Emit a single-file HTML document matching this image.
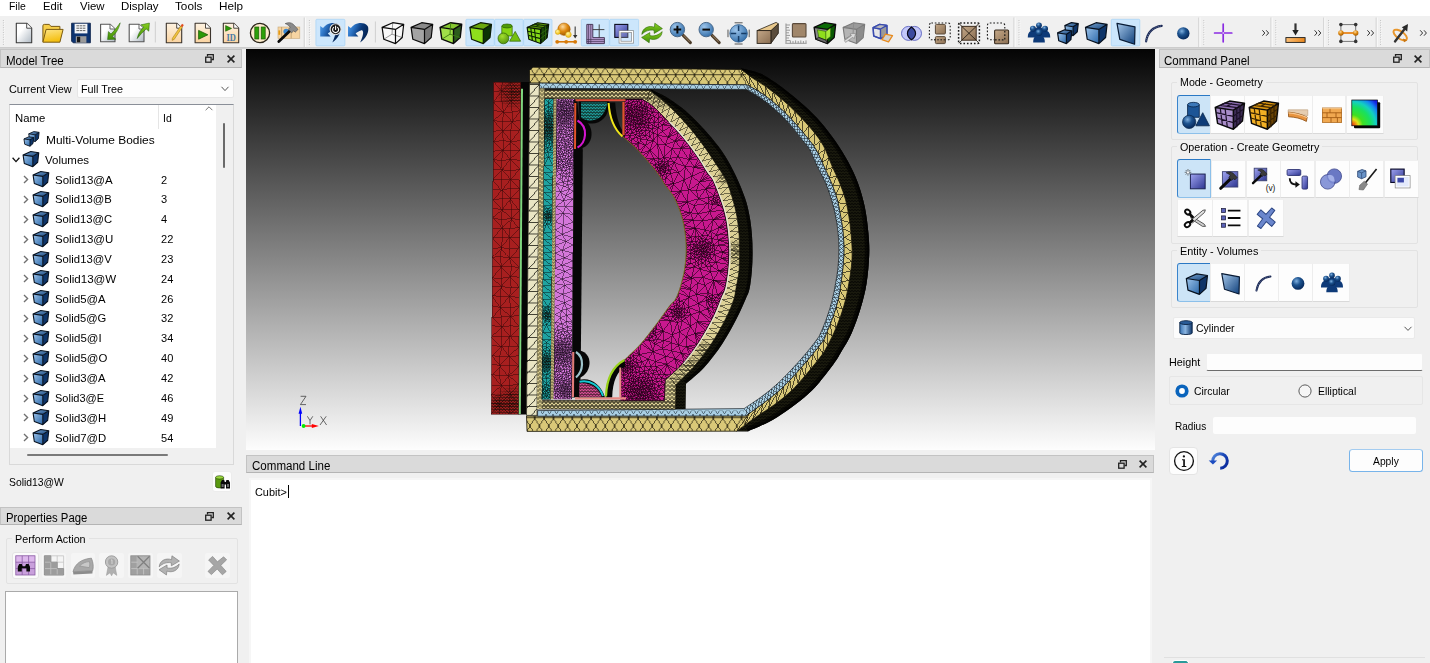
<!DOCTYPE html><html><head><meta charset="utf-8"><title>Cubit</title><style>
html,body{margin:0;padding:0;overflow:hidden;font-family:"Liberation Sans",sans-serif}
html{width:1430px;height:663px}
body{width:1430px;height:663px;overflow:hidden;background:#f0f0f0;position:relative;font-family:"Liberation Sans",sans-serif;font-size:12px;color:#000}
.t{position:absolute;white-space:nowrap;line-height:1.15em;transform-origin:0 50%;display:block}
.a{position:absolute;box-sizing:border-box}
.tb{position:absolute;box-sizing:border-box;background:#dadada;border:1px solid #c3c3c3;border-bottom-color:#b4b4b4}
.gb{position:absolute;box-sizing:border-box;border:1px solid #e2e2e2;border-radius:2px}
.wb{position:absolute;box-sizing:border-box;background:#fbfbfb;border-radius:3px;border:1px solid #ececec}
svg{position:absolute;overflow:visible}
</style></head><body>
<div class="a" style="left:0;top:0;width:1430px;height:16px;background:#fff"></div>
<span class="t" style="left:8.70px;top:0px;font-size:11.5px;transform:scaleX(0.9067);color:#000;">File</span>
<span class="t" style="left:42.80px;top:0px;font-size:11.5px;transform:scaleX(0.9740);color:#000;">Edit</span>
<span class="t" style="left:79.50px;top:0px;font-size:11.5px;transform:scaleX(0.9912);color:#000;">View</span>
<span class="t" style="left:120.80px;top:0px;font-size:11.5px;transform:scaleX(0.9972);color:#000;">Display</span>
<span class="t" style="left:175.00px;top:0px;font-size:11.5px;transform:scaleX(1.0207);color:#000;">Tools</span>
<span class="t" style="left:218.90px;top:0px;font-size:11.5px;transform:scaleX(1.0190);color:#000;">Help</span>
<div class="a" style="left:0;top:16px;width:1430px;height:31px;background:#f0f0f0"></div>
<div class="a" style="left:0;top:47px;width:1430px;height:2px;background:linear-gradient(#c8c8c8,#d8d8d8)"></div>
<svg style="left:0;top:0" width="1430" height="49" viewBox="0 0 1430 49"><defs>
<linearGradient id="gPage" x1="0" y1="0" x2="1" y2="1"><stop offset="0.35" stop-color="#ffffff"/><stop offset="1" stop-color="#aeb8c2"/></linearGradient>
<linearGradient id="gFold" x1="0" y1="0" x2="0.3" y2="1"><stop offset="0" stop-color="#fde58a"/><stop offset="1" stop-color="#f4bf10"/></linearGradient>
<linearGradient id="gCream" x1="0" y1="0" x2="0" y2="1"><stop offset="0" stop-color="#fef3e2"/><stop offset="1" stop-color="#fad3a0"/></linearGradient>
<linearGradient id="gBlueArrow" x1="0" y1="0.1" x2="1" y2="0.5"><stop offset="0" stop-color="#4f9cea"/><stop offset="0.3" stop-color="#2a70c0"/><stop offset="0.62" stop-color="#0a3878"/><stop offset="1" stop-color="#03224f"/></linearGradient>
<linearGradient id="gBlueFace" x1="0" y1="0" x2="1" y2="1"><stop offset="0" stop-color="#9cc3ea"/><stop offset="1" stop-color="#2a67a8"/></linearGradient>
<linearGradient id="gBlueTop" x1="0" y1="0" x2="1" y2="1"><stop offset="0" stop-color="#7aa6d2"/><stop offset="1" stop-color="#16447c"/></linearGradient>
<linearGradient id="gSurf" x1="0" y1="0" x2="1" y2="1"><stop offset="0" stop-color="#a6c8ea"/><stop offset="1" stop-color="#0f3f7a"/></linearGradient>
<radialGradient id="gBall" cx="0.38" cy="0.32" r="0.7"><stop offset="0" stop-color="#7fb0e0"/><stop offset="0.45" stop-color="#1d538f"/><stop offset="1" stop-color="#06285a"/></radialGradient>
<radialGradient id="gLens" cx="0.35" cy="0.3" r="0.8"><stop offset="0" stop-color="#9cc4ea"/><stop offset="1" stop-color="#2c69a6"/></radialGradient>
<radialGradient id="gOrb" cx="0.4" cy="0.3" r="0.75"><stop offset="0" stop-color="#fbd9a0"/><stop offset="0.5" stop-color="#e08a10"/><stop offset="1" stop-color="#9c5400"/></radialGradient>
<radialGradient id="gYel" cx="0.4" cy="0.3" r="0.75"><stop offset="0" stop-color="#fff2a0"/><stop offset="1" stop-color="#f0b800"/></radialGradient>
<radialGradient id="gGrn" cx="0.4" cy="0.3" r="0.8"><stop offset="0" stop-color="#a4e030"/><stop offset="1" stop-color="#4a8a06"/></radialGradient>
<linearGradient id="gBrown" x1="0" y1="0" x2="1" y2="1"><stop offset="0" stop-color="#c4a888"/><stop offset="1" stop-color="#8a6e52"/></linearGradient>
<linearGradient id="gPurp" x1="0" y1="0" x2="1" y2="1"><stop offset="0" stop-color="#a0a4f0"/><stop offset="1" stop-color="#2c3490"/></linearGradient>
<linearGradient id="gOrBar" x1="0" y1="0" x2="1" y2="0"><stop offset="0" stop-color="#fbc078"/><stop offset="1" stop-color="#e8861c"/></linearGradient>
<linearGradient id="gGrnArrow" x1="0" y1="0" x2="0" y2="1"><stop offset="0" stop-color="#8ad020"/><stop offset="1" stop-color="#3f8c08"/></linearGradient>
</defs><path d="M3.4 20V45" stroke="#c2c2c2" stroke-width="1" stroke-dasharray="1 1.4"/><path d="M4.4 20.6V45" stroke="#fafafa" stroke-width="1" stroke-dasharray="1 1.4"/><rect x="315.9" y="19.3" width="29.0" height="26.6" fill="#cce6fc" stroke="#a6d2f7" stroke-width="0.7" rx="1"/><rect x="465.9" y="19.3" width="28.4" height="26.6" fill="#cce6fc" stroke="#a6d2f7" stroke-width="0.7" rx="1"/><rect x="494.7" y="19.3" width="28.5" height="26.6" fill="#cce6fc" stroke="#a6d2f7" stroke-width="0.7" rx="1"/><rect x="523.6" y="19.3" width="28.4" height="26.6" fill="#cce6fc" stroke="#a6d2f7" stroke-width="0.7" rx="1"/><rect x="581.3" y="19.3" width="28.0" height="26.6" fill="#cce6fc" stroke="#a6d2f7" stroke-width="0.7" rx="1"/><rect x="609.7" y="19.3" width="28.9" height="26.6" fill="#cce6fc" stroke="#a6d2f7" stroke-width="0.7" rx="1"/><rect x="1111.3" y="19.3" width="28.5" height="26.6" fill="#cce6fc" stroke="#a6d2f7" stroke-width="0.7" rx="1"/><g transform="translate(24.0,33.0)"><path d="M-7.7 -9.8H2.7L7.7 -4.800000000000001V9.8H-7.7Z" fill="url(#gPage)" stroke="#3a3a3a" stroke-width="1.1" stroke-linejoin="round"/><path d="M2.7 -9.8V-4.800000000000001H7.7" fill="#fff" stroke="#3a3a3a" stroke-width="0.9" stroke-linejoin="round"/></g><g transform="translate(52.7,33.0)"><path d="M-9.8 8.8V-7.2Q-9.8 -8.6 -8.4 -8.6H-3.4L-1.8 -6.6H7.2V-3" fill="#f7cf4a" stroke="#7a5a10" stroke-width="1"/><path d="M-9.8 9.2L-6.6 -3.6H10.4L7.2 9.2Z" fill="url(#gFold)" stroke="#7a5a10" stroke-width="1" stroke-linejoin="round"/></g><g transform="translate(81.2,33.0)"><path d="M-9.6 -9.8H9.2V9.8H-8L-9.6 8.2Z" fill="#0e3470" stroke="#061c44" stroke-width="0.8"/><rect x="-6.6" y="-9.2" width="12.8" height="9.6" fill="#f4f6f8"/><path d="M-4.8 -7.2H4.4M-4.8 -4.8H4.4M-4.8 -2.4H4.4" stroke="#555" stroke-width="0.9" stroke-dasharray="2.6 0.6"/><rect x="-5.4" y="3.2" width="10.6" height="6.6" fill="#9a9a9a"/><rect x="-4.2" y="3.8" width="3.2" height="5.4" fill="#1a1a1a"/></g><g transform="translate(110.0,33.0)"><path d="M-9.4 -8.8H0L5 -4V8.8H-9.4Z" fill="url(#gPage)" stroke="#555" stroke-width="1.1" stroke-linejoin="round"/><path d="M0 -8.8V-4H5" fill="#fff" stroke="#555" stroke-width="0.9"/><path d="M10.2 -10.2C8.6 -3.4 5.6 0.8 2.4 3.4L5.8 6.2L-2.4 6.6L-1.6 -1.4L1 1C4 -2 7 -5.6 10.2 -10.2Z" fill="url(#gGrnArrow)" stroke="#1c5a04" stroke-width="0.5"/></g><g transform="translate(139.0,33.0)"><path d="M-9.8 -8.8H0L5 -4V8.8H-9.8Z" fill="url(#gPage)" stroke="#555" stroke-width="1.1" stroke-linejoin="round"/><path d="M0 -8.8V-4H5" fill="#fff" stroke="#555" stroke-width="0.9"/><path d="M-1.8 5.6C-0.8 0.4 1.6 -3.4 4.8 -5.8L2 -8.2L10.4 -10L9.8 -1.8L7.2 -4C4.4 -1.6 1 2 -1.8 5.6Z" fill="url(#gGrnArrow)" stroke="#1c5a04" stroke-width="0.5"/></g><g transform="translate(174.0,33.0)"><path d="M-7.7 -9.8H2.7L7.7 -4.800000000000001V9.8H-7.7Z" fill="url(#gCream)" stroke="#3c342c" stroke-width="1.1" stroke-linejoin="round"/><path d="M2.7 -9.8V-4.800000000000001H7.7" fill="#fff" stroke="#3c342c" stroke-width="0.9" stroke-linejoin="round"/><path d="M-1.6 5.2L6.6 -7L8.4 -5.8L0.2 6.4L-1.9 7.4Z" fill="#f2c23c" stroke="#9a7410" stroke-width="0.5"/><path d="M6.6 -7L8 -9.2L9.8 -8L8.4 -5.8Z" fill="#e04a1c"/></g><g transform="translate(202.8,33.0)"><path d="M-7.7 -9.8H2.7L7.7 -4.800000000000001V9.8H-7.7Z" fill="url(#gCream)" stroke="#3c342c" stroke-width="1.1" stroke-linejoin="round"/><path d="M2.7 -9.8V-4.800000000000001H7.7" fill="#fff" stroke="#3c342c" stroke-width="0.9" stroke-linejoin="round"/><path d="M-4.2 -2.6L5 1.8L-4.2 6.2Z" fill="#2c9a08" stroke="#1a5c04" stroke-width="0.8" stroke-linejoin="round"/></g><g transform="translate(231.0,33.0)"><path d="M-7.7 -9.8H2.7L7.7 -4.800000000000001V9.8H-7.7Z" fill="url(#gCream)" stroke="#3c342c" stroke-width="1.1" stroke-linejoin="round"/><path d="M2.7 -9.8V-4.800000000000001H7.7" fill="#fff" stroke="#3c342c" stroke-width="0.9" stroke-linejoin="round"/><path d="M-5.4 -7.4L0.6 -4.6L-5.4 -1.8Z" fill="#2c9a08" stroke="#1a5c04" stroke-width="0.6"/><text x="-4.6" y="7.6" font-family="Liberation Serif" font-size="9.4" font-weight="bold" fill="#4a7aa6" textLength="9.4" lengthAdjust="spacingAndGlyphs">ID</text></g><g transform="translate(260.0,33.0)"><circle cx="0" cy="0" r="9.6" fill="#fdeccc" stroke="#2a2418" stroke-width="1.3"/><rect x="-5.2" y="-6" width="4" height="12" fill="#2ca008" stroke="#1a5c04" stroke-width="0.7"/><rect x="1.2" y="-6" width="4" height="12" fill="#2ca008" stroke="#1a5c04" stroke-width="0.7"/></g><g transform="translate(289.0,33.0)"><rect x="-11" y="-6" width="21.8" height="11.4" fill="#f6d4a2" stroke="#c8a878" stroke-width="0.6"/><path d="M-7.4 -6V5.4M2.2 -6V5.4" stroke="#b89868" stroke-width="0.8"/><circle cx="-2.8" cy="-1.4" r="2.8" fill="#3a86d0"/><rect x="-10.6" y="-2.6" width="1.8" height="4.4" fill="#e89a10"/><path d="M-10.2 8.6L3.4 -4.4" stroke="#0a0a0a" stroke-width="2.8" stroke-linecap="round"/><path d="M-3.8 -9.4C-0.6 -11 2.4 -10.4 4.4 -8.6L9 -3.6L6.2 -0.8L4.8 -2.2L2.6 -0.2L-0.6 -3.8L1.2 -5.8C0 -7.6 -1.8 -8.6 -3.8 -9.4Z" fill="#8a8a8a" stroke="#4a4a4a" stroke-width="0.6"/></g><g transform="translate(330.4,33.0)"><g transform="translate(0.4,0)"><path d="M-10.6 -7L-7.8 -4.9C-5 -8 -2.6 -9.6 -0.2 -9.8C2 -10.2 4 -10 5.7 -9.4C8.4 -8.4 9.9 -6.4 9.7 -4.3C9.8 -2 9.2 0 8.2 2.1C6.6 5.2 4.2 7.8 1.5 9.4C2.8 7 3.8 4.4 4.2 2.1C4.5 0.6 4.6 -0.4 4.4 -1.3C4 -2.6 3.2 -2.9 2.3 -2.6C0.4 -2.2 -1.4 -1 -3 0.6L-0.2 3.5H-10.6Z" fill="url(#gBlueArrow)"/></g><circle cx="5.2" cy="-3.8" r="5.5" fill="#1a1a1a" stroke="#e8e8e8" stroke-width="1.1"/><path d="M3.2 -5.6A3 3 0 1 0 7.2 -5.6M5.2 -7V-3.6" fill="none" stroke="#fff" stroke-width="1.1" stroke-linecap="round"/></g><g transform="translate(358.6,33.0)"><path d="M-10.6 -7L-7.8 -4.9C-5 -8 -2.6 -9.6 -0.2 -9.8C2 -10.2 4 -10 5.7 -9.4C8.4 -8.4 9.9 -6.4 9.7 -4.3C9.8 -2 9.2 0 8.2 2.1C6.6 5.2 4.2 7.8 1.5 9.4C2.8 7 3.8 4.4 4.2 2.1C4.5 0.6 4.6 -0.4 4.4 -1.3C4 -2.6 3.2 -2.9 2.3 -2.6C0.4 -2.2 -1.4 -1 -3 0.6L-0.2 3.5H-10.6Z" fill="url(#gBlueArrow)"/></g><g transform="translate(393.0,33.0)"><path d="M-10.9 -5.6L-0.3 -10.3L10.7 -8.7L9.2 4.5L2.5 10.6L-9.2 6.2Z" fill="#fafafa" opacity="0.9"/><path d="M-0.3 -10.3L-1.0 1.2L-9.2 6.2M-1.0 1.2L9.2 4.5" fill="none" stroke="#9a9a9a" stroke-width="1"/><path d="M-10.9 -5.6L-0.3 -10.3L10.7 -8.7L9.2 4.5L2.5 10.6L-9.2 6.2ZM2.5 -3.6L-10.9 -5.6M2.5 -3.6L10.7 -8.7M2.5 -3.6L2.5 10.6" fill="none" stroke="#0a0a0a" stroke-width="1.2" stroke-linejoin="round"/></g><g transform="translate(422.0,33.0)"><path d="M-10.9 -5.6L2.5 -3.6L2.5 10.6L-9.2 6.2Z" fill="#a4a4a4"/><path d="M-10.9 -5.6L-0.3 -10.3L10.7 -8.7L2.5 -3.6Z" fill="#8a8a8a"/><path d="M2.5 -3.6L10.7 -8.7L9.2 4.5L2.5 10.6Z" fill="#7a7a7a"/><path d="M-10.9 -5.6L-0.3 -10.3L10.7 -8.7L9.2 4.5L2.5 10.6L-9.2 6.2ZM2.5 -3.6L-10.9 -5.6M2.5 -3.6L10.7 -8.7M2.5 -3.6L2.5 10.6" fill="none" stroke="#0a0a0a" stroke-width="1.2" stroke-linejoin="round"/></g><g transform="translate(451.0,33.0)"><path d="M-10.9 -5.6L2.5 -3.6L2.5 10.6L-9.2 6.2Z" fill="#a0e048"/><path d="M-10.9 -5.6L-0.3 -10.3L10.7 -8.7L2.5 -3.6Z" fill="#86c830"/><path d="M2.5 -3.6L10.7 -8.7L9.2 4.5L2.5 10.6Z" fill="#2c5c1c"/><path d="M-10.9 -5.6L-0.3 -10.3L10.7 -8.7L9.2 4.5L2.5 10.6L-9.2 6.2ZM2.5 -3.6L-10.9 -5.6M2.5 -3.6L10.7 -8.7M2.5 -3.6L2.5 10.6" fill="none" stroke="#0a0a0a" stroke-width="1.4" stroke-linejoin="round"/><path d="M-0.3 -10.3L-1.0 1.2L-9.2 6.2M-1.0 1.2L9.2 4.5" fill="none" stroke="#3c7a10" stroke-width="0.9"/></g><g transform="translate(480.8,33.0)"><path d="M-10.9 -5.6L2.5 -3.6L2.5 10.6L-9.2 6.2Z" fill="#8ede1c"/><path d="M-10.9 -5.6L-0.3 -10.3L10.7 -8.7L2.5 -3.6Z" fill="#6aa80c"/><path d="M2.5 -3.6L10.7 -8.7L9.2 4.5L2.5 10.6Z" fill="#0c3404"/><path d="M-10.9 -5.6L-0.3 -10.3L10.7 -8.7L9.2 4.5L2.5 10.6L-9.2 6.2ZM2.5 -3.6L-10.9 -5.6M2.5 -3.6L10.7 -8.7M2.5 -3.6L2.5 10.6" fill="none" stroke="#0a1a04" stroke-width="1.2" stroke-linejoin="round"/></g><g transform="translate(507.2,33.0)"><path d="M-5.4 -7V3H5V-7" fill="#86d414" stroke="#2e6204" stroke-width="0.7"/><ellipse cx="-0.2" cy="-7" rx="5.2" ry="2" fill="#4e9a08" stroke="#2e6204" stroke-width="0.7"/><path d="M8 -1.6L13.4 8.2H2.4Z" fill="#74c010" stroke="#2e6204" stroke-width="0.7" stroke-linejoin="round"/><circle cx="-3.8" cy="5.4" r="5.4" fill="url(#gGrn)" stroke="#2e6204" stroke-width="0.7"/></g><g transform="translate(538.0,33.0)"><path d="M-10.9 -5.6L2.5 -3.6L2.5 10.6L-9.2 6.2Z" fill="#86d818"/><path d="M-10.9 -5.6L-0.3 -10.3L10.7 -8.7L2.5 -3.6Z" fill="#5c960a"/><path d="M2.5 -3.6L10.7 -8.7L9.2 4.5L2.5 10.6Z" fill="#0c2c04"/><path d="M-10.9 -5.6L-0.3 -10.3L10.7 -8.7L9.2 4.5L2.5 10.6L-9.2 6.2ZM2.5 -3.6L-10.9 -5.6M2.5 -3.6L10.7 -8.7M2.5 -3.6L2.5 10.6" fill="none" stroke="#081404" stroke-width="1.1" stroke-linejoin="round"/><path d="M-7.2 -4.9L-5.6 7.6M-3.6 -4.5L-2 9M-10.4 -1.8L2.5 1M-9.8 2.2L2.5 5.6" stroke="#0c2404" stroke-width="1.1" fill="none"/><path d="M-7.2 -7.2L5.4 -5.4M-3.8 -8.8L8 -7.1M-6.6 -7.5L-3.4 -9M-2 -6.6L1.4 -8.4" stroke="#0c2404" stroke-width="0.9" fill="none"/><path d="M5 -5.2V9M7.4 -6.8V6.6M2.5 1L9.6 -4M2.5 5.6L9.4 0.4" stroke="#2e6a0c" stroke-width="0.9" fill="none"/></g><g transform="translate(565.6,33.0)"><path d="M9.6 -6.6V4" stroke="#555" stroke-width="1.3"/><path d="M9.6 5.6L7.4 2H11.8Z" fill="#333"/><circle cx="-1.6" cy="-3.8" r="6.2" fill="url(#gOrb)" stroke="#a45c04" stroke-width="0.5"/><circle cx="-7.8" cy="-1" r="2.5" fill="url(#gYel)" stroke="#c89400" stroke-width="0.4"/><circle cx="2.8" cy="1.6" r="2.9" fill="url(#gYel)" stroke="#c89400" stroke-width="0.4"/><path d="M-8.4 8.8H9.6" stroke="#d87a08" stroke-width="1.6"/><circle cx="-8.4" cy="8.8" r="1.9" fill="#d87a08"/><circle cx="0.6" cy="8.8" r="1.9" fill="#d87a08"/><circle cx="9.6" cy="8.8" r="1.9" fill="#d87a08"/></g><g transform="translate(595.2,33.0)"><path d="M-8.4 -8.6H-2.4V4.6H9.2V10.6H-8.4Z" fill="#b89cd0" stroke="#3c2c4c" stroke-width="0.9"/><path d="M-6.6 -8.6V10.6M-4.4 -8.6V10.6M-8.4 6.6H9.2M-8.4 8.6H9.2" stroke="#3c2c4c" stroke-width="0.7"/><path d="M-2.4 -3.4H9.2M4 -8.6V4.6" stroke="#333" stroke-width="0.9"/></g><g transform="translate(624.0,33.0)"><rect x="-9.2" y="-8.6" width="13" height="13" fill="url(#gPurp)" stroke="#0a0a1a" stroke-width="1.1"/><rect x="-4" y="-1.4" width="12.6" height="10.6" fill="#e8f0ff" fill-opacity="0.25" stroke="#8a8a8a" stroke-width="2.6"/><rect x="-4" y="-1.4" width="12.6" height="10.6" fill="none" stroke="#fff" stroke-width="1.2"/></g><g transform="translate(652.0,33.0)"><path d="M-10.2 1.4C-9.6 -5.4 -2.8 -7.8 2.4 -5.8L2.8 -9.8L10.4 -4.4L2.2 0.4L2.2 -2.6C-2.4 -3.6 -6.8 -2 -10.2 1.4Z" fill="url(#gGrnArrow)" stroke="#2c6a06" stroke-width="0.6"/><path d="M10.2 -1.4C9.6 5.4 2.8 7.8 -2.4 5.8L-2.8 9.8L-10.4 4.4L-2.2 -0.4L-2.2 2.6C2.4 3.6 6.8 2 10.2 -1.4Z" fill="url(#gGrnArrow)" stroke="#2c6a06" stroke-width="0.6"/></g><g transform="translate(680.6,33.0)"><path d="M2.6 2.4L9.8 9.6" stroke="#4a3a28" stroke-width="3" stroke-linecap="round"/><path d="M3 2.4L9.2 8.6" stroke="#8a7458" stroke-width="1.1"/><circle cx="-3.2" cy="-3.4" r="7.2" fill="url(#gLens)" stroke="#4a6a8c" stroke-width="1"/><path d="M-7 -3.4H0.6M-3.2 -7.2V0.4" stroke="#0a0a0a" stroke-width="2"/></g><g transform="translate(709.4,33.0)"><path d="M2.6 2.4L9.8 9.6" stroke="#4a3a28" stroke-width="3" stroke-linecap="round"/><path d="M3 2.4L9.2 8.6" stroke="#8a7458" stroke-width="1.1"/><circle cx="-3.2" cy="-3.4" r="7.2" fill="url(#gLens)" stroke="#4a6a8c" stroke-width="1"/><path d="M-7 -3.4H0.6" stroke="#0a0a0a" stroke-width="2"/></g><g transform="translate(738.6,33.0)"><circle cx="0" cy="0.4" r="8.8" fill="url(#gLens)" stroke="#2c5c8c" stroke-width="0.8"/><path d="M0 -7.6V-2M0 3V8.4M-8 0.4H-2.4M2.6 0.4H8" stroke="#163c66" stroke-width="1.5"/><path d="M-4 -10.2H4M-4 11H4M-10.6 -3.4V4.2M10.6 -3.4V4.2" stroke="#555" stroke-width="1"/></g><g transform="translate(767.5,33.0)"><path d="M3.4 -2.4L10.8 -9.2V0.2L3.4 10.4Z" fill="#5a4c3c" stroke="#2a2218" stroke-width="0.9" stroke-linejoin="round"/><path d="M-10.4 -2.4L8.6 -10.6L10.8 -9.2L3.4 -2.4Z" fill="#e8c88c" stroke="#2a2218" stroke-width="0.8" stroke-linejoin="round"/><rect x="-10.4" y="-2.4" width="13.8" height="12.8" fill="url(#gBrown)" stroke="#2a2218" stroke-width="0.9"/></g><g transform="translate(796.4,33.0)"><path d="M-10.4 -9.6V10.4H10.2" fill="none" stroke="#aaa" stroke-width="1.4"/><path d="M-10.4 -8H-6.4M-10.4 -5.4H-7.4M-10.4 -2.8H-6.4M-10.4 -0.2H-7.4M-10.4 2.4H-6.4M-10.4 5H-7.4M-10.4 7.6H-6.4" stroke="#999" stroke-width="1"/><path d="M-6 10.4V7.4M-3.4 10.4V8M-0.8 10.4V7.4M1.8 10.4V8M4.4 10.4V7.4M7 10.4V8M9.6 10.4V7.4" stroke="#999" stroke-width="1"/><rect x="-4" y="-9.4" width="13.6" height="13.4" rx="1" fill="#a0866a" stroke="#5a4a3a" stroke-width="1.1"/></g><g transform="translate(825.0,33.0)"><path d="M-10.9 -5.6L2.5 -3.6L2.5 10.6L-9.2 6.2Z" fill="#8a8a8a"/><path d="M-10.9 -5.6L-0.3 -10.3L10.7 -8.7L2.5 -3.6Z" fill="#0a6a04"/><path d="M2.5 -3.6L10.7 -8.7L9.2 4.5L2.5 10.6Z" fill="#0a5a04"/><path d="M-10.9 -5.6L-0.3 -10.3L10.7 -8.7L9.2 4.5L2.5 10.6L-9.2 6.2ZM2.5 -3.6L-10.9 -5.6M2.5 -3.6L10.7 -8.7M2.5 -3.6L2.5 10.6" fill="none" stroke="#0a0a0a" stroke-width="1.3" stroke-linejoin="round"/><path d="M-7.6 -3.2L0.8 -1.6L1 7.2L-6.2 4.4Z" fill="#8ede1c" stroke="#2e6204" stroke-width="0.6"/><path d="M0.8 -1.6L5.6 -5L5.4 3.4L1 7.2Z" fill="#a8ec3c" stroke="#2e6204" stroke-width="0.5"/><path d="M-6.2 4.4L1 7.2L2.5 10.6L-9.2 6.2Z" fill="#6a6a6a" stroke="#0a0a0a" stroke-width="0.7"/></g><g transform="translate(854.0,33.0)"><path d="M-10.9 -5.6L2.5 -3.6L2.5 10.6L-9.2 6.2Z" fill="#b4b4b4"/><path d="M-10.9 -5.6L-0.3 -10.3L10.7 -8.7L2.5 -3.6Z" fill="#9a9a9a"/><path d="M2.5 -3.6L10.7 -8.7L9.2 4.5L2.5 10.6Z" fill="#8c8c8c"/><path d="M-10.9 -5.6L-0.3 -10.3L10.7 -8.7L9.2 4.5L2.5 10.6L-9.2 6.2ZM2.5 -3.6L-10.9 -5.6M2.5 -3.6L10.7 -8.7M2.5 -3.6L2.5 10.6" fill="none" stroke="#7a7a7a" stroke-width="1.1" stroke-linejoin="round"/><path d="M-0.3 -10.3L-1.0 1.2L-9.2 6.2M-1.0 1.2L9.2 4.5" fill="none" stroke="#8a8a8a" stroke-width="0.9"/><path d="M-9.6 7.6L-2.6 2.6L-4 0.8L1.6 0.4L0.2 5.8L-1.2 4.2L-8.4 9.4Z" fill="#dcdcdc" stroke="#8a8a8a" stroke-width="0.7"/></g><g transform="translate(882.7,33.0)"><path d="M-9.6 -5.4L-3 -8.6L4.2 -7.6L4.2 2.4L-2.2 5.6L-9 3Z" fill="#e6e6e8" stroke="#3a4cae" stroke-width="1.4" stroke-linejoin="round"/><path d="M-9.6 -5.4L-2.2 -4L4.2 -7.6M-2.2 -4V5.6" fill="none" stroke="#3a4cae" stroke-width="1.2"/><path d="M-2.2 -4L4.2 -7.6V2.4L-2.2 5.6Z" fill="#9a9a9a"/><path d="M-9.6 -5.4L-3 -8.6L4.2 -7.6L-2.2 -4Z" fill="#bcbcbc"/><path d="M-9.6 -5.4L-3 -8.6L4.2 -7.6L4.2 2.4L-2.2 5.6L-9 3ZM-9.6 -5.4L-2.2 -4L4.2 -7.6M-2.2 -4V5.6" fill="none" stroke="#3a4cae" stroke-width="1.3" stroke-linejoin="round"/><path d="M2.8 1.2L9.8 2.6L5.8 8.8L-0.8 6.6Z" fill="#d2d2d2" stroke="#e88a1c" stroke-width="1.3" stroke-linejoin="round"/></g><g transform="translate(911.5,33.0)"><circle cx="-3" cy="0.4" r="7" fill="#c4c8fa" stroke="#4a52b8" stroke-width="0.8"/><circle cx="3" cy="0.4" r="7" fill="#c4c8fa" stroke="#4a52b8" stroke-width="0.8"/><path d="M0 -6C5.4 -2 5.4 3 0 6.8C-5.4 3 -5.4 -2 0 -6Z" fill="#3c4aa0" stroke="#0a0a1a" stroke-width="1.2"/></g><g transform="translate(940.0,33.0)"><rect x="-10.6" y="-10" width="20.8" height="16.8" rx="2" fill="none" stroke="#1a1a1a" stroke-width="1.1" stroke-dasharray="1.6 1.8"/><rect x="-4.6" y="-8.6" width="10" height="9.6" rx="1" fill="url(#gBrown)" stroke="#5a4a3a" stroke-width="1"/><rect x="-4.6" y="3.6" width="10" height="7" rx="1" fill="url(#gBrown)" stroke="#5a4a3a" stroke-width="1"/><path d="M-6 6.8H6.6" stroke="#1a1a1a" stroke-width="1" stroke-dasharray="1.6 1.6"/></g><g transform="translate(969.0,33.0)"><rect x="-10.4" y="-10" width="20.8" height="20.6" rx="1.5" fill="none" stroke="#1a1a1a" stroke-width="1.5" stroke-dasharray="1.6 1.9"/><rect x="-7.2" y="-6.6" width="14.4" height="13.8" fill="url(#gBrown)" stroke="#4a3a2c" stroke-width="1.1"/><path d="M-7.2 -6.6L7.2 7.2M7.2 -6.6L-7.2 7.2M-10 -9.6L-7.2 -6.6M10 -9.6L7.2 -6.6M-10 10.2L-7.2 7.2M10 10.2L7.2 7.2" stroke="#2a2218" stroke-width="0.9"/></g><g transform="translate(998.0,33.0)"><rect x="-10.6" y="-10" width="17.4" height="16.8" rx="2.4" fill="none" stroke="#1a1a1a" stroke-width="1.1" stroke-dasharray="1.7 1.8"/><rect x="-3.4" y="-3" width="14" height="13.8" rx="1" fill="url(#gBrown)" stroke="#3a2e22" stroke-width="1.1"/><path d="M-3 6.8H6.8V-3" fill="none" stroke="#1a1a1a" stroke-width="1.2" stroke-dasharray="1.7 1.7"/></g><g transform="translate(1039.0,33.0)"><g transform="scale(1.08)"><g transform="translate(0,-5.4) scale(0.92)"><path d="M-5 6.6C-5 2 -3 0.2 0 0.2C3 0.2 5 2 5 6.6Z" fill="#0e3a78"/><circle cx="0" cy="-1.9" r="2.9" fill="url(#gBall)"/></g><g transform="translate(-5.6,-2.2) scale(0.96)"><path d="M-5 6.6C-5 2 -3 0.2 0 0.2C3 0.2 5 2 5 6.6Z" fill="#0e3a78"/><circle cx="0" cy="-1.9" r="2.9" fill="url(#gBall)"/></g><g transform="translate(5.6,-2.2) scale(0.96)"><path d="M-5 6.6C-5 2 -3 0.2 0 0.2C3 0.2 5 2 5 6.6Z" fill="#0e3a78"/><circle cx="0" cy="-1.9" r="2.9" fill="url(#gBall)"/></g><g transform="translate(0,1.6) scale(1.08)"><path d="M-5 6.6C-5 2 -3 0.2 0 0.2C3 0.2 5 2 5 6.6Z" fill="#0e3a78"/><circle cx="0" cy="-1.9" r="2.9" fill="url(#gBall)"/></g></g></g><g transform="translate(1068.0,33.0)"><g transform="translate(3.6,-4)"><g transform="scale(0.62)"><path d="M-10.9 -5.6L2.5 -3.6L2.5 10.6L-9.2 6.2Z" fill="url(#gBlueFace)"/><path d="M-10.9 -5.6L-0.3 -10.3L10.7 -8.7L2.5 -3.6Z" fill="url(#gBlueTop)"/><path d="M2.5 -3.6L10.7 -8.7L9.2 4.5L2.5 10.6Z" fill="#0e3468"/><path d="M-10.9 -5.6L-0.3 -10.3L10.7 -8.7L9.2 4.5L2.5 10.6L-9.2 6.2ZM2.5 -3.6L-10.9 -5.6M2.5 -3.6L10.7 -8.7M2.5 -3.6L2.5 10.6" fill="none" stroke="#06101e" stroke-width="1.94" stroke-linejoin="round"/></g></g><g transform="translate(-3.2,3.6)"><g transform="scale(0.66)"><path d="M-10.9 -5.6L2.5 -3.6L2.5 10.6L-9.2 6.2Z" fill="url(#gBlueFace)"/><path d="M-10.9 -5.6L-0.3 -10.3L10.7 -8.7L2.5 -3.6Z" fill="url(#gBlueTop)"/><path d="M2.5 -3.6L10.7 -8.7L9.2 4.5L2.5 10.6Z" fill="#0e3468"/><path d="M-10.9 -5.6L-0.3 -10.3L10.7 -8.7L9.2 4.5L2.5 10.6L-9.2 6.2ZM2.5 -3.6L-10.9 -5.6M2.5 -3.6L10.7 -8.7M2.5 -3.6L2.5 10.6" fill="none" stroke="#06101e" stroke-width="1.82" stroke-linejoin="round"/></g></g></g><g transform="translate(1096.4,33.0)"><g transform="scale(1.0)"><path d="M-10.9 -5.6L2.5 -3.6L2.5 10.6L-9.2 6.2Z" fill="url(#gBlueFace)"/><path d="M-10.9 -5.6L-0.3 -10.3L10.7 -8.7L2.5 -3.6Z" fill="url(#gBlueTop)"/><path d="M2.5 -3.6L10.7 -8.7L9.2 4.5L2.5 10.6Z" fill="#0e3468"/><path d="M-10.9 -5.6L-0.3 -10.3L10.7 -8.7L9.2 4.5L2.5 10.6L-9.2 6.2ZM2.5 -3.6L-10.9 -5.6M2.5 -3.6L10.7 -8.7M2.5 -3.6L2.5 10.6" fill="none" stroke="#06101e" stroke-width="1.20" stroke-linejoin="round"/></g></g><g transform="translate(1125.4,33.0)"><path d="M-8.4 -9.6L9.6 -6.2L9.2 11.2L-5.6 6.4Z" fill="url(#gSurf)" stroke="#081a34" stroke-width="1.2" stroke-linejoin="round"/></g><g transform="translate(1154.5,33.0)"><path d="M-8.4 8.4C-7 -0.6 -1.4 -6.2 7.2 -7.2" fill="none" stroke="#1c2a54" stroke-width="2.2" stroke-linecap="round"/><path d="M-8.4 8.4C-7 -0.6 -1.4 -6.2 7.2 -7.2" fill="none" stroke="#8a9ac8" stroke-width="0.7" stroke-dasharray="1 1.2"/></g><g transform="translate(1183.3,33.0)"><circle cx="0" cy="0.4" r="6.2" fill="url(#gBall)"/></g><g transform="translate(1223.2,33.0)"><path d="M-8.6 0H8.6M0 -8.8V8.8" stroke="#8a2be2" stroke-width="1.7" stroke-linecap="round"/><circle cx="0" cy="0" r="1.1" fill="#fff" stroke="#8a2be2" stroke-width="0.5"/></g><g transform="translate(1295.5,33.0)"><path d="M0 -9.6V-2" stroke="#333" stroke-width="2.2"/><path d="M0 2.4L-3.2 -3H3.2Z" fill="#222"/><rect x="-9.6" y="4.6" width="19.2" height="4.8" fill="url(#gOrBar)" stroke="#1a1a1a" stroke-width="0.9"/></g><g transform="translate(1348.3,33.0)"><path d="M-7.4 -8.4H7.4M-7.4 8.4H7.4M-7.4 -8.4V8.4M7.4 -8.4V8.4" stroke="#777" stroke-width="1"/><circle cx="-7.4" cy="-8.4" r="1.8" fill="#333"/><circle cx="7.4" cy="-8.4" r="1.8" fill="#333"/><circle cx="-7.4" cy="8.4" r="1.8" fill="#333"/><circle cx="7.4" cy="8.4" r="1.8" fill="#333"/><path d="M-7.4 0H7.4" stroke="#e8861c" stroke-width="1.8"/><circle cx="-7.4" cy="0" r="2.7" fill="url(#gOrb)"/><circle cx="7.4" cy="0" r="2.7" fill="url(#gOrb)"/></g><g transform="translate(1400.6,33.0)"><ellipse cx="-0.4" cy="2" rx="7.8" ry="3.6" transform="rotate(35 -0.4 2)" fill="none" stroke="#e8962c" stroke-width="2"/><path d="M-5.6 8.4L4.2 -4.2" stroke="#333" stroke-width="2.4" stroke-linecap="round"/><path d="M7.4 -9L6.6 -1.6L1.2 -5.8Z" fill="#2a2a2a"/><path d="M2.4 5.6L6.6 7.4L3.4 9.2Z" fill="#c87410"/></g><path d="M155.3 21.5V42.5" stroke="#cfcfcf" stroke-width="1"/><path d="M375.4 21.5V42.5" stroke="#cfcfcf" stroke-width="1"/><path d="M304.3 17.5V47" stroke="#d4d4d4" stroke-width="1.2"/><path d="M305.4 17.5V47" stroke="#fbfbfb" stroke-width="1"/><path d="M1014.0 17.5V47" stroke="#d4d4d4" stroke-width="1.2"/><path d="M1015.1 17.5V47" stroke="#fbfbfb" stroke-width="1"/><path d="M1198.8 17.5V47" stroke="#d4d4d4" stroke-width="1.2"/><path d="M1199.9 17.5V47" stroke="#fbfbfb" stroke-width="1"/><path d="M1271.0 17.5V47" stroke="#d4d4d4" stroke-width="1.2"/><path d="M1272.1 17.5V47" stroke="#fbfbfb" stroke-width="1"/><path d="M1323.7 17.5V47" stroke="#d4d4d4" stroke-width="1.2"/><path d="M1324.8 17.5V47" stroke="#fbfbfb" stroke-width="1"/><path d="M1376.2 17.5V47" stroke="#d4d4d4" stroke-width="1.2"/><path d="M1377.3 17.5V47" stroke="#fbfbfb" stroke-width="1"/><path d="M309.4 20V45" stroke="#c2c2c2" stroke-width="1" stroke-dasharray="1 1.4"/><path d="M310.4 20.6V45" stroke="#fafafa" stroke-width="1" stroke-dasharray="1 1.4"/><path d="M1019.0 20V45" stroke="#c2c2c2" stroke-width="1" stroke-dasharray="1 1.4"/><path d="M1020.0 20.6V45" stroke="#fafafa" stroke-width="1" stroke-dasharray="1 1.4"/><path d="M1203.8 20V45" stroke="#c2c2c2" stroke-width="1" stroke-dasharray="1 1.4"/><path d="M1204.8 20.6V45" stroke="#fafafa" stroke-width="1" stroke-dasharray="1 1.4"/><path d="M1275.8 20V45" stroke="#c2c2c2" stroke-width="1" stroke-dasharray="1 1.4"/><path d="M1276.8 20.6V45" stroke="#fafafa" stroke-width="1" stroke-dasharray="1 1.4"/><path d="M1328.6 20V45" stroke="#c2c2c2" stroke-width="1" stroke-dasharray="1 1.4"/><path d="M1329.6 20.6V45" stroke="#fafafa" stroke-width="1" stroke-dasharray="1 1.4"/><path d="M1380.6 20V45" stroke="#c2c2c2" stroke-width="1" stroke-dasharray="1 1.4"/><path d="M1381.6 20.6V45" stroke="#fafafa" stroke-width="1" stroke-dasharray="1 1.4"/><path d="M1262.4 30.3L1264.8 33L1262.4 35.7M1266.2 30.3L1268.6 33L1266.2 35.7" fill="none" stroke="#333" stroke-width="1"/><path d="M1314.6 30.3L1317.0 33L1314.6 35.7M1318.4 30.3L1320.8 33L1318.4 35.7" fill="none" stroke="#333" stroke-width="1"/><path d="M1367.4 30.3L1369.8 33L1367.4 35.7M1371.2 30.3L1373.6 33L1371.2 35.7" fill="none" stroke="#333" stroke-width="1"/><path d="M1420.2 30.3L1422.6 33L1420.2 35.7M1424.0 30.3L1426.4 33L1424.0 35.7" fill="none" stroke="#333" stroke-width="1"/></svg>
<svg style="left:246px;top:49px" width="909" height="401" viewBox="246 49 909 401"><defs><linearGradient id="bgg" x1="0" y1="0" x2="0" y2="1"><stop offset="0" stop-color="#040404"/><stop offset="1" stop-color="#fdfdfd"/></linearGradient><pattern id="pBig" width="9.4" height="15.6" patternUnits="userSpaceOnUse" x="530" y="67.4"><path d="M0 7.8H9.4M0 0L4.7 7.8L9.4 0M0 15.6L4.7 7.8L9.4 15.6" fill="none" stroke="#1a1608" stroke-width="0.75" shape-rendering="crispEdges"/></pattern><pattern id="pArc" width="6" height="7" patternUnits="userSpaceOnUse"><path d="M0 0L3 7L6 0M0 7L3 0L6 7M0 3.5H6" fill="none" stroke="#1a1608" stroke-width="0.6"/></pattern><pattern id="pBlue" width="7" height="5.4" patternUnits="userSpaceOnUse" y="83.5"><path d="M0 0L3.5 5.4L7 0" fill="none" stroke="#1c2a33" stroke-width="0.7" shape-rendering="crispEdges"/></pattern><pattern id="pRed" width="13.4" height="14" patternUnits="userSpaceOnUse" x="493.5" y="82"><path d="M0 0H13.4M0 7H13.4M0 0L6.7 7L13.4 0M0 14L6.7 7L13.4 14M6.7 0V14M0 0V14" fill="none" stroke="#1a0404" stroke-width="0.5"/></pattern><pattern id="pCream" width="11" height="11.5" patternUnits="userSpaceOnUse" x="529" y="84"><path d="M0 0H11M0 11.5L11 0" fill="none" stroke="#15150c" stroke-width="0.8" shape-rendering="crispEdges"/></pattern><pattern id="pFine" width="4" height="4" patternUnits="userSpaceOnUse"><path d="M0 0L2 4L4 0M0 2H4" fill="none" stroke="#0d0c05" stroke-width="0.85"/></pattern><pattern id="pFine2" width="3" height="3" patternUnits="userSpaceOnUse"><path d="M0 0L1.5 3L3 0M0 1.5H3" fill="none" stroke="#0d0c05" stroke-width="0.7"/></pattern><pattern id="pMag" width="8.6" height="10" patternUnits="userSpaceOnUse"><path d="M0 0L4.3 5L8.6 0M0 10L4.3 5L8.6 10M0 5H8.6M4.3 0V10M0 0V10" fill="none" stroke="#1c0212" stroke-width="0.55"/></pattern><pattern id="pMagF" width="3.2" height="3.2" patternUnits="userSpaceOnUse"><path d="M0 0L1.6 3.2L3.2 0M0 1.6H3.2" fill="none" stroke="#1c0212" stroke-width="0.6"/></pattern><pattern id="pVio" width="5" height="5.6" patternUnits="userSpaceOnUse"><path d="M0 0L2.5 5.6L5 0M0 2.8H5M0 0H5" fill="none" stroke="#1a0a1c" stroke-width="0.45"/></pattern><pattern id="pVioF" width="2.6" height="2.6" patternUnits="userSpaceOnUse"><path d="M0 0L1.3 2.6L2.6 0M0 1.3H2.6" fill="none" stroke="#1a0a1c" stroke-width="0.6"/></pattern><pattern id="pTeal" width="4.4" height="6" patternUnits="userSpaceOnUse"><path d="M0 0L2.2 6L4.4 0M0 3H4.4M0 0H4.4" fill="none" stroke="#04191a" stroke-width="0.7"/></pattern><pattern id="pDark" width="3" height="3" patternUnits="userSpaceOnUse"><path d="M0 0L1.5 3L3 0M0 1.5H3" fill="none" stroke="#4a4a2a" stroke-width="0.5"/></pattern><radialGradient id="spot"><stop offset="0" stop-color="#fff"/><stop offset="0.55" stop-color="#fff" stop-opacity="0.55"/><stop offset="1" stop-color="#fff" stop-opacity="0"/></radialGradient></defs><rect x="246" y="49" width="909" height="401" fill="url(#bgg)"/><path d="M741.0 68.3C744.2 69.2 754.5 71.2 760.2 73.6C765.9 76.0 770.3 79.2 775.3 82.6C780.3 86.0 785.4 90.0 790.4 94.0C795.4 98.0 800.5 102.1 805.5 106.8C810.5 111.5 815.5 116.1 820.5 121.9C825.5 127.7 831.0 134.9 835.6 141.5C840.2 148.1 844.3 154.6 848.0 161.5C851.7 168.4 855.2 175.6 858.0 183.2C860.8 190.8 863.1 198.7 864.8 207.0C866.5 215.3 867.7 224.9 868.4 232.9C869.1 240.9 869.5 246.6 869.2 255.0C868.9 263.4 868.0 274.4 866.6 283.2C865.2 292.0 863.2 299.7 860.7 308.0C858.2 316.3 854.8 325.8 851.7 332.9C848.6 340.0 844.9 345.6 842.0 350.5C839.1 355.4 838.4 357.3 834.6 362.6C830.9 367.9 824.5 376.4 819.5 382.2C814.5 388.0 810.0 392.5 804.5 397.3C799.0 402.1 792.4 406.8 786.4 410.9C780.4 415.0 774.7 418.8 768.3 422.2C761.9 425.6 751.3 429.9 747.9 431.4L736.0 431.6L745.6 415.9C748.9 413.5 759.2 406.4 765.2 401.8C771.2 397.2 776.5 393.2 781.8 388.3C787.1 383.4 792.1 377.7 796.9 372.4C801.7 367.1 806.2 361.8 810.5 356.6C814.8 351.5 819.8 345.4 822.5 341.5C825.2 337.6 824.7 337.1 826.5 332.9C828.3 328.7 831.2 321.8 833.1 316.3C835.0 310.8 836.8 305.3 838.1 299.8C839.4 294.3 840.1 288.7 840.9 283.2C841.7 277.7 842.5 272.1 843.0 266.6C843.5 261.1 843.9 255.6 843.9 250.0C843.9 244.4 843.6 238.5 843.1 232.9C842.6 227.3 841.6 221.8 840.6 216.3C839.6 210.8 838.8 205.3 837.3 199.8C835.8 194.3 833.7 188.7 831.5 183.2C829.3 177.7 826.5 172.1 824.0 166.6C821.5 161.1 819.3 155.2 816.2 150.0C813.1 144.8 809.8 140.8 805.5 135.5C801.2 130.2 795.4 123.4 790.4 118.1C785.4 112.8 780.3 108.1 775.3 103.8C770.3 99.5 765.0 95.6 760.2 92.4C755.4 89.2 748.9 86.1 746.6 84.8Z" fill="#090904"/><clipPath id="cDark"><path d="M741.0 68.3C744.2 69.2 754.5 71.2 760.2 73.6C765.9 76.0 770.3 79.2 775.3 82.6C780.3 86.0 785.4 90.0 790.4 94.0C795.4 98.0 800.5 102.1 805.5 106.8C810.5 111.5 815.5 116.1 820.5 121.9C825.5 127.7 831.0 134.9 835.6 141.5C840.2 148.1 844.3 154.6 848.0 161.5C851.7 168.4 855.2 175.6 858.0 183.2C860.8 190.8 863.1 198.7 864.8 207.0C866.5 215.3 867.7 224.9 868.4 232.9C869.1 240.9 869.5 246.6 869.2 255.0C868.9 263.4 868.0 274.4 866.6 283.2C865.2 292.0 863.2 299.7 860.7 308.0C858.2 316.3 854.8 325.8 851.7 332.9C848.6 340.0 844.9 345.6 842.0 350.5C839.1 355.4 838.4 357.3 834.6 362.6C830.9 367.9 824.5 376.4 819.5 382.2C814.5 388.0 810.0 392.5 804.5 397.3C799.0 402.1 792.4 406.8 786.4 410.9C780.4 415.0 774.7 418.8 768.3 422.2C761.9 425.6 751.3 429.9 747.9 431.4L736.0 431.6L745.6 415.9C748.9 413.5 759.2 406.4 765.2 401.8C771.2 397.2 776.5 393.2 781.8 388.3C787.1 383.4 792.1 377.7 796.9 372.4C801.7 367.1 806.2 361.8 810.5 356.6C814.8 351.5 819.8 345.4 822.5 341.5C825.2 337.6 824.7 337.1 826.5 332.9C828.3 328.7 831.2 321.8 833.1 316.3C835.0 310.8 836.8 305.3 838.1 299.8C839.4 294.3 840.1 288.7 840.9 283.2C841.7 277.7 842.5 272.1 843.0 266.6C843.5 261.1 843.9 255.6 843.9 250.0C843.9 244.4 843.6 238.5 843.1 232.9C842.6 227.3 841.6 221.8 840.6 216.3C839.6 210.8 838.8 205.3 837.3 199.8C835.8 194.3 833.7 188.7 831.5 183.2C829.3 177.7 826.5 172.1 824.0 166.6C821.5 161.1 819.3 155.2 816.2 150.0C813.1 144.8 809.8 140.8 805.5 135.5C801.2 130.2 795.4 123.4 790.4 118.1C785.4 112.8 780.3 108.1 775.3 103.8C770.3 99.5 765.0 95.6 760.2 92.4C755.4 89.2 748.9 86.1 746.6 84.8Z"/></clipPath><g clip-path="url(#cDark)"><path d="M741.0 68.3C744.2 69.2 754.5 71.2 760.2 73.6C765.9 76.0 770.3 79.2 775.3 82.6C780.3 86.0 785.4 90.0 790.4 94.0C795.4 98.0 800.5 102.1 805.5 106.8C810.5 111.5 815.5 116.1 820.5 121.9C825.5 127.7 831.0 134.9 835.6 141.5C840.2 148.1 844.3 154.6 848.0 161.5C851.7 168.4 855.2 175.6 858.0 183.2C860.8 190.8 863.1 198.7 864.8 207.0C866.5 215.3 867.7 224.9 868.4 232.9C869.1 240.9 869.5 246.6 869.2 255.0C868.9 263.4 868.0 274.4 866.6 283.2C865.2 292.0 863.2 299.7 860.7 308.0C858.2 316.3 854.8 325.8 851.7 332.9C848.6 340.0 844.9 345.6 842.0 350.5C839.1 355.4 838.4 357.3 834.6 362.6C830.9 367.9 824.5 376.4 819.5 382.2C814.5 388.0 810.0 392.5 804.5 397.3C799.0 402.1 792.4 406.8 786.4 410.9C780.4 415.0 774.7 418.8 768.3 422.2C761.9 425.6 751.3 429.9 747.9 431.4L736.0 431.6L745.6 415.9C748.9 413.5 759.2 406.4 765.2 401.8C771.2 397.2 776.5 393.2 781.8 388.3C787.1 383.4 792.1 377.7 796.9 372.4C801.7 367.1 806.2 361.8 810.5 356.6C814.8 351.5 819.8 345.4 822.5 341.5C825.2 337.6 824.7 337.1 826.5 332.9C828.3 328.7 831.2 321.8 833.1 316.3C835.0 310.8 836.8 305.3 838.1 299.8C839.4 294.3 840.1 288.7 840.9 283.2C841.7 277.7 842.5 272.1 843.0 266.6C843.5 261.1 843.9 255.6 843.9 250.0C843.9 244.4 843.6 238.5 843.1 232.9C842.6 227.3 841.6 221.8 840.6 216.3C839.6 210.8 838.8 205.3 837.3 199.8C835.8 194.3 833.7 188.7 831.5 183.2C829.3 177.7 826.5 172.1 824.0 166.6C821.5 161.1 819.3 155.2 816.2 150.0C813.1 144.8 809.8 140.8 805.5 135.5C801.2 130.2 795.4 123.4 790.4 118.1C785.4 112.8 780.3 108.1 775.3 103.8C770.3 99.5 765.0 95.6 760.2 92.4C755.4 89.2 748.9 86.1 746.6 84.8Z" fill="url(#pDark)" opacity="0.38"/><path d="M741.0 68.3C744.2 69.2 754.5 71.2 760.2 73.6C765.9 76.0 770.3 79.2 775.3 82.6C780.3 86.0 785.4 90.0 790.4 94.0C795.4 98.0 800.5 102.1 805.5 106.8C810.5 111.5 815.5 116.1 820.5 121.9C825.5 127.7 831.0 134.9 835.6 141.5C840.2 148.1 844.3 154.6 848.0 161.5C851.7 168.4 855.2 175.6 858.0 183.2C860.8 190.8 863.1 198.7 864.8 207.0C866.5 215.3 867.7 224.9 868.4 232.9C869.1 240.9 869.5 246.6 869.2 255.0C868.9 263.4 868.0 274.4 866.6 283.2C865.2 292.0 863.2 299.7 860.7 308.0C858.2 316.3 854.8 325.8 851.7 332.9C848.6 340.0 844.9 345.6 842.0 350.5C839.1 355.4 838.4 357.3 834.6 362.6C830.9 367.9 824.5 376.4 819.5 382.2C814.5 388.0 810.0 392.5 804.5 397.3C799.0 402.1 792.4 406.8 786.4 410.9C780.4 415.0 774.7 418.8 768.3 422.2C761.9 425.6 751.3 429.9 747.9 431.4" fill="none" stroke="#000" stroke-width="9" opacity="0.6"/><path d="M741.0 68.3C744.2 69.2 754.5 71.2 760.2 73.6C765.9 76.0 770.3 79.2 775.3 82.6C780.3 86.0 785.4 90.0 790.4 94.0C795.4 98.0 800.5 102.1 805.5 106.8C810.5 111.5 815.5 116.1 820.5 121.9C825.5 127.7 831.0 134.9 835.6 141.5C840.2 148.1 844.3 154.6 848.0 161.5C851.7 168.4 855.2 175.6 858.0 183.2C860.8 190.8 863.1 198.7 864.8 207.0C866.5 215.3 867.7 224.9 868.4 232.9C869.1 240.9 869.5 246.6 869.2 255.0C868.9 263.4 868.0 274.4 866.6 283.2C865.2 292.0 863.2 299.7 860.7 308.0C858.2 316.3 854.8 325.8 851.7 332.9C848.6 340.0 844.9 345.6 842.0 350.5C839.1 355.4 838.4 357.3 834.6 362.6C830.9 367.9 824.5 376.4 819.5 382.2C814.5 388.0 810.0 392.5 804.5 397.3C799.0 402.1 792.4 406.8 786.4 410.9C780.4 415.0 774.7 418.8 768.3 422.2C761.9 425.6 751.3 429.9 747.9 431.4" fill="none" stroke="#000" stroke-width="4" opacity="0.7"/></g><path d="M533.0 67.2L741.3 69.5C743.2 70.9 748.2 75.0 752.6 78.1C757.0 81.2 762.7 84.2 767.7 87.9C772.7 91.6 777.8 95.6 782.8 100.0C787.8 104.4 792.9 109.1 797.9 114.3C802.9 119.5 808.7 125.6 813.0 130.9C817.3 136.2 820.4 140.1 823.6 146.0C826.8 151.9 829.6 160.4 832.3 166.6C835.0 172.8 837.6 177.7 839.8 183.2C842.0 188.7 844.1 194.3 845.6 199.8C847.1 205.3 848.0 210.8 848.9 216.3C849.8 221.8 850.5 227.3 851.0 232.9C851.5 238.5 852.1 244.4 852.2 250.0C852.3 255.6 852.0 261.1 851.4 266.6C850.8 272.1 849.9 277.7 848.9 283.2C847.9 288.7 847.0 294.3 845.6 299.8C844.2 305.3 842.6 310.8 840.6 316.3C838.6 321.8 836.4 327.4 833.9 332.9C831.4 338.4 827.8 345.3 825.4 349.5C823.0 353.7 822.7 353.9 819.5 358.1C816.3 362.3 810.8 369.2 806.0 374.7C801.2 380.2 796.2 386.3 790.9 391.3C785.6 396.3 780.1 400.5 774.3 404.8C768.5 409.1 762.5 412.5 756.2 416.9C749.9 421.3 739.9 428.8 736.6 431.2L527.0 431.4L526.5 416.0L541.0 416.2L745.6 415.9C748.9 413.5 759.2 406.4 765.2 401.8C771.2 397.2 776.5 393.2 781.8 388.3C787.1 383.4 792.1 377.7 796.9 372.4C801.7 367.1 806.2 361.8 810.5 356.6C814.8 351.5 819.8 345.4 822.5 341.5C825.2 337.6 824.7 337.1 826.5 332.9C828.3 328.7 831.2 321.8 833.1 316.3C835.0 310.8 836.8 305.3 838.1 299.8C839.4 294.3 840.1 288.7 840.9 283.2C841.7 277.7 842.5 272.1 843.0 266.6C843.5 261.1 843.9 255.6 843.9 250.0C843.9 244.4 843.6 238.5 843.1 232.9C842.6 227.3 841.6 221.8 840.6 216.3C839.6 210.8 838.8 205.3 837.3 199.8C835.8 194.3 833.7 188.7 831.5 183.2C829.3 177.7 826.5 172.1 824.0 166.6C821.5 161.1 819.3 155.2 816.2 150.0C813.1 144.8 809.8 140.8 805.5 135.5C801.2 130.2 795.4 123.4 790.4 118.1C785.4 112.8 780.3 108.1 775.3 103.8C770.3 99.5 765.0 95.6 760.2 92.4C755.4 89.2 748.9 86.1 746.6 84.8L539.0 83.1L529.5 83.1L529.5 70.5Z" fill="#d9c878"/><clipPath id="cTan"><path d="M533.0 67.2L741.3 69.5C743.2 70.9 748.2 75.0 752.6 78.1C757.0 81.2 762.7 84.2 767.7 87.9C772.7 91.6 777.8 95.6 782.8 100.0C787.8 104.4 792.9 109.1 797.9 114.3C802.9 119.5 808.7 125.6 813.0 130.9C817.3 136.2 820.4 140.1 823.6 146.0C826.8 151.9 829.6 160.4 832.3 166.6C835.0 172.8 837.6 177.7 839.8 183.2C842.0 188.7 844.1 194.3 845.6 199.8C847.1 205.3 848.0 210.8 848.9 216.3C849.8 221.8 850.5 227.3 851.0 232.9C851.5 238.5 852.1 244.4 852.2 250.0C852.3 255.6 852.0 261.1 851.4 266.6C850.8 272.1 849.9 277.7 848.9 283.2C847.9 288.7 847.0 294.3 845.6 299.8C844.2 305.3 842.6 310.8 840.6 316.3C838.6 321.8 836.4 327.4 833.9 332.9C831.4 338.4 827.8 345.3 825.4 349.5C823.0 353.7 822.7 353.9 819.5 358.1C816.3 362.3 810.8 369.2 806.0 374.7C801.2 380.2 796.2 386.3 790.9 391.3C785.6 396.3 780.1 400.5 774.3 404.8C768.5 409.1 762.5 412.5 756.2 416.9C749.9 421.3 739.9 428.8 736.6 431.2L527.0 431.4L526.5 416.0L541.0 416.2L745.6 415.9C748.9 413.5 759.2 406.4 765.2 401.8C771.2 397.2 776.5 393.2 781.8 388.3C787.1 383.4 792.1 377.7 796.9 372.4C801.7 367.1 806.2 361.8 810.5 356.6C814.8 351.5 819.8 345.4 822.5 341.5C825.2 337.6 824.7 337.1 826.5 332.9C828.3 328.7 831.2 321.8 833.1 316.3C835.0 310.8 836.8 305.3 838.1 299.8C839.4 294.3 840.1 288.7 840.9 283.2C841.7 277.7 842.5 272.1 843.0 266.6C843.5 261.1 843.9 255.6 843.9 250.0C843.9 244.4 843.6 238.5 843.1 232.9C842.6 227.3 841.6 221.8 840.6 216.3C839.6 210.8 838.8 205.3 837.3 199.8C835.8 194.3 833.7 188.7 831.5 183.2C829.3 177.7 826.5 172.1 824.0 166.6C821.5 161.1 819.3 155.2 816.2 150.0C813.1 144.8 809.8 140.8 805.5 135.5C801.2 130.2 795.4 123.4 790.4 118.1C785.4 112.8 780.3 108.1 775.3 103.8C770.3 99.5 765.0 95.6 760.2 92.4C755.4 89.2 748.9 86.1 746.6 84.8L539.0 83.1L529.5 83.1L529.5 70.5Z"/></clipPath><g clip-path="url(#cTan)"><rect x="526" y="67" width="220" height="17" fill="url(#pBig)"/><rect x="526" y="415.8" width="222" height="15.6" fill="url(#pBig)" transform="translate(0,-0.2)"/><path d="M741.3 69.5L750.5 86.8L749.0 75.5L758.2 91.1L757.0 81.0L765.4 96.0L765.3 86.2L772.4 101.4L773.1 92.0L779.1 107.1L780.6 98.1L785.5 113.1L787.9 104.6L791.6 119.4L795.0 111.3L797.5 125.9L801.8 118.3L803.1 132.6L808.4 125.5L808.7 139.4L814.6 132.9L813.9 146.4L820.4 140.7L818.4 154.0L825.2 149.2L822.0 162.0L828.9 158.2L825.6 170.0L832.6 167.2L829.3 178.0L836.7 176.1L832.6 186.1L840.5 185.0L835.6 194.3L843.9 194.2L838.0 202.8L846.5 203.5L839.8 211.4L848.4 213.1L841.2 220.0L849.8 222.7L842.6 228.7L851.0 232.4L843.5 237.4L851.8 242.1L843.9 246.2L852.2 251.9L843.8 255.0L851.8 261.6L843.2 263.7L850.8 271.3L842.4 272.5L849.3 280.9L841.2 281.2L847.6 290.5L839.9 289.8L845.5 300.0L838.4 298.5L842.9 309.4L836.2 307.0L839.8 318.6L833.4 315.3L836.2 327.7L830.4 323.5L832.2 336.5L827.0 331.7L827.8 345.2L823.6 339.7L822.9 353.6L818.5 346.9L816.9 361.4L812.9 353.6L810.8 368.9L807.3 360.4L804.5 376.4L801.6 367.1L798.2 383.7L795.8 373.6L791.4 390.8L789.9 380.1L784.1 397.2L783.8 386.4L776.4 403.2L777.3 392.3L768.5 408.8L770.4 397.8L760.3 414.1L763.4 403.1L752.3 419.7L756.3 408.3L744.4 425.4L749.2 413.4L736.6 431.2" fill="none" stroke="#1a1608" stroke-width="0.7" shape-rendering="crispEdges"/></g><path d="M533.0 67.2L741.3 69.5C743.2 70.9 748.2 75.0 752.6 78.1C757.0 81.2 762.7 84.2 767.7 87.9C772.7 91.6 777.8 95.6 782.8 100.0C787.8 104.4 792.9 109.1 797.9 114.3C802.9 119.5 808.7 125.6 813.0 130.9C817.3 136.2 820.4 140.1 823.6 146.0C826.8 151.9 829.6 160.4 832.3 166.6C835.0 172.8 837.6 177.7 839.8 183.2C842.0 188.7 844.1 194.3 845.6 199.8C847.1 205.3 848.0 210.8 848.9 216.3C849.8 221.8 850.5 227.3 851.0 232.9C851.5 238.5 852.1 244.4 852.2 250.0C852.3 255.6 852.0 261.1 851.4 266.6C850.8 272.1 849.9 277.7 848.9 283.2C847.9 288.7 847.0 294.3 845.6 299.8C844.2 305.3 842.6 310.8 840.6 316.3C838.6 321.8 836.4 327.4 833.9 332.9C831.4 338.4 827.8 345.3 825.4 349.5C823.0 353.7 822.7 353.9 819.5 358.1C816.3 362.3 810.8 369.2 806.0 374.7C801.2 380.2 796.2 386.3 790.9 391.3C785.6 396.3 780.1 400.5 774.3 404.8C768.5 409.1 762.5 412.5 756.2 416.9C749.9 421.3 739.9 428.8 736.6 431.2L527.0 431.4L526.5 416.0L541.0 416.2L745.6 415.9C748.9 413.5 759.2 406.4 765.2 401.8C771.2 397.2 776.5 393.2 781.8 388.3C787.1 383.4 792.1 377.7 796.9 372.4C801.7 367.1 806.2 361.8 810.5 356.6C814.8 351.5 819.8 345.4 822.5 341.5C825.2 337.6 824.7 337.1 826.5 332.9C828.3 328.7 831.2 321.8 833.1 316.3C835.0 310.8 836.8 305.3 838.1 299.8C839.4 294.3 840.1 288.7 840.9 283.2C841.7 277.7 842.5 272.1 843.0 266.6C843.5 261.1 843.9 255.6 843.9 250.0C843.9 244.4 843.6 238.5 843.1 232.9C842.6 227.3 841.6 221.8 840.6 216.3C839.6 210.8 838.8 205.3 837.3 199.8C835.8 194.3 833.7 188.7 831.5 183.2C829.3 177.7 826.5 172.1 824.0 166.6C821.5 161.1 819.3 155.2 816.2 150.0C813.1 144.8 809.8 140.8 805.5 135.5C801.2 130.2 795.4 123.4 790.4 118.1C785.4 112.8 780.3 108.1 775.3 103.8C770.3 99.5 765.0 95.6 760.2 92.4C755.4 89.2 748.9 86.1 746.6 84.8L539.0 83.1L529.5 83.1L529.5 70.5Z" fill="none" stroke="#17140a" stroke-width="0.8"/><path d="M539.3 83.1L746.6 84.8C748.9 86.1 755.4 89.2 760.2 92.4C765.0 95.6 770.3 99.5 775.3 103.8C780.3 108.1 785.4 112.8 790.4 118.1C795.4 123.4 801.2 130.2 805.5 135.5C809.8 140.8 813.1 144.8 816.2 150.0C819.3 155.2 821.5 161.1 824.0 166.6C826.5 172.1 829.3 177.7 831.5 183.2C833.7 188.7 835.8 194.3 837.3 199.8C838.8 205.3 839.6 210.8 840.6 216.3C841.6 221.8 842.6 227.3 843.1 232.9C843.6 238.5 843.9 244.4 843.9 250.0C843.9 255.6 843.5 261.1 843.0 266.6C842.5 272.1 841.7 277.7 840.9 283.2C840.1 288.7 839.4 294.3 838.1 299.8C836.8 305.3 835.0 310.8 833.1 316.3C831.2 321.8 828.3 328.7 826.5 332.9C824.7 337.1 825.2 337.6 822.5 341.5C819.8 345.4 814.8 351.5 810.5 356.6C806.2 361.8 801.7 367.1 796.9 372.4C792.1 377.7 787.1 383.4 781.8 388.3C776.5 393.2 771.2 397.2 765.2 401.8C759.2 406.4 748.9 413.5 745.6 415.9L537.6 416.2L537.6 410.6L744.1 408.6C746.9 406.7 755.4 401.2 760.7 397.3C766.0 393.4 770.8 389.7 775.8 385.2C780.8 380.7 786.1 375.2 790.9 370.2C795.7 365.2 800.2 360.1 804.5 355.1C808.8 350.1 813.8 343.7 816.5 340.0C819.2 336.3 818.9 336.8 820.7 332.9C822.5 328.9 825.4 321.8 827.3 316.3C829.2 310.8 830.9 305.3 832.3 299.8C833.7 294.3 834.6 288.7 835.6 283.2C836.6 277.7 837.6 272.1 838.1 266.6C838.6 261.1 838.9 255.6 838.9 250.0C838.9 244.4 838.6 238.5 838.1 232.9C837.6 227.3 836.7 221.8 835.6 216.3C834.5 210.8 833.1 205.3 831.5 199.8C829.9 194.3 828.1 188.7 825.7 183.2C823.4 177.7 820.0 172.1 817.4 166.6C814.8 161.1 812.4 154.4 809.9 150.0C807.4 145.6 805.6 144.2 802.4 140.0C799.1 135.8 794.9 129.9 790.4 124.9C785.9 119.9 780.3 114.3 775.3 109.8C770.3 105.3 765.0 101.1 760.2 97.7C755.4 94.3 748.9 90.8 746.6 89.4L539.3 88.3Z" fill="#a9cfe4"/><clipPath id="cBlue"><path d="M539.3 83.1L746.6 84.8C748.9 86.1 755.4 89.2 760.2 92.4C765.0 95.6 770.3 99.5 775.3 103.8C780.3 108.1 785.4 112.8 790.4 118.1C795.4 123.4 801.2 130.2 805.5 135.5C809.8 140.8 813.1 144.8 816.2 150.0C819.3 155.2 821.5 161.1 824.0 166.6C826.5 172.1 829.3 177.7 831.5 183.2C833.7 188.7 835.8 194.3 837.3 199.8C838.8 205.3 839.6 210.8 840.6 216.3C841.6 221.8 842.6 227.3 843.1 232.9C843.6 238.5 843.9 244.4 843.9 250.0C843.9 255.6 843.5 261.1 843.0 266.6C842.5 272.1 841.7 277.7 840.9 283.2C840.1 288.7 839.4 294.3 838.1 299.8C836.8 305.3 835.0 310.8 833.1 316.3C831.2 321.8 828.3 328.7 826.5 332.9C824.7 337.1 825.2 337.6 822.5 341.5C819.8 345.4 814.8 351.5 810.5 356.6C806.2 361.8 801.7 367.1 796.9 372.4C792.1 377.7 787.1 383.4 781.8 388.3C776.5 393.2 771.2 397.2 765.2 401.8C759.2 406.4 748.9 413.5 745.6 415.9L537.6 416.2L537.6 410.6L744.1 408.6C746.9 406.7 755.4 401.2 760.7 397.3C766.0 393.4 770.8 389.7 775.8 385.2C780.8 380.7 786.1 375.2 790.9 370.2C795.7 365.2 800.2 360.1 804.5 355.1C808.8 350.1 813.8 343.7 816.5 340.0C819.2 336.3 818.9 336.8 820.7 332.9C822.5 328.9 825.4 321.8 827.3 316.3C829.2 310.8 830.9 305.3 832.3 299.8C833.7 294.3 834.6 288.7 835.6 283.2C836.6 277.7 837.6 272.1 838.1 266.6C838.6 261.1 838.9 255.6 838.9 250.0C838.9 244.4 838.6 238.5 838.1 232.9C837.6 227.3 836.7 221.8 835.6 216.3C834.5 210.8 833.1 205.3 831.5 199.8C829.9 194.3 828.1 188.7 825.7 183.2C823.4 177.7 820.0 172.1 817.4 166.6C814.8 161.1 812.4 154.4 809.9 150.0C807.4 145.6 805.6 144.2 802.4 140.0C799.1 135.8 794.9 129.9 790.4 124.9C785.9 119.9 780.3 114.3 775.3 109.8C770.3 105.3 765.0 101.1 760.2 97.7C755.4 94.3 748.9 90.8 746.6 89.4L539.3 88.3Z"/></clipPath><g clip-path="url(#cBlue)"><rect x="539" y="83" width="207.6" height="8" fill="url(#pBlue)" opacity="0.8"/><rect x="541" y="409" width="203" height="8" fill="url(#pBlue)" opacity="0.8" transform="translate(0,1.2)"/></g><path d="M746.6 84.8L749.8 91.3L753.5 88.4L756.2 95.1L760.2 92.4L762.4 99.3L766.5 96.8L768.3 103.8L772.6 101.6L774.0 108.6L778.5 106.6L779.5 113.7L784.2 111.9L784.8 118.9L789.7 117.4L789.9 124.4L795.0 123.1L794.7 130.1L800.1 129.0L799.3 136.0L805.0 134.9L803.9 141.8L809.9 141.0L808.5 147.7L814.5 147.3L812.0 154.3L818.4 154.0L815.0 161.1L821.6 161.1L818.0 167.9L824.7 168.2L821.5 174.5L828.0 175.2L824.8 181.2L831.1 182.3L827.6 188.1L833.9 189.5L830.1 195.2L836.5 196.9L832.2 202.3L838.4 204.4L834.1 209.5L839.9 212.0L835.7 216.8L841.2 219.7L837.0 224.1L842.4 227.3L838.0 231.5L843.3 235.1L838.6 239.0L843.8 242.8L838.9 246.4L843.9 250.6L838.9 253.9L843.6 258.3L838.5 261.3L843.0 266.1L837.9 268.8L842.2 273.8L836.8 276.1L841.2 281.5L835.5 283.5L840.0 289.2L834.2 290.8L838.7 296.8L832.7 298.1L836.9 304.4L830.8 305.4L834.6 311.8L828.6 312.5L832.1 319.1L826.1 319.5L829.2 326.4L823.4 326.5L826.2 333.5L820.5 333.3L823.1 340.6L816.7 339.7L818.5 346.9L812.2 345.7L813.6 352.9L807.5 351.5L808.6 358.8L802.7 357.2L803.6 364.8L797.8 362.8L798.5 370.6L792.7 368.3L793.3 376.4L787.6 373.7L788.0 382.1L782.4 379.0L782.6 387.6L777.0 384.1L776.7 392.7L771.4 389.0L770.7 397.6L765.5 393.7L764.5 402.3L759.5 398.1L758.3 406.9L753.4 402.4L751.9 411.4L747.2 406.5L745.6 415.9M746.6 89.4L750.0 86.6L753.1 93.1L756.8 90.3L759.4 97.1L763.4 94.6L765.4 101.5L769.6 99.2L771.2 106.2L775.6 104.1L776.8 111.1L781.4 109.2L782.2 116.3L787.0 114.6L787.4 121.6L792.4 120.2L792.4 127.2L797.6 126.0L797.0 133.0L802.6 131.9L801.6 138.9L807.5 138.0L806.3 144.7L812.3 144.1L810.4 150.9L816.5 150.6L813.5 157.7L820.0 157.5L816.4 164.5L823.1 164.6L819.7 171.2L826.4 171.7L823.2 177.8L829.6 178.7L826.3 184.6L832.6 185.9L828.9 191.6L835.3 193.2L831.2 198.7L837.5 200.6L833.2 205.9L839.2 208.2L834.9 213.1L840.5 215.9L836.4 220.5L841.8 223.5L837.5 227.8L842.9 231.2L838.3 235.2L843.6 238.9L838.8 242.7L843.9 246.7L838.9 250.2L843.8 254.5L838.7 257.6L843.4 262.2L838.2 265.1L842.7 269.9L837.4 272.5L841.7 277.6L836.2 279.8L840.6 285.3L834.9 287.2L839.4 293.0L833.5 294.5L837.9 300.6L831.8 301.8L835.8 308.1L829.7 308.9L833.4 315.5L827.4 316.0L830.7 322.7L824.8 323.0L827.7 329.9L822.0 329.9L824.9 337.2L818.9 336.7L820.9 343.8L814.5 342.7L816.1 349.9L809.9 348.6L811.1 355.9L805.1 354.3L806.1 361.8L800.3 360.0L801.1 367.7L795.3 365.5L795.9 373.5L790.2 371.0L790.7 379.3L785.0 376.3L785.3 384.9L779.7 381.6L779.7 390.2L774.2 386.6L773.7 395.2L768.5 391.4L767.6 400.0L762.5 395.9L761.4 404.6L756.5 400.3L755.1 409.2L750.3 404.5L748.8 413.7L744.1 408.6" fill="none" stroke="#10181e" stroke-width="0.6" opacity="0.85" shape-rendering="crispEdges"/><path d="M539.3 83.1L746.6 84.8C748.9 86.1 755.4 89.2 760.2 92.4C765.0 95.6 770.3 99.5 775.3 103.8C780.3 108.1 785.4 112.8 790.4 118.1C795.4 123.4 801.2 130.2 805.5 135.5C809.8 140.8 813.1 144.8 816.2 150.0C819.3 155.2 821.5 161.1 824.0 166.6C826.5 172.1 829.3 177.7 831.5 183.2C833.7 188.7 835.8 194.3 837.3 199.8C838.8 205.3 839.6 210.8 840.6 216.3C841.6 221.8 842.6 227.3 843.1 232.9C843.6 238.5 843.9 244.4 843.9 250.0C843.9 255.6 843.5 261.1 843.0 266.6C842.5 272.1 841.7 277.7 840.9 283.2C840.1 288.7 839.4 294.3 838.1 299.8C836.8 305.3 835.0 310.8 833.1 316.3C831.2 321.8 828.3 328.7 826.5 332.9C824.7 337.1 825.2 337.6 822.5 341.5C819.8 345.4 814.8 351.5 810.5 356.6C806.2 361.8 801.7 367.1 796.9 372.4C792.1 377.7 787.1 383.4 781.8 388.3C776.5 393.2 771.2 397.2 765.2 401.8C759.2 406.4 748.9 413.5 745.6 415.9L537.6 416.2L537.6 410.6L744.1 408.6C746.9 406.7 755.4 401.2 760.7 397.3C766.0 393.4 770.8 389.7 775.8 385.2C780.8 380.7 786.1 375.2 790.9 370.2C795.7 365.2 800.2 360.1 804.5 355.1C808.8 350.1 813.8 343.7 816.5 340.0C819.2 336.3 818.9 336.8 820.7 332.9C822.5 328.9 825.4 321.8 827.3 316.3C829.2 310.8 830.9 305.3 832.3 299.8C833.7 294.3 834.6 288.7 835.6 283.2C836.6 277.7 837.6 272.1 838.1 266.6C838.6 261.1 838.9 255.6 838.9 250.0C838.9 244.4 838.6 238.5 838.1 232.9C837.6 227.3 836.7 221.8 835.6 216.3C834.5 210.8 833.1 205.3 831.5 199.8C829.9 194.3 828.1 188.7 825.7 183.2C823.4 177.7 820.0 172.1 817.4 166.6C814.8 161.1 812.4 154.4 809.9 150.0C807.4 145.6 805.6 144.2 802.4 140.0C799.1 135.8 794.9 129.9 790.4 124.9C785.9 119.9 780.3 114.3 775.3 109.8C770.3 105.3 765.0 101.1 760.2 97.7C755.4 94.3 748.9 90.8 746.6 89.4L539.3 88.3Z" fill="none" stroke="#141a1e" stroke-width="0.7"/><path d="M651.2 89.5C653.7 90.8 661.3 94.1 666.3 97.1C671.3 100.1 676.4 103.6 681.4 107.6C686.4 111.6 691.5 116.2 696.5 121.2C701.5 126.2 706.7 132.0 711.5 137.8C716.3 143.6 721.1 149.6 725.1 155.9C729.1 162.2 732.4 168.5 735.7 175.5C739.0 182.5 742.7 191.3 745.0 198.1C747.3 204.9 748.5 210.2 749.6 216.2C750.8 222.2 751.4 228.3 751.9 234.3C752.4 240.3 752.6 246.4 752.6 252.4C752.6 258.4 752.4 264.5 751.9 270.5C751.4 276.5 750.6 283.9 749.6 288.6C748.6 293.4 747.9 294.0 745.7 299.0C743.6 304.0 740.6 311.0 736.7 318.5C732.8 326.0 727.6 335.8 722.2 343.9C716.8 352.0 710.1 360.8 704.1 367.4C698.1 374.0 689.0 381.0 686.0 383.7L685.6 409.0L670.0 409.0L670.0 384.0C668.1 377.3 676.8 370.1 682.4 363.8C688.0 357.5 693.6 349.9 698.7 342.0C703.8 334.1 709.3 324.2 713.1 316.7C716.9 309.2 719.3 301.7 721.3 297.0C723.2 292.3 723.7 293.0 724.8 288.6C725.9 284.2 727.1 276.5 727.8 270.5C728.5 264.5 728.8 258.4 728.8 252.4C728.8 246.4 728.4 240.3 727.8 234.3C727.2 228.3 726.5 222.2 725.1 216.2C723.8 210.2 721.8 204.1 719.7 198.1C717.6 192.1 714.6 184.3 712.5 180.0C710.4 175.7 709.7 176.5 707.0 172.5C704.3 168.5 700.5 161.7 696.5 155.9C692.5 150.1 687.7 143.6 682.9 137.8C678.1 132.0 672.8 126.5 667.8 121.2C662.8 115.9 657.0 109.8 652.7 106.1C648.4 102.4 644.0 100.4 642.2 99.3L644.0 89.6Z" fill="#080804"/><clipPath id="cIDark"><path d="M651.2 89.5C653.7 90.8 661.3 94.1 666.3 97.1C671.3 100.1 676.4 103.6 681.4 107.6C686.4 111.6 691.5 116.2 696.5 121.2C701.5 126.2 706.7 132.0 711.5 137.8C716.3 143.6 721.1 149.6 725.1 155.9C729.1 162.2 732.4 168.5 735.7 175.5C739.0 182.5 742.7 191.3 745.0 198.1C747.3 204.9 748.5 210.2 749.6 216.2C750.8 222.2 751.4 228.3 751.9 234.3C752.4 240.3 752.6 246.4 752.6 252.4C752.6 258.4 752.4 264.5 751.9 270.5C751.4 276.5 750.6 283.9 749.6 288.6C748.6 293.4 747.9 294.0 745.7 299.0C743.6 304.0 740.6 311.0 736.7 318.5C732.8 326.0 727.6 335.8 722.2 343.9C716.8 352.0 710.1 360.8 704.1 367.4C698.1 374.0 689.0 381.0 686.0 383.7L685.6 409.0L670.0 409.0L670.0 384.0C668.1 377.3 676.8 370.1 682.4 363.8C688.0 357.5 693.6 349.9 698.7 342.0C703.8 334.1 709.3 324.2 713.1 316.7C716.9 309.2 719.3 301.7 721.3 297.0C723.2 292.3 723.7 293.0 724.8 288.6C725.9 284.2 727.1 276.5 727.8 270.5C728.5 264.5 728.8 258.4 728.8 252.4C728.8 246.4 728.4 240.3 727.8 234.3C727.2 228.3 726.5 222.2 725.1 216.2C723.8 210.2 721.8 204.1 719.7 198.1C717.6 192.1 714.6 184.3 712.5 180.0C710.4 175.7 709.7 176.5 707.0 172.5C704.3 168.5 700.5 161.7 696.5 155.9C692.5 150.1 687.7 143.6 682.9 137.8C678.1 132.0 672.8 126.5 667.8 121.2C662.8 115.9 657.0 109.8 652.7 106.1C648.4 102.4 644.0 100.4 642.2 99.3L644.0 89.6Z"/></clipPath><g clip-path="url(#cIDark)"><path d="M651.2 89.5C653.7 90.8 661.3 94.1 666.3 97.1C671.3 100.1 676.4 103.6 681.4 107.6C686.4 111.6 691.5 116.2 696.5 121.2C701.5 126.2 706.7 132.0 711.5 137.8C716.3 143.6 721.1 149.6 725.1 155.9C729.1 162.2 732.4 168.5 735.7 175.5C739.0 182.5 742.7 191.3 745.0 198.1C747.3 204.9 748.5 210.2 749.6 216.2C750.8 222.2 751.4 228.3 751.9 234.3C752.4 240.3 752.6 246.4 752.6 252.4C752.6 258.4 752.4 264.5 751.9 270.5C751.4 276.5 750.6 283.9 749.6 288.6C748.6 293.4 747.9 294.0 745.7 299.0C743.6 304.0 740.6 311.0 736.7 318.5C732.8 326.0 727.6 335.8 722.2 343.9C716.8 352.0 710.1 360.8 704.1 367.4C698.1 374.0 689.0 381.0 686.0 383.7L685.6 409.0L670.0 409.0L670.0 384.0C668.1 377.3 676.8 370.1 682.4 363.8C688.0 357.5 693.6 349.9 698.7 342.0C703.8 334.1 709.3 324.2 713.1 316.7C716.9 309.2 719.3 301.7 721.3 297.0C723.2 292.3 723.7 293.0 724.8 288.6C725.9 284.2 727.1 276.5 727.8 270.5C728.5 264.5 728.8 258.4 728.8 252.4C728.8 246.4 728.4 240.3 727.8 234.3C727.2 228.3 726.5 222.2 725.1 216.2C723.8 210.2 721.8 204.1 719.7 198.1C717.6 192.1 714.6 184.3 712.5 180.0C710.4 175.7 709.7 176.5 707.0 172.5C704.3 168.5 700.5 161.7 696.5 155.9C692.5 150.1 687.7 143.6 682.9 137.8C678.1 132.0 672.8 126.5 667.8 121.2C662.8 115.9 657.0 109.8 652.7 106.1C648.4 102.4 644.0 100.4 642.2 99.3L644.0 89.6Z" fill="url(#pDark)" opacity="0.35"/><path d="M651.2 89.5C653.7 90.8 661.3 94.1 666.3 97.1C671.3 100.1 676.4 103.6 681.4 107.6C686.4 111.6 691.5 116.2 696.5 121.2C701.5 126.2 706.7 132.0 711.5 137.8C716.3 143.6 721.1 149.6 725.1 155.9C729.1 162.2 732.4 168.5 735.7 175.5C739.0 182.5 742.7 191.3 745.0 198.1C747.3 204.9 748.5 210.2 749.6 216.2C750.8 222.2 751.4 228.3 751.9 234.3C752.4 240.3 752.6 246.4 752.6 252.4C752.6 258.4 752.4 264.5 751.9 270.5C751.4 276.5 750.6 283.9 749.6 288.6C748.6 293.4 747.9 294.0 745.7 299.0C743.6 304.0 740.6 311.0 736.7 318.5C732.8 326.0 727.6 335.8 722.2 343.9C716.8 352.0 710.1 360.8 704.1 367.4C698.1 374.0 689.0 381.0 686.0 383.7" fill="none" stroke="#000" stroke-width="7" opacity="0.65"/></g><path d="M544.4 90.2L649.7 90.6C651.5 91.9 656.0 95.0 660.3 98.6C664.6 102.2 670.3 107.2 675.3 112.2C680.3 117.2 685.4 122.7 690.4 128.7C695.4 134.7 701.0 142.1 705.5 148.4C710.0 154.7 714.2 161.2 717.6 166.5C721.0 171.8 723.5 174.7 726.0 180.0C728.5 185.3 730.6 192.1 732.4 198.1C734.2 204.1 735.8 210.2 736.9 216.2C738.0 222.2 738.6 228.3 739.1 234.3C739.6 240.3 739.6 246.4 739.6 252.4C739.6 258.4 739.7 264.5 739.1 270.5C738.5 276.5 736.9 283.8 736.0 288.6C735.1 293.4 735.5 294.4 733.8 299.4C732.1 304.4 729.5 311.1 725.8 318.5C722.0 325.9 716.7 335.8 711.3 343.9C705.9 352.0 699.1 360.6 693.2 367.4C687.3 374.2 678.9 381.7 676.0 384.6L675.5 409.0L537.0 409.0L537.0 400.4L664.3 400.4L665.2 380.0C668.1 377.3 676.8 370.1 682.4 363.8C688.0 357.5 693.6 349.9 698.7 342.0C703.8 334.1 709.3 324.2 713.1 316.7C716.9 309.2 719.3 301.7 721.3 297.0C723.2 292.3 723.7 293.0 724.8 288.6C725.9 284.2 727.1 276.5 727.8 270.5C728.5 264.5 728.8 258.4 728.8 252.4C728.8 246.4 728.4 240.3 727.8 234.3C727.2 228.3 726.5 222.2 725.1 216.2C723.8 210.2 721.8 204.1 719.7 198.1C717.6 192.1 714.6 184.3 712.5 180.0C710.4 175.7 709.7 176.5 707.0 172.5C704.3 168.5 700.5 161.7 696.5 155.9C692.5 150.1 687.7 143.6 682.9 137.8C678.1 132.0 672.8 126.5 667.8 121.2C662.8 115.9 657.0 109.8 652.7 106.1C648.4 102.4 644.0 100.4 642.2 99.3L544.4 99.2Z" fill="#ddd196"/><clipPath id="cITan"><path d="M544.4 90.2L649.7 90.6C651.5 91.9 656.0 95.0 660.3 98.6C664.6 102.2 670.3 107.2 675.3 112.2C680.3 117.2 685.4 122.7 690.4 128.7C695.4 134.7 701.0 142.1 705.5 148.4C710.0 154.7 714.2 161.2 717.6 166.5C721.0 171.8 723.5 174.7 726.0 180.0C728.5 185.3 730.6 192.1 732.4 198.1C734.2 204.1 735.8 210.2 736.9 216.2C738.0 222.2 738.6 228.3 739.1 234.3C739.6 240.3 739.6 246.4 739.6 252.4C739.6 258.4 739.7 264.5 739.1 270.5C738.5 276.5 736.9 283.8 736.0 288.6C735.1 293.4 735.5 294.4 733.8 299.4C732.1 304.4 729.5 311.1 725.8 318.5C722.0 325.9 716.7 335.8 711.3 343.9C705.9 352.0 699.1 360.6 693.2 367.4C687.3 374.2 678.9 381.7 676.0 384.6L675.5 409.0L537.0 409.0L537.0 400.4L664.3 400.4L665.2 380.0C668.1 377.3 676.8 370.1 682.4 363.8C688.0 357.5 693.6 349.9 698.7 342.0C703.8 334.1 709.3 324.2 713.1 316.7C716.9 309.2 719.3 301.7 721.3 297.0C723.2 292.3 723.7 293.0 724.8 288.6C725.9 284.2 727.1 276.5 727.8 270.5C728.5 264.5 728.8 258.4 728.8 252.4C728.8 246.4 728.4 240.3 727.8 234.3C727.2 228.3 726.5 222.2 725.1 216.2C723.8 210.2 721.8 204.1 719.7 198.1C717.6 192.1 714.6 184.3 712.5 180.0C710.4 175.7 709.7 176.5 707.0 172.5C704.3 168.5 700.5 161.7 696.5 155.9C692.5 150.1 687.7 143.6 682.9 137.8C678.1 132.0 672.8 126.5 667.8 121.2C662.8 115.9 657.0 109.8 652.7 106.1C648.4 102.4 644.0 100.4 642.2 99.3L544.4 99.2Z"/></clipPath><g clip-path="url(#cITan)"><mask id="mITan"><rect x="530" y="85" width="230" height="330" fill="#000"/><rect x="540" y="88" width="112" height="13" fill="#fff"/><rect x="535" y="399" width="150" height="12" fill="#fff"/><circle cx="660" cy="96" r="16" fill="url(#spot)"/><circle cx="676" cy="390" r="22" fill="url(#spot)"/><circle cx="690" cy="368" r="16" fill="url(#spot)"/><circle cx="737" cy="252" r="14" fill="url(#spot)"/><circle cx="724" cy="178" r="8" fill="url(#spot)"/><circle cx="704" cy="350" r="10" fill="url(#spot)"/></mask><rect x="530" y="85" width="230" height="330" fill="url(#pFine)" opacity="0.85" mask="url(#mITan)"/></g><path d="M649.7 90.6L647.0 100.9L655.1 94.5L652.3 104.2L660.3 98.6L657.2 108.3L665.3 102.9L661.7 112.8L670.2 107.3L666.1 117.3L675.0 111.9L670.5 121.9L679.6 116.6L674.8 126.5L684.1 121.5L679.1 131.2L688.5 126.4L683.3 135.9L692.7 131.5L687.4 140.8L696.8 136.7L691.2 145.9L700.8 142.0L695.0 151.0L704.7 147.3L698.7 156.1L708.5 152.7L702.1 161.4L712.2 158.2L705.5 166.8L715.8 163.8L708.8 172.2L719.5 169.3L712.8 177.1L723.2 174.8L715.8 182.7L726.3 180.6L718.2 188.6L728.8 186.8L720.4 194.5L730.9 193.1L722.5 200.5L732.8 199.4L724.5 206.5L734.6 205.8L726.2 212.6L736.1 212.2L727.6 218.8L737.3 218.7L728.7 225.1L738.3 225.3L729.5 231.4L738.9 231.9L730.1 237.7L739.4 238.5L730.6 244.0L739.6 245.1L730.8 250.3L739.6 251.7L730.7 256.7L739.6 258.3L730.5 263.0L739.5 264.9L729.9 269.3L739.0 271.5L729.1 275.6L738.0 278.1L728.2 281.9L736.8 284.6L726.9 288.1L735.6 291.1L724.7 294.0L734.4 297.6L722.2 299.8L732.2 303.8L719.9 305.8L729.8 310.0L717.5 311.6L727.0 316.0L714.8 317.4L724.0 321.9L711.8 323.0L720.9 327.8L708.8 328.5L717.7 333.5L705.6 334.0L714.3 339.2L702.3 339.5L710.7 344.8L698.9 344.8L706.9 350.2L695.3 350.0L702.9 355.5L691.5 355.1L698.8 360.7L687.6 360.1L694.6 365.8L683.4 364.9L690.2 370.7L679.0 369.4L685.6 375.4L674.3 373.7L680.8 380.0L669.6 377.9L676.0 384.6" fill="none" stroke="#15130a" stroke-width="0.6" opacity="0.9" shape-rendering="crispEdges"/><path d="M544.4 90.2L649.7 90.6C651.5 91.9 656.0 95.0 660.3 98.6C664.6 102.2 670.3 107.2 675.3 112.2C680.3 117.2 685.4 122.7 690.4 128.7C695.4 134.7 701.0 142.1 705.5 148.4C710.0 154.7 714.2 161.2 717.6 166.5C721.0 171.8 723.5 174.7 726.0 180.0C728.5 185.3 730.6 192.1 732.4 198.1C734.2 204.1 735.8 210.2 736.9 216.2C738.0 222.2 738.6 228.3 739.1 234.3C739.6 240.3 739.6 246.4 739.6 252.4C739.6 258.4 739.7 264.5 739.1 270.5C738.5 276.5 736.9 283.8 736.0 288.6C735.1 293.4 735.5 294.4 733.8 299.4C732.1 304.4 729.5 311.1 725.8 318.5C722.0 325.9 716.7 335.8 711.3 343.9C705.9 352.0 699.1 360.6 693.2 367.4C687.3 374.2 678.9 381.7 676.0 384.6L675.5 409.0L537.0 409.0L537.0 400.4L664.3 400.4L665.2 380.0C668.1 377.3 676.8 370.1 682.4 363.8C688.0 357.5 693.6 349.9 698.7 342.0C703.8 334.1 709.3 324.2 713.1 316.7C716.9 309.2 719.3 301.7 721.3 297.0C723.2 292.3 723.7 293.0 724.8 288.6C725.9 284.2 727.1 276.5 727.8 270.5C728.5 264.5 728.8 258.4 728.8 252.4C728.8 246.4 728.4 240.3 727.8 234.3C727.2 228.3 726.5 222.2 725.1 216.2C723.8 210.2 721.8 204.1 719.7 198.1C717.6 192.1 714.6 184.3 712.5 180.0C710.4 175.7 709.7 176.5 707.0 172.5C704.3 168.5 700.5 161.7 696.5 155.9C692.5 150.1 687.7 143.6 682.9 137.8C678.1 132.0 672.8 126.5 667.8 121.2C662.8 115.9 657.0 109.8 652.7 106.1C648.4 102.4 644.0 100.4 642.2 99.3L544.4 99.2Z" fill="none" stroke="#0d0c05" stroke-width="0.7"/><path d="M624.4 99.2L642.2 99.3C644.0 100.4 648.4 102.4 652.7 106.1C657.0 109.8 662.8 115.9 667.8 121.2C672.8 126.5 678.1 132.0 682.9 137.8C687.7 143.6 692.5 150.1 696.5 155.9C700.5 161.7 704.3 168.5 707.0 172.5C709.7 176.5 710.4 175.7 712.5 180.0C714.6 184.3 717.6 192.1 719.7 198.1C721.8 204.1 723.8 210.2 725.1 216.2C726.5 222.2 727.2 228.3 727.8 234.3C728.4 240.3 728.8 246.4 728.8 252.4C728.8 258.4 728.5 264.5 727.8 270.5C727.1 276.5 725.9 284.2 724.8 288.6C723.7 293.0 723.2 292.3 721.3 297.0C719.3 301.7 716.9 309.2 713.1 316.7C709.3 324.2 703.8 334.1 698.7 342.0C693.6 349.9 688.0 357.5 682.4 363.8C676.8 370.1 668.1 377.3 665.2 380.0L664.3 400.6L620.9 400.6L620.9 363.8C622.1 362.6 624.8 359.8 628.1 356.5C631.4 353.2 636.3 349.0 640.8 343.9C645.3 338.8 650.4 332.1 655.2 325.8C660.0 319.5 666.3 310.3 669.7 305.9C673.1 301.5 673.7 302.3 675.4 299.4C677.1 296.5 678.4 293.4 679.9 288.6C681.4 283.8 683.3 276.5 684.4 270.5C685.5 264.5 686.1 258.4 686.2 252.4C686.4 246.4 686.0 240.3 685.3 234.3C684.5 228.3 683.5 222.2 681.7 216.2C679.9 210.2 677.3 203.4 674.5 198.1C671.7 192.8 667.2 188.1 664.8 184.6C662.4 181.1 662.8 180.5 660.3 177.0C657.8 173.5 653.7 168.2 649.7 163.4C645.7 158.6 640.6 152.9 636.1 148.4C631.6 143.9 624.8 138.3 622.5 136.3L624.4 135.5Z" fill="#c8188e"/><clipPath id="cMag"><path d="M624.4 99.2L642.2 99.3C644.0 100.4 648.4 102.4 652.7 106.1C657.0 109.8 662.8 115.9 667.8 121.2C672.8 126.5 678.1 132.0 682.9 137.8C687.7 143.6 692.5 150.1 696.5 155.9C700.5 161.7 704.3 168.5 707.0 172.5C709.7 176.5 710.4 175.7 712.5 180.0C714.6 184.3 717.6 192.1 719.7 198.1C721.8 204.1 723.8 210.2 725.1 216.2C726.5 222.2 727.2 228.3 727.8 234.3C728.4 240.3 728.8 246.4 728.8 252.4C728.8 258.4 728.5 264.5 727.8 270.5C727.1 276.5 725.9 284.2 724.8 288.6C723.7 293.0 723.2 292.3 721.3 297.0C719.3 301.7 716.9 309.2 713.1 316.7C709.3 324.2 703.8 334.1 698.7 342.0C693.6 349.9 688.0 357.5 682.4 363.8C676.8 370.1 668.1 377.3 665.2 380.0L664.3 400.6L620.9 400.6L620.9 363.8C622.1 362.6 624.8 359.8 628.1 356.5C631.4 353.2 636.3 349.0 640.8 343.9C645.3 338.8 650.4 332.1 655.2 325.8C660.0 319.5 666.3 310.3 669.7 305.9C673.1 301.5 673.7 302.3 675.4 299.4C677.1 296.5 678.4 293.4 679.9 288.6C681.4 283.8 683.3 276.5 684.4 270.5C685.5 264.5 686.1 258.4 686.2 252.4C686.4 246.4 686.0 240.3 685.3 234.3C684.5 228.3 683.5 222.2 681.7 216.2C679.9 210.2 677.3 203.4 674.5 198.1C671.7 192.8 667.2 188.1 664.8 184.6C662.4 181.1 662.8 180.5 660.3 177.0C657.8 173.5 653.7 168.2 649.7 163.4C645.7 158.6 640.6 152.9 636.1 148.4C631.6 143.9 624.8 138.3 622.5 136.3L624.4 135.5Z"/></clipPath><g clip-path="url(#cMag)"><path d="M653.6 334.0L653.8 331.5L651.0 331.3L652.1 329.9L653.1 328.5L653.8 331.5L652.1 329.9M685.8 318.3L690.6 314.8L688.4 307.2L700.0 311.8L697.2 321.6L694.9 333.6L686.1 336.9L686.2 346.6L695.2 347.2L693.4 349.7L686.2 346.6L691.6 352.2L693.4 349.7M708.8 197.5L713.6 198.2L710.9 200.6L707.9 203.3L694.2 205.5L690.4 212.8L682.5 219.2L681.7 216.2L680.7 213.1L679.7 210.0L690.4 212.8L681.7 216.2M644.4 106.2L641.3 105.6L642.6 108.0L644.4 106.2L644.0 100.3L642.2 99.3L624.4 99.2L628.0 99.2L628.5 103.1L631.5 99.2L624.4 99.2L624.4 101.6L628.0 99.2L631.5 99.2L635.1 99.3L638.6 99.3L642.2 99.3L631.5 99.2L632.5 101.9L635.7 104.3L637.5 101.9L635.1 99.3L632.5 101.9L628.5 103.1L631.4 105.0L635.7 104.3L634.2 106.9L631.4 105.0L630.1 107.7L629.1 109.6L628.9 111.8L630.9 113.4L631.1 110.5L628.9 111.8L628.1 113.9L630.9 113.4L632.7 112.1L634.3 114.8L636.7 112.0L639.3 110.2L639.3 107.2L637.0 109.5L639.3 110.2L642.9 110.8L645.3 112.1L642.7 115.2L645.4 116.7L646.9 113.9L645.3 112.1L645.8 108.9L644.4 106.2L646.5 101.8L649.5 103.7L652.7 106.1L651.0 109.0L649.5 103.7L647.0 106.8L644.4 106.2L640.9 103.2L638.6 99.3L637.5 101.9L640.9 103.2L642.2 99.3M710.5 245.8L712.7 247.8L712.3 252.4L714.6 254.6L722.4 252.0L728.8 255.4L728.7 258.4L728.5 261.4L728.4 264.5L728.1 267.5L718.5 270.7L728.4 264.5L716.3 262.4L711.1 266.0L709.3 262.4L716.3 262.4L714.6 254.6L710.0 254.0L706.7 255.6L705.8 252.4L703.5 251.1L701.3 251.2L701.4 254.4L697.0 254.8L696.6 251.3L694.1 253.8L697.0 254.8L694.9 257.5L698.7 259.6L698.2 264.7L694.3 266.9L691.5 278.0L690.6 289.3L689.1 297.1L688.4 307.2L684.9 308.7L681.6 310.4L684.3 312.0L684.9 308.7L683.5 302.8L688.4 307.2L698.4 303.7L700.0 311.8L707.3 308.7L698.4 303.7L689.1 297.1L683.5 302.8L679.2 306.4L676.1 308.9L671.6 309.8L666.7 310.0L667.4 316.3L672.8 316.4L676.4 315.0L677.5 313.3L679.7 311.8L681.6 310.4L681.6 314.3L684.3 312.0L684.3 315.6L681.6 314.3L679.7 311.8L679.5 315.4L678.9 317.7L674.9 319.9L672.8 316.4L674.3 314.2L676.4 315.0L679.5 315.4L681.6 314.3L681.3 317.3L678.9 317.7L682.3 320.8L679.4 331.6L686.1 336.9L678.6 345.4L681.1 352.8L689.8 354.7L686.2 346.6L681.1 352.8L671.4 350.8L675.1 358.8L681.1 352.8L686.1 359.4L688.0 357.1L689.8 354.7L691.6 352.2M632.3 381.7L634.1 383.4L631.6 384.0L630.5 386.3L633.2 386.0L631.6 384.0L628.3 385.6L630.5 386.3L632.6 389.6L631.3 391.7L629.3 392.1L628.5 396.2L627.8 400.6L630.0 400.6L632.3 400.6L634.6 400.6L636.4 398.0L634.2 396.0L636.5 393.1L635.2 390.0L634.3 388.0L637.4 388.8L640.3 387.4L643.1 385.7L642.4 387.7L640.3 387.4L638.5 386.0L637.4 388.8L635.2 390.0L632.6 389.6L633.2 386.0L634.1 383.4L635.2 381.3L633.7 379.5L635.7 376.6L636.3 378.8L633.7 379.5L632.3 381.7L631.6 384.0L629.0 382.6L628.3 385.6L624.6 385.8L623.8 381.0L629.2 379.5L630.3 376.0L628.0 373.5L627.1 376.8L630.3 376.0L632.8 372.8L636.5 372.1L635.2 368.1L633.0 366.6L632.9 363.1L633.3 360.3L630.3 357.9L633.3 355.8L639.3 354.7L635.9 358.6L633.3 360.3L637.1 362.7L635.9 358.6L641.8 361.8L639.3 354.7L648.1 358.9L641.8 361.8L637.1 362.7L632.9 363.1L631.0 361.2L630.3 357.9L627.4 361.1L624.9 362.7L624.7 364.7L627.7 363.1L624.9 362.7L625.0 359.6L622.6 362.1L624.7 364.7L625.6 366.6L627.8 367.9L630.1 369.1L633.0 366.6L634.7 364.7L635.2 368.1L640.2 367.4L644.0 371.0L649.1 369.7L653.1 370.4L656.0 366.5L657.4 371.1L653.1 370.4L650.9 366.6L656.0 366.5L661.4 369.5L657.4 371.1L653.1 373.7L653.1 370.4M637.6 391.1L635.2 390.0L634.4 392.4L631.3 391.7L630.5 389.8L630.5 386.3L627.9 388.5L626.9 391.5L624.5 392.8L624.4 396.4L628.5 396.2L625.5 400.6L627.8 400.6L629.7 398.3L628.5 396.2L626.6 394.6L624.5 392.8L620.9 393.9L620.9 390.6L624.5 392.8L623.8 390.2L626.9 391.5L629.3 392.1L626.6 394.6L626.9 391.5L625.4 388.1L624.6 385.8L620.9 387.2L620.9 390.6L623.8 390.2L620.9 387.2L620.9 383.9L623.8 381.0L620.9 380.5L624.3 378.0L623.8 381.0L626.3 382.8L624.6 385.8L620.9 383.9L620.9 380.5L620.9 377.2L623.6 375.0L628.0 373.5L627.8 370.5L630.1 369.1L630.2 366.8L633.0 366.6L629.8 363.7L632.9 363.1L634.7 364.7L637.1 362.7L640.2 367.4L641.8 361.8L645.3 366.3L644.0 371.0L639.2 371.1L635.2 368.1L637.0 365.9L640.2 367.4L645.3 366.3L649.1 369.7L650.9 366.6L648.1 358.9L645.3 366.3L650.9 366.6L655.8 361.6L656.0 366.5L666.8 364.3L675.1 358.8L684.3 361.6L681.1 352.8L688.0 357.1M713.6 182.4L714.8 185.2L716.1 188.4L713.9 195.5L705.7 189.1L699.4 182.1L691.9 176.2L705.6 170.3L699.4 182.1L707.0 172.5L705.6 170.3L704.0 167.7L702.3 164.9L700.4 161.9L694.3 167.1L702.3 164.9M650.0 332.6L652.0 336.6L649.2 340.0L642.8 341.6L640.8 343.9L653.1 351.7L649.2 340.0L649.5 337.4L646.8 336.6L649.2 340.0L654.5 344.0L657.9 339.2L656.2 335.5L655.6 332.5L656.2 329.0L653.1 328.5L655.2 325.8L657.1 323.3L663.2 331.0L655.6 332.5L653.8 331.5L656.2 329.0L655.2 325.8M642.5 123.2L640.8 121.0L640.1 123.0L639.0 124.8L635.3 124.5L635.8 127.7L636.5 131.3L635.8 134.5L639.7 136.1L640.7 139.5L638.8 142.8L636.1 148.4L633.7 146.1L631.1 143.7L631.9 139.1L628.5 141.4L631.1 143.7L638.8 142.8L633.7 146.1M690.4 253.4L690.5 258.6L694.9 257.5L694.1 253.8L692.4 255.6L694.9 257.5L699.2 257.0L697.0 254.8L699.1 252.3L696.6 251.3L693.9 249.0L696.0 246.3L693.9 244.5L689.8 245.0L691.9 241.7L685.9 240.3L685.6 237.3L685.3 234.3L684.9 231.3L695.1 228.1L684.4 228.3L684.9 231.3L690.8 237.2L685.9 240.3L686.1 243.4L689.8 245.0L691.3 250.0L693.9 249.0L697.6 248.4L696.6 251.3L694.1 251.4L694.1 253.8L690.4 253.4L692.4 255.6L690.5 258.6L690.5 263.5L694.3 266.9L684.4 270.5L691.5 278.0L681.5 283.1L680.7 286.0L679.9 288.6L690.6 289.3L680.7 286.0M640.2 367.4L639.2 371.1L640.6 374.0L644.0 371.0L644.9 373.7L646.4 376.3L645.1 378.9L648.4 377.8L646.4 376.3L648.1 374.2L644.0 371.0M725.9 283.3L725.4 286.1L724.8 288.6L717.6 294.8L715.5 297.7L713.1 298.3L711.0 298.7L708.7 299.2L708.6 301.5L709.6 305.5L712.1 307.4L716.1 302.4L714.6 300.1L715.5 297.7L720.4 299.2L719.5 301.6L716.1 302.4L718.4 304.4L719.5 301.6L715.5 297.7L712.7 295.1L713.1 298.3L714.6 300.1L719.5 301.6M714.6 254.6L711.4 258.9L709.3 262.4L706.1 266.3L711.1 266.0L718.5 270.7L727.8 270.5L728.1 267.5M630.0 136.0L631.9 139.1L635.8 134.5L630.0 136.0L628.5 141.4L626.0 139.3L624.0 137.6L622.5 136.3L624.4 135.5L626.0 139.3L630.0 136.0L624.4 135.5L624.0 137.6M665.5 356.5L675.1 358.8L682.4 363.8L679.8 366.5L677.0 369.3L666.8 364.3L661.4 369.5L664.4 374.1L661.7 377.8L657.5 381.7L659.1 385.8L654.8 388.1L651.3 388.9L649.3 389.1L648.3 387.1L646.4 387.8L649.3 389.1L650.0 391.5L651.3 388.9L648.3 387.1L649.3 385.3L648.4 382.8L645.1 383.5L643.1 385.7L640.9 384.4L640.3 387.4L639.4 389.7L637.4 388.8L636.5 385.4L633.2 386.0L634.3 388.0L632.6 389.6L630.5 389.8L629.3 392.1L631.1 396.1L628.5 396.2M674.2 372.0L671.4 374.5L666.8 364.3L674.2 372.0L677.0 369.3L675.1 358.8L679.8 366.5M634.3 119.8L637.2 118.0L638.9 116.6L642.7 115.2L646.9 113.9L647.5 110.9L645.3 112.1M666.0 177.7L673.5 183.5L680.8 190.9L675.9 200.9L677.2 203.8L678.5 206.9L679.7 210.0L687.0 202.1L680.8 190.9L674.5 198.1L675.9 200.9L687.0 202.1L694.2 205.5L698.2 213.8L690.4 212.8L680.7 213.1M654.7 383.6L652.0 386.6L654.8 388.1L654.7 383.6L659.1 385.8L660.6 388.8L656.8 390.6L659.1 385.8L665.0 384.1L660.6 388.8L664.8 388.2L664.7 392.4L659.2 394.3L660.6 388.8L664.7 392.4L664.5 396.5L659.2 394.3L656.8 390.6L654.8 388.1L653.8 390.6L651.8 393.6L650.0 391.5L650.6 395.4L648.0 397.3L645.9 395.3L643.1 395.7L643.0 398.2L641.0 395.0L643.1 395.7L644.7 393.2L641.9 392.4L641.0 395.0L638.0 394.7L636.4 398.0L638.7 396.7L640.1 398.4L643.0 398.2L643.7 400.6L646.0 400.6L648.3 400.6L650.6 400.6L651.7 397.6L648.0 397.3L647.9 394.6L650.0 391.5L653.8 390.6L656.8 390.6L655.8 393.8L651.8 393.6L650.6 395.4L647.9 394.6L645.9 395.3L644.7 393.2L645.7 390.7L649.3 389.1L647.9 392.2L645.7 390.7L641.9 392.4L643.1 395.7L645.9 398.1L643.0 398.2L641.5 400.6L640.1 398.4L636.4 398.0L632.2 398.3L634.6 400.6L636.9 400.6L636.4 398.0L639.2 400.6L640.1 398.4L641.0 395.0L638.7 396.7L638.0 394.7L636.5 393.1L639.5 393.3L641.0 395.0M671.4 374.5L668.9 376.7L664.4 374.1L671.4 374.5M684.9 267.5L694.3 266.9L696.4 261.2L698.2 264.7L702.3 262.9L698.7 259.6L699.2 257.0L702.2 256.9L701.4 254.4L699.2 257.0L701.3 259.2L698.7 259.6L696.4 261.2L694.9 257.5M639.3 107.2L636.9 106.7L635.7 104.3M703.4 248.4L703.5 251.1L706.6 249.9L705.8 252.4L707.9 252.4L706.7 255.6L705.0 257.1L702.2 256.9L701.3 259.2L702.3 262.9L706.1 266.3L705.7 260.6L709.3 262.4L707.7 258.7L706.7 255.6L709.1 256.4L710.0 254.0L712.3 252.4L707.9 252.4L710.0 254.0L711.4 258.9L716.3 262.4L718.5 270.7L727.0 276.9L726.5 280.2L725.9 283.3L713.5 280.4L726.5 280.2L718.5 270.7L727.4 273.6L727.8 270.5M639.5 393.3L641.9 392.4L639.4 389.7L639.5 393.3L638.0 394.7L634.2 396.0L631.1 396.1L629.7 398.3L630.0 400.6L632.2 398.3L632.3 400.6M629.2 379.5L632.3 381.7L629.0 382.6L629.2 379.5L627.1 376.8L624.3 378.0L629.2 379.5L631.7 378.5L633.7 379.5L633.3 375.7L635.7 376.6L639.0 377.4L636.3 378.8L638.8 379.9L638.9 382.4L638.5 386.0L640.9 384.4L638.9 382.4L635.2 381.3L636.3 378.8M670.6 173.1L666.0 177.7L667.2 173.7L669.1 170.2L671.3 168.4L668.4 165.9L667.0 163.4L664.0 164.8L660.5 163.9L662.2 160.9L664.0 164.8L665.7 166.2L667.0 163.4L668.1 160.9L668.4 165.9L669.1 170.2L665.6 168.3L663.3 169.7L660.9 170.4L658.7 170.9L657.2 167.5L655.7 164.5L658.3 162.3L660.5 163.9L658.3 165.1L655.7 164.5L654.4 169.2L652.1 166.3L649.7 163.4L647.6 160.9L645.4 158.4L650.0 150.4L657.5 144.1L657.6 135.2L658.1 127.4L652.2 129.1L652.0 124.7L654.3 122.4L649.0 122.8L652.0 124.7L648.9 125.5L649.0 122.8L648.6 118.7L645.4 116.7L642.9 117.2L642.7 115.2L642.9 110.8L645.8 108.9L647.5 110.9L652.3 112.8L654.6 107.8L652.7 106.1M677.5 313.3L674.3 314.2L674.4 311.0L676.1 308.9L677.0 311.1L679.7 311.8L678.7 308.7L679.2 306.4L679.5 301.2L683.5 302.8L682.1 307.9L684.9 308.7L687.5 312.0L688.4 307.2M725.7 219.2L713.3 219.8L719.0 227.6L710.8 231.3L711.9 238.6L705.9 239.5L706.1 242.0L708.4 243.8L705.0 244.1L706.1 242.0L702.9 241.2L705.9 239.5L702.4 235.3L699.1 236.6L698.5 239.3L699.7 242.1L702.9 241.2L705.0 244.1L706.7 246.3L708.4 243.8L710.5 245.8L713.7 245.1L718.7 245.0L722.4 252.0L715.0 249.9L718.7 245.0L718.7 240.1L711.9 238.6L716.4 235.2L719.0 227.6L725.7 219.2L725.1 216.2L724.4 213.2L723.6 210.2L718.5 205.2L714.9 202.8L713.5 201.1L710.9 200.6L712.1 204.5L714.9 202.8L717.2 202.8L718.5 205.2L720.7 201.1L719.7 198.1L715.9 197.5L718.6 195.0L713.9 195.5L717.4 191.7L716.1 188.4L705.7 189.1L712.5 180.0L713.6 182.4L705.7 189.1L714.8 185.2M675.4 299.4L677.0 296.4L679.5 301.2L689.1 297.1L678.4 292.9L679.9 288.6L689.1 297.1L696.5 294.3L698.4 303.7L706.5 297.1L708.7 299.2L709.6 295.9L711.0 298.7L712.7 295.1L708.0 292.7L706.5 297.1L709.6 295.9L708.0 292.7L696.5 294.3L690.6 289.3L681.5 283.1L682.3 280.0L691.5 278.0L683.1 276.8L682.3 280.0M696.5 155.9L689.2 159.6L681.1 148.2L675.1 141.3L682.9 137.8L684.9 140.3L675.1 141.3L678.7 132.9L676.5 130.5L674.4 128.1L672.2 125.8L662.8 124.9L658.1 127.4L659.1 122.7L654.3 122.4L657.9 118.6L658.8 111.9L652.3 112.8L656.7 109.8L654.6 107.8L651.0 109.0L647.5 110.9L650.4 114.5L646.9 113.9L648.6 118.7L645.4 119.7L645.4 116.7M658.7 170.9L660.4 173.2L660.9 170.4L664.6 172.5L663.3 169.7L665.2 170.5L669.1 170.2L670.6 173.1L671.3 168.4L678.6 172.8L673.5 183.5L670.6 192.1L680.8 190.9L672.6 195.0L670.6 192.1L668.4 189.4L666.4 186.8L664.8 184.6L666.0 177.7L662.4 175.1L667.2 173.7L670.6 173.1L673.5 183.5L666.4 186.8M674.5 198.1L672.6 195.0M727.8 234.3L716.4 235.2L710.8 231.3L713.3 219.8L723.6 210.2L722.7 207.2L718.5 205.2L721.7 204.1L722.7 207.2M705.6 330.7L697.2 321.6L690.6 314.8L700.0 311.8L711.8 319.3L707.3 308.7L712.1 307.4L717.3 307.3L716.1 302.4L712.0 302.8L714.6 300.1L711.9 300.4L708.7 299.2L706.4 300.4L698.4 303.7M625.6 366.6L623.0 365.6L624.7 364.7L627.5 365.2L627.7 363.1L631.0 361.2L633.3 360.3L633.3 355.8L635.9 358.6M624.4 116.1L624.4 113.7L627.0 115.9L624.4 118.6L624.4 121.0L627.2 121.1L628.5 124.2L630.7 125.1L633.7 126.4L635.8 127.7L637.9 127.5L635.3 124.5L633.7 126.4L634.2 129.7L636.5 131.3L638.9 129.6L635.8 127.7L634.2 129.7L631.7 133.2L636.5 131.3L639.1 132.9L635.8 134.5L631.7 133.2L630.0 136.0L627.4 132.9L627.4 129.6L624.4 130.7L624.4 133.1L627.4 132.9L624.4 135.5L624.4 133.1M630.3 372.8L632.8 372.8L633.3 375.7L630.3 376.0L631.7 378.5L632.3 381.7L635.2 381.3L638.8 379.9L639.0 377.4L640.6 374.0L635.7 376.6L636.5 372.1L639.2 371.1M624.4 113.7L624.4 111.3L624.4 108.9L624.4 106.5L627.3 106.0L630.1 107.7L631.1 110.5L629.1 109.6L627.3 106.0L628.5 103.1L624.4 104.0L624.4 106.5M644.5 127.6L647.7 127.7L646.2 130.3L645.2 135.6L650.0 136.3L647.6 140.1L640.7 139.5L645.2 135.6L639.7 136.1L642.3 133.3L646.2 130.3L641.8 130.4L638.9 129.6L637.9 127.5L639.0 124.8L637.1 123.4L635.3 124.5L635.2 122.3L637.1 123.4L640.1 123.0L637.9 120.9L637.2 118.0L633.2 117.5L634.3 114.8L636.2 115.6L637.2 118.0L640.4 119.0L642.9 117.2L638.9 116.6L638.8 114.0L642.7 115.2L641.2 112.0L642.9 110.8L642.6 108.0L639.3 110.2L638.8 114.0L636.7 112.0L637.0 109.5L634.8 109.5L634.2 106.9L632.2 108.6L630.1 107.7M672.4 335.0L670.4 320.9L667.4 316.3L661.0 317.9L663.0 315.1L664.9 312.5L666.7 310.0L668.3 307.8L669.7 305.9L671.6 309.8L668.3 307.8M686.2 249.4L689.8 245.0L692.3 247.5L693.9 244.5L691.9 241.7L690.8 237.2L685.6 237.3M657.1 323.3L656.2 329.0L663.2 331.0L659.0 320.6L657.1 323.3M640.7 153.2L645.3 145.3L640.7 139.5L636.6 137.4L635.8 134.5M662.0 400.6L658.0 397.1L654.1 398.3L657.4 400.6L658.0 397.1L659.2 394.3L655.8 393.8L653.8 390.6L651.3 388.9L652.0 386.6L648.3 387.1L646.3 385.3L648.4 382.8L649.8 380.8L652.4 380.8L657.5 381.7L654.7 383.6L652.4 380.8L656.7 378.5L661.7 377.8L666.8 378.6L664.4 374.1L666.8 364.3L655.8 361.6L648.1 358.9L653.1 351.7L639.3 354.7L632.7 352.1L635.3 349.6L638.1 346.9L640.8 343.9L639.3 354.7L635.3 349.6M649.6 131.2L646.2 130.3L644.5 127.6L640.8 128.1L639.0 124.8L641.1 125.0L644.5 127.6L641.8 130.4L640.8 128.1L637.9 127.5M630.3 372.8L627.8 370.5L627.8 367.9L625.3 369.7L623.2 371.0L620.9 373.8L620.9 370.5L620.9 367.1L623.0 365.6L620.9 363.8L620.9 367.1L623.9 368.0L620.9 370.5L623.2 371.0L625.1 372.4L628.0 373.5L630.3 372.8L630.1 369.1L632.4 370.0L635.2 368.1M682.3 320.8L690.7 326.3L694.9 333.6L705.6 330.7L707.2 327.8L708.8 324.8L697.2 321.6L690.7 326.3L686.1 336.9L697.0 344.6L695.2 347.2M637.9 120.9L640.4 119.0L638.9 116.6L636.2 115.6L636.7 112.0L634.8 109.5L632.7 112.1L631.1 110.5L632.2 108.6L631.4 105.0L632.5 101.9L637.5 101.9L636.9 106.7L637.0 109.5M645.1 383.5L642.6 382.9L643.1 385.7L646.3 385.3L645.1 383.5L646.9 381.0L648.4 382.8L652.0 384.3L654.7 383.6M645.4 119.7L642.9 117.2L642.9 121.2L645.4 119.7L646.1 122.7L649.0 122.8L651.6 118.3L654.3 122.4L654.5 126.6L652.0 124.7M700.1 269.1L702.3 262.9L705.7 260.6L705.0 257.1L707.7 258.7L709.1 256.4L711.4 258.9L707.7 258.7L705.7 260.6L701.3 259.2L705.0 257.1L703.7 253.3L706.7 255.6M678.7 308.7L681.6 310.4L682.1 307.9L679.2 306.4L677.1 304.8L676.1 308.9L678.7 308.7L677.0 311.1L677.5 313.3L679.5 315.4L676.6 317.4L678.9 317.7L677.4 322.6L674.9 319.9L676.6 317.4L672.8 316.4L670.4 320.9L659.0 320.6L661.0 317.9L670.4 320.9L674.9 319.9M683.1 276.8L683.8 273.6L691.5 278.0L697.5 283.2L690.6 289.3M632.3 393.5L631.1 396.1L632.2 398.3L629.7 398.3M650.0 150.4L645.3 145.3L647.6 140.1L645.2 135.6L642.3 133.3L641.8 130.4L639.1 132.9L639.7 136.1L636.6 137.4L631.9 139.1L638.8 142.8L645.3 145.3L653.1 140.9L657.5 144.1L663.9 157.6L668.1 160.9L664.6 162.2L667.0 163.4M708.8 197.5L713.9 195.5L715.9 197.5L713.6 198.2L713.5 201.1L715.4 200.6L714.9 202.8M624.4 123.4L627.2 126.5L627.4 129.6L624.4 128.2L624.4 130.7L627.4 132.9L631.7 133.2L630.8 129.1L627.4 129.6M660.3 177.0L658.6 174.7L658.7 170.9L656.6 172.1L654.4 169.2L657.2 167.5L658.3 165.1L658.3 162.3L662.2 160.9L663.9 157.6L658.9 158.7L657.5 144.1L665.2 144.6L657.6 135.2L668.2 137.2L675.1 141.3L680.8 135.3L678.7 132.9L668.2 137.2L672.2 125.8L670.0 123.5L667.8 121.2L662.8 124.9L665.6 118.9L667.8 121.2M712.7 295.1L717.6 294.8L723.8 291.7L724.8 288.6L713.5 280.4L725.4 286.1M706.7 246.3L705.4 248.0L703.5 251.1L703.7 253.3L705.8 252.4M711.9 300.4L711.0 298.7M632.3 393.5L634.4 392.4L634.2 396.0L632.2 398.3M719.7 198.1L718.1 199.6L720.7 201.1L721.7 204.1M665.2 380.0L661.7 377.8L661.6 381.5L659.1 385.8M647.6 160.9L653.8 158.8L655.7 164.5L652.1 166.3M624.4 123.4L628.5 124.2L631.2 121.4L627.2 121.1L624.4 123.4L624.4 125.8L624.4 128.2L627.2 126.5L628.5 124.2M630.7 125.1L627.2 126.5L624.4 125.8M683.9 225.2L693.1 220.1L683.3 222.2L683.9 225.2L695.1 228.1L702.4 235.3L707.5 235.6L705.9 239.5L711.2 242.8L706.1 242.0M631.2 121.4L629.0 118.0L627.2 121.1L626.9 118.9L624.4 121.0L624.4 123.4M717.4 191.7L718.6 195.0L719.7 198.1M674.4 311.0L671.7 312.8L667.4 316.3L663.0 315.1M639.3 110.2L641.2 112.0L638.8 114.0L636.2 115.6L633.2 117.5L631.9 119.0L629.0 118.0L627.0 115.9L624.4 116.1L624.4 118.6L626.9 118.9L627.0 115.9L628.1 113.9L624.4 113.7L626.9 110.8L628.9 111.8M656.6 172.1L657.2 167.5L660.0 168.4L663.3 169.7L661.3 166.4L660.5 163.9M624.4 111.3L626.9 110.8L629.1 109.6M723.8 291.7L722.8 293.7L717.6 294.8L721.3 297.0L722.8 293.7M665.6 168.3L665.2 170.5L667.2 173.7L664.6 172.5L662.4 175.1L662.6 180.8L666.0 177.7M642.6 382.9L640.9 384.4L641.4 381.0L638.8 379.9M649.6 131.2L653.5 133.0L658.1 127.4L662.2 131.5L657.6 135.2L653.5 133.0L650.0 136.3L653.1 140.9L657.6 135.2M653.1 373.7L651.9 377.5L652.4 380.8L652.0 384.3L649.3 385.3L652.0 386.6L652.0 384.3L649.8 380.8L646.9 381.0L645.1 378.9L644.0 381.2L645.1 383.5M634.3 119.8L631.2 121.4L630.7 125.1L630.8 129.1L633.7 126.4L633.6 123.5L635.3 124.5M678.6 345.4L679.4 331.6L672.4 335.0L678.6 345.4L671.4 350.8L671.1 342.7L672.4 335.0L663.5 340.6L657.9 339.2L663.2 331.0L656.2 335.5L652.0 336.6L649.5 337.4L648.9 334.0L650.0 332.6L651.0 331.3L653.6 334.0L655.6 332.5M697.6 248.4L699.9 249.6L696.6 251.3M627.5 365.2L625.6 366.6L625.3 369.7L627.8 370.5L625.1 372.4L625.3 369.7L623.9 368.0L625.6 366.6M702.9 241.2L701.8 238.3L705.9 239.5M691.9 241.7L695.1 236.7L698.5 239.3L695.7 241.8L691.9 241.7L686.1 243.4L686.2 246.4L689.8 245.0M713.3 219.8L709.6 211.6L718.5 205.2L712.1 204.5L707.9 203.3L698.2 213.8L702.6 220.2L713.3 219.8L724.4 213.2M717.3 307.3L716.0 310.3L714.6 313.5L707.3 308.7L709.6 305.5L706.4 300.4L708.6 301.5L711.9 300.4L713.1 298.3M672.1 148.9L675.1 141.3L665.2 144.6L663.9 157.6L664.6 162.2L664.0 164.8L661.3 166.4L665.6 168.3L668.4 165.9L665.7 166.2L665.6 168.3M702.6 245.4L701.3 247.5L697.6 248.4L696.0 246.3L692.3 247.5L693.9 249.0L694.1 251.4L690.4 253.4L686.2 252.4L686.1 255.4L685.9 258.4L685.6 261.4L685.3 264.5L690.5 263.5L684.9 267.5L684.4 270.5L683.8 273.6M722.4 252.0L721.5 258.3L728.8 255.4L728.8 252.4L722.4 252.0L728.8 249.4L728.7 246.4L722.4 252.0M638.9 382.4L636.5 385.4L634.1 383.4M664.3 400.6L662.0 400.6L664.5 396.5L664.3 400.6M651.6 118.3L648.6 118.7L650.4 114.5L652.3 112.8L651.0 109.0L647.0 106.8L646.5 101.8L644.0 100.3L640.9 103.2L641.3 105.6L639.3 107.2L640.9 103.2L636.9 106.7L634.2 106.9M702.4 235.3L701.8 238.3L698.5 239.3M630.2 366.8L627.8 367.9L627.5 365.2L629.8 363.7L631.0 361.2L627.4 361.1L627.7 363.1L629.8 363.7L630.2 366.8L627.5 365.2M662.0 400.6L659.7 400.6L658.0 397.1L664.5 396.5M728.7 246.4L718.7 245.0L728.5 243.4L728.7 246.4M628.1 356.5L630.3 354.4L630.3 357.9L626.6 358.0L627.4 361.1L625.0 359.6L626.6 358.0L628.1 356.5L630.3 357.9M651.7 397.6L653.3 395.8L651.8 393.6M629.0 118.0L632.0 115.7L634.3 114.8M692.9 150.8L689.2 159.6L678.0 156.7L681.1 148.2L684.9 140.3L687.0 142.9L689.0 145.5L691.0 148.2L689.2 159.6L694.3 167.1L691.9 176.2L685.3 166.7L678.0 156.7L670.5 158.1L668.1 160.9L674.3 162.4L671.3 168.4M685.3 166.7L678.6 172.8L670.6 173.1M653.8 158.8L658.3 162.3L658.9 158.7L650.0 150.4L640.7 153.2L643.1 155.8L650.0 150.4L653.1 140.9L647.6 140.1M709.6 211.6L712.1 204.5L713.5 201.1M674.3 162.4L668.4 165.9M645.7 390.7L644.3 388.9L643.1 385.7L646.4 387.8L645.7 390.7M672.8 316.4L671.7 312.8L666.7 310.0M727.1 228.3L719.0 227.6L726.3 222.2L725.7 219.2M686.2 252.4L691.3 250.0L694.1 251.4M698.7 342.0L694.9 333.6L703.9 333.6L705.6 330.7M678.7 308.7L682.1 307.9M644.0 381.2L642.6 382.9L641.4 381.0L638.9 382.4M641.5 389.6L640.3 387.4M698.2 213.8L709.6 211.6L707.9 203.3L708.8 197.5L710.9 200.6M663.9 157.6L672.1 148.9L681.1 148.2L687.0 142.9M642.4 387.7L641.5 389.6L641.9 392.4L644.3 388.9L642.4 387.7M702.6 220.2L695.1 228.1L690.8 237.2L685.3 234.3M633.2 117.5L632.0 115.7L630.9 113.4L629.9 115.2L629.0 118.0L626.9 118.9M652.9 400.6L651.7 397.6L654.1 398.3L655.2 400.6L652.9 400.6L650.6 400.6L648.0 397.3L648.3 400.6L645.9 398.1L648.0 397.3M698.5 158.9L689.2 159.6L685.3 166.7L694.3 167.1L705.6 170.3M645.9 398.1L645.9 395.3M658.9 375.0L661.4 369.5M634.3 119.8L633.2 117.5M638.4 150.7L645.3 145.3M703.7 253.3L701.3 251.2L699.1 252.3L701.4 254.4L703.7 253.3L702.2 256.9M671.6 309.8L671.7 312.8L674.3 314.2M713.1 316.7L711.8 319.3L710.4 322.0L708.8 324.8M674.6 306.5L677.1 304.8L673.2 302.1L669.7 305.9L674.6 306.5L676.1 308.9M665.5 356.5L662.3 348.8L671.4 350.8L665.5 356.5L655.8 361.6L653.1 351.7L654.5 344.0L662.3 348.8L671.1 342.7L678.6 345.4L686.2 346.6L697.0 344.6L694.9 333.6L702.1 336.5L703.9 333.6M658.9 375.0L661.7 377.8M657.4 400.6L655.2 400.6M632.4 370.0L630.3 372.8L630.3 376.0M717.2 202.8L715.4 200.6L715.9 197.5L718.1 199.6L717.2 202.8L720.7 201.1M699.7 242.1L700.1 245.8L697.6 248.4L697.3 244.7L693.9 244.5L695.7 241.8L699.7 242.1L702.6 245.4L705.0 244.1L704.6 246.1L706.7 246.3L708.3 247.7L708.4 243.8L711.2 242.8L711.9 238.6L713.7 245.1L715.0 249.9L712.3 252.4L710.1 249.4L710.5 245.8L711.2 242.8L713.7 245.1L718.7 240.1L716.4 235.2L727.5 231.3L727.8 234.3L728.1 237.3L718.7 240.1L727.8 234.3M651.9 377.5L648.4 377.8L649.8 380.8L651.9 377.5L656.7 378.5L657.5 381.7L661.6 381.5L665.2 380.0L666.8 378.6L668.9 376.7M695.1 228.1L695.1 236.7L690.8 237.2M710.1 249.4L708.3 247.7L710.5 245.8M646.4 387.8L646.3 385.3L649.3 385.3M710.6 272.1L711.1 266.0M702.7 277.4L705.2 285.3L708.0 292.7L713.5 280.4L712.7 295.1L709.6 295.9M675.4 299.4L679.5 301.2L678.4 292.9L677.0 296.4M696.4 261.2L690.5 263.5L685.6 261.4L690.5 258.6L696.4 261.2M693.1 220.1L690.4 212.8L687.0 202.1L678.5 206.9M698.2 213.8L693.1 220.1L682.5 219.2L683.3 222.2M624.4 108.9L626.9 110.8L628.1 113.9L629.9 115.2L627.0 115.9M653.6 334.0L656.2 335.5L653.7 340.3L649.2 340.0L644.8 339.2L642.8 341.6L653.1 351.7L662.3 348.8L663.5 340.6L654.5 344.0L653.7 340.3L657.9 339.2M637.9 120.9L640.8 121.0L642.9 121.2L646.1 122.7L648.6 118.7M710.8 231.3L705.2 230.1L713.3 219.8L725.1 216.2M662.8 124.9L659.1 122.7L657.9 118.6L661.1 114.2L658.8 111.9L656.7 109.8M620.9 377.2L624.3 378.0L623.6 375.0L620.9 373.8L620.9 377.2M650.0 136.3L649.6 131.2L645.2 135.6M705.4 248.0L704.6 246.1L702.6 245.4L702.9 241.2M672.2 125.8L662.2 131.5L662.8 124.9L670.0 123.5M660.9 170.4L660.0 168.4L658.7 170.9M647.5 110.9L647.0 106.8L645.8 108.9L642.6 108.0L639.3 107.2M632.7 352.1L633.3 355.8L630.3 354.4L632.7 352.1M641.5 389.6L644.3 388.9L646.4 387.8M642.5 377.3L640.6 374.0L644.9 373.7L648.1 374.2L649.1 369.7L653.1 373.7L656.7 378.5L658.9 375.0L657.4 371.1M652.2 129.1L648.9 125.5L647.7 127.7L652.2 129.1L653.5 133.0L653.1 140.9M696.0 246.3L697.3 244.7L699.7 242.1L701.8 238.3L699.1 236.6L695.1 236.7L695.7 241.8L697.3 244.7L700.1 245.8L702.6 245.4L703.4 248.4L701.3 251.2L699.9 249.6L703.4 248.4L705.4 248.0L706.6 249.9L707.9 252.4L710.1 249.4L706.6 249.9L708.3 247.7L705.4 248.0M694.7 153.4L689.2 159.6M658.0 397.1L653.3 395.8L654.1 398.3L652.9 400.6M626.3 382.8L628.3 385.6L627.9 388.5L629.3 392.1L632.3 393.5L631.3 391.7M661.1 114.2L663.4 116.5L659.1 122.7L665.6 118.9L663.4 116.5L657.9 118.6L654.2 116.4L654.3 122.4M700.1 269.1L694.3 266.9M674.4 311.0L677.5 313.3M721.3 297.0L720.4 299.2L717.6 294.8L713.5 280.4L705.2 285.3L696.5 294.3L706.5 297.1L706.4 300.4L707.3 308.7L713.1 316.7L714.6 313.5L712.1 307.4L716.0 310.3M629.2 379.5L626.3 382.8L629.0 382.6M707.5 235.6L711.9 238.6M637.0 365.9L634.7 364.7M620.9 363.8L622.6 362.1L624.9 362.7M655.8 393.8L653.3 395.8L650.6 395.4L651.7 397.6M630.8 129.1L627.2 126.5M664.8 184.6L662.6 180.8L660.3 177.0L660.4 173.2L662.4 175.1L660.3 177.0M624.4 104.0L624.4 101.6L628.5 103.1M663.2 331.0L670.4 320.9L677.4 322.6L682.3 320.8L685.8 318.3L684.3 315.6L690.6 314.8L690.7 326.3L679.4 331.6L677.4 322.6L672.4 335.0L663.2 331.0L663.5 340.6L671.1 342.7M698.4 198.9L707.9 203.3M708.6 301.5L712.0 302.8L712.1 307.4M644.5 127.6L644.2 124.6L647.7 127.7L649.6 131.2L652.2 129.1L654.5 126.6L658.1 127.4M688.5 189.9L691.9 176.2L684.0 179.7L680.8 190.9L688.5 189.9L699.4 182.1L709.1 175.3L707.0 172.5M702.7 277.4L697.5 283.2L696.5 294.3M658.3 165.1L661.3 166.4L665.7 166.2M688.5 189.9L684.0 179.7L685.3 166.7L674.3 162.4L678.0 156.7L672.1 148.9L670.5 158.1L663.9 157.6M718.5 270.7L710.6 272.1L706.1 266.3L700.1 269.1L698.2 264.7M660.0 168.4L658.3 165.1M665.0 384.1L661.6 381.5M642.5 377.3L646.4 376.3M702.6 220.2L705.2 230.1L702.4 235.3M654.5 126.6L659.1 122.7M718.4 304.4L717.3 307.3M640.1 123.0L641.1 125.0L640.8 128.1L638.9 129.6L639.1 132.9L642.3 133.3M641.4 381.0L639.0 377.4L642.5 377.3L645.1 378.9M676.5 130.5L668.2 137.2L674.4 128.1M682.3 320.8L681.3 317.3L684.3 315.6L687.5 312.0L684.3 312.0M658.6 174.7L656.6 172.1M665.2 144.6L668.2 137.2L662.2 131.5M712.0 302.8L711.9 300.4M726.7 225.2L727.1 228.3L727.5 231.3L719.0 227.6L726.7 225.2L726.3 222.2M642.5 123.2L641.1 125.0L644.2 124.6L646.1 122.7L648.9 125.5L644.2 124.6L642.5 123.2L640.1 123.0M695.1 228.1L693.1 220.1L702.6 220.2L709.6 211.6L723.6 210.2M624.4 396.4L626.6 394.6M648.1 374.2L653.1 373.7L658.9 375.0L664.4 374.1M632.3 393.5L634.2 396.0M632.7 112.1L636.7 112.0M633.0 366.6L632.4 370.0L632.8 372.8M658.6 174.7L660.4 173.2L664.6 172.5L665.2 170.5M702.7 277.4L700.1 269.1L691.5 278.0L702.7 277.4L713.5 280.4L718.5 270.7M645.4 158.4L643.1 155.8M636.5 372.1L633.3 375.7L631.7 378.5M695.1 228.1L699.1 236.6M631.2 121.4L631.9 119.0L634.3 119.8L635.2 122.3L637.9 120.9L637.1 123.4M631.2 121.4L633.6 123.5L630.7 125.1M623.6 375.0L623.2 371.0L623.9 368.0L623.0 365.6L622.6 362.1M638.4 150.7L638.8 142.8L636.6 137.4M638.1 346.9L639.3 354.7M646.0 400.6L645.9 398.1L643.7 400.6L641.5 400.6L639.2 400.6L636.9 400.6M685.9 258.4L690.5 258.6L686.1 255.4L690.4 253.4L691.3 250.0L692.3 247.5M648.1 374.2L651.9 377.5M658.9 158.7L662.2 160.9L664.6 162.2M684.0 179.7L673.5 183.5L664.8 184.6M644.8 339.2L646.8 336.6L648.9 334.0L652.0 336.6L653.7 340.3M652.0 336.6L653.6 334.0L650.0 332.6M686.2 249.4L686.2 246.4M658.9 158.7L653.8 158.8L650.0 150.4M633.6 123.5L635.2 122.3M640.7 153.2L638.4 150.7L636.1 148.4M704.0 167.7L694.3 167.1L698.5 158.9L700.4 161.9M637.6 391.1L639.4 389.7L641.5 389.6M634.4 392.4L632.6 389.6M666.8 364.3L665.5 356.5L653.1 351.7M698.4 198.9L696.6 190.7L705.7 189.1L708.8 197.5L698.4 198.9L694.2 205.5M684.4 228.3L683.9 225.2M647.9 394.6L644.7 393.2L647.9 392.2L650.0 391.5M712.0 302.8L709.6 305.5M636.5 372.1L632.4 370.0M665.2 380.0L665.0 384.1L664.8 388.2M630.8 129.1L627.4 132.9M710.8 231.3L707.5 235.6L705.2 230.1L695.1 228.1M685.8 318.3L681.3 317.3L679.5 315.4M623.8 390.2L625.4 388.1L628.3 385.6M713.7 245.1L712.7 247.8L715.0 249.9L714.6 254.6L721.5 258.3L728.7 258.4M659.7 400.6L657.4 400.6M642.5 377.3L641.4 381.0L644.0 381.2L646.9 381.0L648.4 377.8L648.1 374.2M684.9 267.5L685.3 264.5M710.6 272.1L700.1 269.1M627.3 106.0L631.4 105.0M640.4 119.0L640.8 121.0M710.1 249.4L712.7 247.8M665.2 144.6L672.1 148.9M642.5 377.3L644.0 381.2M650.4 114.5L654.2 116.4L652.3 112.8M702.7 277.4L710.6 272.1L713.5 280.4M636.5 372.1L640.6 374.0M690.6 314.8L687.5 312.0M699.1 252.3L699.9 249.6L701.3 247.5L700.1 245.8M716.3 262.4L721.5 258.3L728.5 261.4M728.3 240.3L728.5 243.4L718.7 240.1L728.3 240.3L728.1 237.3M702.1 336.5L700.4 339.3L694.9 333.6M685.8 318.3L690.7 326.3M674.4 311.0L671.6 309.8L674.6 306.5L673.2 302.1L675.4 299.4L677.1 304.8L679.5 301.2M634.8 109.5L636.9 106.7M642.5 123.2L642.9 121.2L640.4 119.0M630.5 389.8L627.9 388.5L625.4 388.1L620.9 387.2M688.5 189.9L698.4 198.9L705.7 189.1M637.6 391.1L639.5 393.3M680.8 135.3L682.9 137.8M637.6 391.1L637.4 388.8M636.5 393.1L634.4 392.4M625.5 400.6L624.4 396.4L623.2 400.6L620.9 400.6L620.9 397.3L620.9 393.9L624.4 396.4L620.9 397.3L623.2 400.6L625.5 400.6M692.9 150.8L694.7 153.4L696.5 155.9L698.5 158.9M728.8 249.4L728.8 252.4M698.7 342.0L697.0 344.6M632.7 112.1L632.0 115.7L631.9 119.0M710.7 177.1L699.4 182.1L712.5 180.0L710.7 177.1L709.1 175.3M703.4 248.4L701.3 247.5M649.7 163.4L655.7 164.5M658.8 111.9L654.2 116.4L651.6 118.3L650.4 114.5M698.4 198.9L687.0 202.1L677.2 203.8M634.3 119.8L633.6 123.5M658.0 397.1L655.8 393.8M727.4 273.6L727.0 276.9M625.1 372.4L623.6 375.0L627.1 376.8M686.2 252.4L686.2 249.4L691.3 250.0M627.3 106.0L626.9 110.8M660.0 168.4L661.3 166.4M674.3 162.4L678.6 172.8L684.0 179.7M688.5 189.9L696.6 190.7L699.4 182.1M632.7 112.1L632.2 108.6L634.8 109.5M624.4 104.0L627.3 106.0L624.4 108.9M705.2 285.3L697.5 283.2M691.0 148.2L692.9 150.8M700.4 339.3L698.7 342.0M630.8 129.1L634.2 129.7M689.0 145.5L681.1 148.2L691.0 148.2M635.2 381.3L636.5 385.4L638.5 386.0M713.6 198.2L715.4 200.6L718.1 199.6M713.6 198.2L713.9 195.5M637.6 391.1L636.5 393.1M686.1 359.4L684.3 361.6L682.4 363.8M629.9 115.2L632.0 115.7M647.9 394.6L647.9 392.2M637.0 365.9L637.1 362.7M703.4 248.4L704.6 246.1M670.5 158.1L674.3 162.4M710.4 322.0L700.0 311.8M728.4 264.5L721.5 258.3M676.4 315.0L676.6 317.4M688.5 189.9L687.0 202.1M707.2 327.8L697.2 321.6L710.4 322.0M642.5 377.3L644.9 373.7M668.4 189.4L673.5 183.5M646.1 122.7L642.5 123.2M674.4 311.0L677.0 311.1M649.7 163.4L653.8 158.8L645.4 158.4M636.5 385.4L634.3 388.0M664.9 312.5L667.4 316.3M634.3 119.8L637.9 120.9" fill="none" stroke="#1c0212" stroke-width="0.6" shape-rendering="crispEdges"/><mask id="mMag"><rect x="600" y="90" width="160" height="320" fill="#000"/><circle cx="636" cy="116" r="16" fill="url(#spot)"/><circle cx="662" cy="168" r="6" fill="url(#spot)"/><circle cx="702" cy="250" r="10" fill="url(#spot)"/><circle cx="678" cy="312" r="6" fill="url(#spot)"/><circle cx="640" cy="392" r="17" fill="url(#spot)"/><circle cx="627" cy="367" r="8" fill="url(#spot)"/></mask><rect x="600" y="90" width="160" height="320" fill="url(#pMagF)" mask="url(#mMag)" opacity="0.8"/></g><path d="M624.4 99.2L642.2 99.3C644.0 100.4 648.4 102.4 652.7 106.1C657.0 109.8 662.8 115.9 667.8 121.2C672.8 126.5 678.1 132.0 682.9 137.8C687.7 143.6 692.5 150.1 696.5 155.9C700.5 161.7 704.3 168.5 707.0 172.5C709.7 176.5 710.4 175.7 712.5 180.0C714.6 184.3 717.6 192.1 719.7 198.1C721.8 204.1 723.8 210.2 725.1 216.2C726.5 222.2 727.2 228.3 727.8 234.3C728.4 240.3 728.8 246.4 728.8 252.4C728.8 258.4 728.5 264.5 727.8 270.5C727.1 276.5 725.9 284.2 724.8 288.6C723.7 293.0 723.2 292.3 721.3 297.0C719.3 301.7 716.9 309.2 713.1 316.7C709.3 324.2 703.8 334.1 698.7 342.0C693.6 349.9 688.0 357.5 682.4 363.8C676.8 370.1 668.1 377.3 665.2 380.0L664.3 400.6L620.9 400.6L620.9 363.8C622.1 362.6 624.8 359.8 628.1 356.5C631.4 353.2 636.3 349.0 640.8 343.9C645.3 338.8 650.4 332.1 655.2 325.8C660.0 319.5 666.3 310.3 669.7 305.9C673.1 301.5 673.7 302.3 675.4 299.4C677.1 296.5 678.4 293.4 679.9 288.6C681.4 283.8 683.3 276.5 684.4 270.5C685.5 264.5 686.1 258.4 686.2 252.4C686.4 246.4 686.0 240.3 685.3 234.3C684.5 228.3 683.5 222.2 681.7 216.2C679.9 210.2 677.3 203.4 674.5 198.1C671.7 192.8 667.2 188.1 664.8 184.6C662.4 181.1 662.8 180.5 660.3 177.0C657.8 173.5 653.7 168.2 649.7 163.4C645.7 158.6 640.6 152.9 636.1 148.4C631.6 143.9 624.8 138.3 622.5 136.3L624.4 135.5Z" fill="none" stroke="#1c0212" stroke-width="0.6"/><path d="M622.5 136.3C624.8 138.3 631.6 143.9 636.1 148.4C640.6 152.9 645.7 158.6 649.7 163.4C653.7 168.2 657.8 173.5 660.3 177.0C662.8 180.5 662.4 181.1 664.8 184.6C667.2 188.1 671.7 192.8 674.5 198.1C677.3 203.4 679.9 210.2 681.7 216.2C683.5 222.2 684.5 228.3 685.3 234.3C686.0 240.3 686.4 246.4 686.2 252.4C686.1 258.4 685.5 264.5 684.4 270.5C683.3 276.5 681.4 283.8 679.9 288.6C678.4 293.4 677.1 296.5 675.4 299.4C673.7 302.3 673.1 301.5 669.7 305.9C666.3 310.3 660.0 319.5 655.2 325.8C650.4 332.1 645.3 338.8 640.8 343.9C636.3 349.0 631.4 353.2 628.1 356.5C624.8 359.8 622.1 362.6 620.9 363.8" fill="none" stroke="#c8c020" stroke-width="0.7" opacity="0.7"/><path d="M667.8 121.2C670.3 124.0 678.1 132.0 682.9 137.8C687.7 143.6 692.5 150.1 696.5 155.9C700.5 161.7 704.3 168.5 707.0 172.5C709.7 176.5 710.4 175.7 712.5 180.0C714.6 184.3 717.6 192.1 719.7 198.1C721.8 204.1 723.8 210.2 725.1 216.2C726.5 222.2 727.2 228.3 727.8 234.3C728.4 240.3 728.8 246.4 728.8 252.4C728.8 258.4 728.5 264.5 727.8 270.5C727.1 276.5 725.9 284.2 724.8 288.6C723.7 293.0 723.2 292.3 721.3 297.0C719.3 301.7 716.9 309.2 713.1 316.7C709.3 324.2 703.8 334.1 698.7 342.0C693.6 349.9 685.1 360.2 682.4 363.8" fill="none" stroke="#e8e6e0" stroke-width="1.3" opacity="0.85" transform="translate(1.2,0)"/><path d="M520.5 82.0L529.5 82.0L526.5 414.5L518.5 414.5Z" fill="#050505"/><path d="M493.7 82.0L520.6 82.0L518.5 414.0L491.3 414.0Z" fill="#a81f1f"/><path d="M493.7 82.0L502.1 82.0L510.8 82.0L520.6 82.0M493.6 91.5L501.8 90.8L511.4 92.7L520.5 92.4M493.6 102.1L501.9 101.6L511.0 100.8L520.5 100.7M493.5 110.7L503.4 112.0L512.1 112.0L520.4 110.6M493.4 120.6L502.7 121.6L512.2 121.9L520.4 120.1M493.3 131.1L502.7 130.8L510.6 130.8L520.3 129.9M493.3 141.5L503.1 140.7L510.8 141.5L520.2 140.7M493.2 151.2L503.0 150.4L511.0 150.6L520.2 150.2M493.1 159.4L501.7 160.8L510.1 159.1L520.1 160.4M493.1 169.4L502.1 169.8L510.7 171.0L520.0 169.2M493.0 179.5L501.3 179.9L510.5 179.3L520.0 180.2M492.9 189.0L502.1 190.3L510.0 188.4L519.9 188.8M492.9 199.8L502.1 198.6L510.5 198.5L519.9 199.1M492.8 207.9L502.2 209.8L511.8 209.5L519.8 210.0M492.7 217.6L501.3 219.7L511.3 218.5L519.7 219.7M492.6 228.7L502.4 228.0L510.0 228.3L519.7 227.7M492.6 238.0L502.6 237.9L509.5 237.2L519.6 237.5M492.5 248.6L501.2 247.5L509.6 249.1L519.5 247.8M492.4 257.1L500.5 256.8L509.7 258.2L519.5 257.0M492.4 266.5L501.4 267.0L511.5 266.7L519.4 267.6M492.3 277.9L501.1 278.4L510.3 276.7L519.4 277.1M492.2 286.0L501.1 286.5L511.1 287.8L519.3 287.1M492.1 295.8L500.6 296.3L509.6 296.2L519.2 297.6M492.1 305.8L500.1 307.5L510.3 307.7L519.2 306.4M492.0 317.2L501.4 317.0L510.6 316.3L519.1 315.5M491.9 325.5L501.8 327.0L510.9 325.8L519.1 326.5M491.9 336.5L501.2 336.6L510.0 336.2L519.0 336.3M491.8 345.1L501.8 346.7L508.9 346.7L518.9 346.7M491.7 355.8L499.8 356.3L509.0 356.4L518.9 355.8M491.7 364.2L500.0 365.5L509.9 365.7L518.8 366.1M491.6 374.3L499.5 375.9L508.6 375.8L518.7 374.1M491.5 385.4L501.2 385.5L509.7 385.5L518.7 384.0M491.4 394.8L500.1 395.3L510.2 394.4L518.6 394.5M491.4 403.2L499.4 404.4L509.5 405.0L518.6 404.5M491.3 414.0L499.6 414.0L509.1 414.0L518.5 414.0M493.7 82.0L493.6 91.5L493.6 102.1L493.5 110.7L493.4 120.6L493.3 131.1L493.3 141.5L493.2 151.2L493.1 159.4L493.1 169.4L493.0 179.5L492.9 189.0L492.9 199.8L492.8 207.9L492.7 217.6L492.6 228.7L492.6 238.0L492.5 248.6L492.4 257.1L492.4 266.5L492.3 277.9L492.2 286.0L492.1 295.8L492.1 305.8L492.0 317.2L491.9 325.5L491.9 336.5L491.8 345.1L491.7 355.8L491.7 364.2L491.6 374.3L491.5 385.4L491.4 394.8L491.4 403.2L491.3 414.0M502.1 82.0L501.8 90.8L501.9 101.6L503.4 112.0L502.7 121.6L502.7 130.8L503.1 140.7L503.0 150.4L501.7 160.8L502.1 169.8L501.3 179.9L502.1 190.3L502.1 198.6L502.2 209.8L501.3 219.7L502.4 228.0L502.6 237.9L501.2 247.5L500.5 256.8L501.4 267.0L501.1 278.4L501.1 286.5L500.6 296.3L500.1 307.5L501.4 317.0L501.8 327.0L501.2 336.6L501.8 346.7L499.8 356.3L500.0 365.5L499.5 375.9L501.2 385.5L500.1 395.3L499.4 404.4L499.6 414.0M510.8 82.0L511.4 92.7L511.0 100.8L512.1 112.0L512.2 121.9L510.6 130.8L510.8 141.5L511.0 150.6L510.1 159.1L510.7 171.0L510.5 179.3L510.0 188.4L510.5 198.5L511.8 209.5L511.3 218.5L510.0 228.3L509.5 237.2L509.6 249.1L509.7 258.2L511.5 266.7L510.3 276.7L511.1 287.8L509.6 296.2L510.3 307.7L510.6 316.3L510.9 325.8L510.0 336.2L508.9 346.7L509.0 356.4L509.9 365.7L508.6 375.8L509.7 385.5L510.2 394.4L509.5 405.0L509.1 414.0M520.6 82.0L520.5 92.4L520.5 100.7L520.4 110.6L520.4 120.1L520.3 129.9L520.2 140.7L520.2 150.2L520.1 160.4L520.0 169.2L520.0 180.2L519.9 188.8L519.9 199.1L519.8 210.0L519.7 219.7L519.7 227.7L519.6 237.5L519.5 247.8L519.5 257.0L519.4 267.6L519.4 277.1L519.3 287.1L519.2 297.6L519.2 306.4L519.1 315.5L519.1 326.5L519.0 336.3L518.9 346.7L518.9 355.8L518.8 366.1L518.7 374.1L518.7 384.0L518.6 394.5L518.6 404.5L518.5 414.0M493.7 82.0L501.8 90.8M510.8 82.0L501.8 90.8M510.8 82.0L520.5 92.4M501.8 90.8L493.6 102.1M501.8 90.8L511.0 100.8M520.5 92.4L511.0 100.8M493.6 102.1L503.4 112.0M511.0 100.8L503.4 112.0M511.0 100.8L520.4 110.6M503.4 112.0L493.4 120.6M503.4 112.0L512.2 121.9M520.4 110.6L512.2 121.9M493.4 120.6L502.7 130.8M512.2 121.9L502.7 130.8M512.2 121.9L520.3 129.9M502.7 130.8L493.3 141.5M502.7 130.8L510.8 141.5M520.3 129.9L510.8 141.5M493.3 141.5L503.0 150.4M510.8 141.5L503.0 150.4M510.8 141.5L520.2 150.2M503.0 150.4L493.1 159.4M503.0 150.4L510.1 159.1M520.2 150.2L510.1 159.1M493.1 159.4L502.1 169.8M510.1 159.1L502.1 169.8M510.1 159.1L520.0 169.2M502.1 169.8L493.0 179.5M502.1 169.8L510.5 179.3M520.0 169.2L510.5 179.3M493.0 179.5L502.1 190.3M510.5 179.3L502.1 190.3M510.5 179.3L519.9 188.8M502.1 190.3L492.9 199.8M502.1 190.3L510.5 198.5M519.9 188.8L510.5 198.5M492.9 199.8L502.2 209.8M510.5 198.5L502.2 209.8M510.5 198.5L519.8 210.0M502.2 209.8L492.7 217.6M502.2 209.8L511.3 218.5M519.8 210.0L511.3 218.5M492.7 217.6L502.4 228.0M511.3 218.5L502.4 228.0M511.3 218.5L519.7 227.7M502.4 228.0L492.6 238.0M502.4 228.0L509.5 237.2M519.7 227.7L509.5 237.2M492.6 238.0L501.2 247.5M509.5 237.2L501.2 247.5M509.5 237.2L519.5 247.8M501.2 247.5L492.4 257.1M501.2 247.5L509.7 258.2M519.5 247.8L509.7 258.2M492.4 257.1L501.4 267.0M509.7 258.2L501.4 267.0M509.7 258.2L519.4 267.6M501.4 267.0L492.3 277.9M501.4 267.0L510.3 276.7M519.4 267.6L510.3 276.7M492.3 277.9L501.1 286.5M510.3 276.7L501.1 286.5M510.3 276.7L519.3 287.1M501.1 286.5L492.1 295.8M501.1 286.5L509.6 296.2M519.3 287.1L509.6 296.2M492.1 295.8L500.1 307.5M509.6 296.2L500.1 307.5M509.6 296.2L519.2 306.4M500.1 307.5L492.0 317.2M500.1 307.5L510.6 316.3M519.2 306.4L510.6 316.3M492.0 317.2L501.8 327.0M510.6 316.3L501.8 327.0M510.6 316.3L519.1 326.5M501.8 327.0L491.9 336.5M501.8 327.0L510.0 336.2M519.1 326.5L510.0 336.2M491.9 336.5L501.8 346.7M510.0 336.2L501.8 346.7M510.0 336.2L518.9 346.7M501.8 346.7L491.7 355.8M501.8 346.7L509.0 356.4M518.9 346.7L509.0 356.4M491.7 355.8L500.0 365.5M509.0 356.4L500.0 365.5M509.0 356.4L518.8 366.1M500.0 365.5L491.6 374.3M500.0 365.5L508.6 375.8M518.8 366.1L508.6 375.8M491.6 374.3L501.2 385.5M508.6 375.8L501.2 385.5M508.6 375.8L518.7 384.0M501.2 385.5L491.4 394.8M501.2 385.5L510.2 394.4M518.7 384.0L510.2 394.4M491.4 394.8L499.4 404.4M510.2 394.4L499.4 404.4M510.2 394.4L518.6 404.5M499.4 404.4L491.3 414.0M499.4 404.4L509.1 414.0M518.6 404.5L509.1 414.0" fill="none" stroke="#3c0909" stroke-width="0.55" shape-rendering="crispEdges"/><clipPath id="cRed"><path d="M493.7 82.0L520.6 82.0L518.5 414.0L491.3 414.0Z"/></clipPath><g clip-path="url(#cRed)"><mask id="mRed"><rect x="480" y="70" width="50" height="360" fill="#000"/><circle cx="514" cy="92" r="18" fill="url(#spot)"/><circle cx="512" cy="404" r="20" fill="url(#spot)"/><circle cx="497" cy="405" r="12" fill="url(#spot)"/></mask><rect x="480" y="70" width="50" height="360" fill="url(#pFine2)" mask="url(#mRed)"/></g><path d="M521.0 88.7L523.0 88.7L520.8 414.0L518.9 414.0Z" fill="#7fd67f"/><path d="M529.5 83.2L539.3 83.2L537.0 415.4L526.5 415.4Z" fill="#e9e5c4"/><path d="M529.5 83.2L539.3 83.2L537.0 415.4L526.5 415.4Z" fill="url(#pCream)"/><path d="M529.5 83.2L539.3 83.2L537.0 415.4L526.5 415.4Z" fill="none" stroke="#15150c" stroke-width="0.7"/><path d="M539.6 88.5L544.4 88.5L541.8 409.0L537.0 409.0Z" fill="#d8cc8e"/><path d="M539.6 88.5L544.4 88.5L541.8 409.0L537.0 409.0Z" fill="url(#pFine)" opacity="0.5"/><path d="M544.6 98.9L553.8 98.9L550.8 399.2L541.9 399.2Z" fill="#1fa3a1"/><path d="M546.2 135.8L544.4 133.9L547.4 134.5L547.2 132.8L547.5 131.1L549.1 133.3L547.4 134.5L548.4 136.5L547.3 138.2L550.6 137.8L553.4 138.9L551.6 319.1L551.0 317.2L551.7 312.4L551.7 305.8L551.8 299.1L542.8 299.1L542.7 305.8L543.5 310.3L546.0 310.5L547.4 312.6L545.7 315.5L547.1 316.5L548.2 318.0L551.0 317.2L550.5 315.0L551.7 312.4L551.6 319.1L553.8 98.9L549.2 98.9L544.6 98.9L548.7 102.6L549.2 98.9M542.9 285.8L543.0 279.1L543.0 272.4L552.0 279.1L551.6 319.1L553.7 105.6L553.8 98.9L548.7 102.6L553.7 105.6L553.7 112.2L552.2 114.1L549.9 115.1L548.0 115.2L548.4 117.8L548.2 119.7L546.7 118.6L548.4 117.8L549.9 115.1L548.7 113.2L548.0 111.1L545.9 114.7L548.0 115.2L548.7 113.2L552.2 114.1L551.0 111.1L548.0 111.1L548.4 107.0L553.7 105.6L550.8 108.5L548.0 111.1L544.6 109.1L548.4 107.0L548.7 102.6L544.5 105.6L544.6 98.9M551.2 359.2L548.3 358.0L546.6 360.6L548.1 361.7L548.8 359.9L546.6 360.6L545.9 357.7L545.0 359.2L546.6 360.6L545.7 362.7L548.1 361.7L548.4 364.2L548.9 367.0L546.2 367.7L544.7 368.5L542.8 369.4L544.4 371.0L544.7 368.5L546.8 369.9L546.2 367.7L543.9 366.5L542.8 369.4L542.1 372.5L544.4 371.0L546.8 369.9L549.3 369.3L548.9 367.0L551.1 365.8L551.6 319.1L553.7 112.2L553.6 118.9L551.6 319.1L553.5 125.6L553.6 118.9L551.3 119.6L553.3 121.5L553.6 118.9L552.6 116.2L552.2 114.1M552.7 205.7L551.6 319.1L553.3 145.6L550.9 146.6L549.2 143.5L547.3 140.8L547.3 138.2L549.6 139.8L550.6 137.8L551.9 134.9L553.5 132.3L553.5 125.6L552.6 127.9L551.0 129.3L551.5 131.7L553.5 132.3L553.4 138.9L553.3 145.6L553.3 152.3L547.9 152.3L544.7 149.2L544.2 145.6L546.0 144.2L549.2 143.5L549.6 139.8L547.3 140.8L546.0 144.2L544.7 141.9L544.2 145.6L544.1 152.3L547.9 152.3L548.4 157.2L553.3 152.3L551.6 319.1L553.2 159.0L553.3 152.3L550.5 150.0L547.9 152.3L547.4 147.7L550.9 146.6L550.5 150.0L553.3 145.6L552.3 142.6L550.9 146.6M546.0 126.3L544.8 127.6L544.4 125.6L544.3 132.3L544.6 130.5L544.8 127.6L546.8 129.5L547.5 131.1L545.9 131.5L544.6 130.5L546.8 129.5L545.9 131.5L547.2 132.8L549.1 133.3L550.9 133.3L553.5 132.3L552.9 137.1L550.6 137.8L548.4 136.5L546.2 135.8L547.4 134.5L549.8 135.3L550.6 137.8L551.9 140.1L553.4 138.9L552.9 137.1L551.9 134.9L550.9 133.3L549.7 130.9L547.5 131.1L549.1 128.8L549.7 130.9L549.1 133.3L549.8 135.3L551.9 134.9M547.8 123.3L546.2 122.6L546.8 121.0L548.2 119.7L550.4 117.6L548.4 117.8L545.1 117.2L548.0 115.2M549.3 369.3L546.2 367.7L547.2 365.9L548.9 367.0L550.3 364.4L550.2 362.1L548.1 361.7M551.3 352.5L551.2 359.2L551.6 319.1L553.1 165.6L548.4 157.2L553.2 159.0L553.1 165.6L553.1 172.3L551.6 319.1L553.0 179.0L553.1 172.3L543.9 172.3L543.9 179.0L543.8 185.7L552.9 192.3L551.6 319.1L552.9 185.7L553.0 179.0L543.9 179.0L552.9 185.7L552.9 192.3L543.8 192.3L543.7 199.0L552.8 199.0L551.6 319.1L552.7 212.3L549.9 214.4L547.8 213.8L544.7 214.8L545.5 213.2L547.8 213.8L546.3 216.9L548.8 218.0L550.2 217.1L549.9 214.4L551.2 215.6L552.7 212.3L549.5 210.7L548.3 208.7L552.1 209.3L552.7 212.3L552.7 205.7L548.3 208.7L543.6 205.7L543.6 212.3L544.7 214.8L546.3 216.9L546.6 218.7L545.4 221.0L543.5 219.0L546.6 218.7L548.8 218.0L548.5 220.8L545.4 221.0L543.5 225.7L543.4 232.4L543.3 239.0L552.3 245.7L551.6 319.1L552.6 219.0L550.2 217.1L551.2 215.6L552.6 219.0L550.8 222.9L548.5 220.8L546.6 218.7L543.6 217.1L544.7 214.8M549.5 126.3L549.1 128.8L551.0 129.3L549.7 130.9L551.5 131.7L550.9 133.3L549.8 135.3L548.4 136.5M542.6 319.1L543.0 317.0L545.7 315.5L548.3 314.3L550.5 315.0L549.2 316.4L551.0 317.2L549.6 319.5L551.6 319.1L552.5 225.7L550.8 222.9L550.9 220.2L548.8 218.0L548.4 215.5L549.9 214.4L549.8 212.6L549.5 210.7L552.1 209.3L552.7 205.7L543.6 205.7L543.7 199.0L552.7 205.7L552.8 199.0L552.9 192.3M545.9 357.7L546.9 355.9L546.7 353.1L549.7 350.0L547.0 347.2L543.1 349.9L545.7 351.2L546.7 353.1L549.2 354.2L549.7 350.0L551.3 345.8L547.0 347.2L545.7 351.2L549.7 350.0L551.3 352.5L551.6 319.1L552.5 232.4L543.4 232.4L552.4 239.0L551.6 319.1L552.3 252.4L543.2 252.4L543.3 245.7L552.3 245.7L552.4 239.0L543.3 239.0L543.3 245.7L552.3 252.4L552.3 245.7M549.5 126.3L551.8 126.3L553.5 125.6L553.3 121.5L551.2 122.6L549.5 123.6L550.8 124.8L551.2 122.6L551.3 119.6L550.4 117.6L553.6 118.9M552.0 279.1L543.0 279.1L551.9 285.8L542.9 285.8L542.9 292.4L551.8 299.1L551.6 319.1L552.1 265.7L543.1 265.7L552.1 272.4L551.6 319.1L552.2 259.1L543.2 259.1L543.2 252.4L552.2 259.1L552.3 252.4M551.2 359.2L551.1 365.8L551.1 372.5L547.8 371.6L546.8 369.9M548.3 208.7L547.0 211.4L549.5 210.7M545.8 393.3L547.4 395.1L545.3 395.4L543.1 397.1L544.9 399.2L547.8 399.2L546.6 396.9L545.3 395.4L543.6 393.1L542.5 390.8L542.0 392.5L543.6 393.1L544.4 391.4L542.5 390.8L542.0 385.9L545.0 387.7L547.8 388.0L545.5 390.0L545.0 387.7L546.3 386.0L547.8 388.0L547.2 390.1L549.8 391.1L550.9 392.5L549.6 397.1L549.5 394.4L548.2 392.7L549.8 391.1L550.6 388.1L547.8 388.0L549.0 389.4L550.6 388.1L550.9 385.9L548.5 385.1L547.8 388.0M544.4 391.4L546.1 391.6L545.5 390.0L547.2 390.1L548.2 392.7L550.9 392.5L549.5 394.4L547.4 395.1L549.6 397.1L550.8 399.2L553.8 98.9M549.2 143.5L547.4 147.7L544.7 149.2L544.1 152.3L548.4 157.2L544.0 165.6L553.1 165.6M542.3 359.2L542.6 361.9L542.2 363.5L542.3 359.2L543.9 357.4L544.0 354.5L546.7 353.1M551.0 111.1L548.7 113.2L545.9 114.7L545.1 117.2L546.7 118.6L546.8 121.0L545.1 120.7L546.7 118.6L544.4 118.9L545.1 117.2L544.5 112.2L548.0 111.1M543.7 364.4L543.9 366.5L544.7 368.5M542.7 305.8L548.0 306.9L542.8 299.1L542.9 292.4L551.9 292.4L551.8 299.1L548.0 306.9L551.7 305.8L551.6 319.1L551.9 292.4L542.9 285.8M550.8 399.2L547.8 399.2L549.6 397.1L546.6 396.9L543.1 397.1L541.9 399.2L544.9 399.2L546.6 396.9L547.4 395.1L548.2 392.7L545.8 393.3L545.3 395.4L542.7 394.7L543.1 397.1M543.7 314.0L543.0 317.0L545.6 318.0L547.1 319.7L548.2 318.0L549.6 319.5L547.1 319.7L549.8 321.7L551.6 319.1L551.5 325.8L549.8 321.7L545.4 320.8L547.1 319.7M552.5 232.4L546.2 224.0L545.4 221.0M550.2 356.4L548.3 358.0L548.8 359.9L551.2 359.2L550.2 356.4L549.2 354.2L551.3 352.5L551.3 345.8L551.4 339.1L551.5 332.5L551.5 325.8L546.4 324.5L551.5 332.5L542.5 332.5L551.4 339.1L546.3 342.3L547.0 347.2L542.4 345.8L543.1 349.9L542.3 352.5L544.0 354.5L545.7 351.2L542.3 352.5L542.3 359.2L542.2 365.8L542.8 369.4M549.8 321.7L546.4 324.5L545.4 320.8L545.6 318.0L545.7 315.5L543.7 314.0L542.7 312.4L542.7 305.8L545.2 307.8L543.5 310.3L545.7 312.5L547.4 312.6L548.3 314.3L547.1 316.5L549.2 316.4L548.2 318.0L545.6 318.0L547.1 316.5M543.8 192.3L543.8 185.7L552.9 185.7M552.5 232.4L552.4 239.0M546.2 135.8L547.3 138.2L544.2 138.9L547.3 140.8L544.7 141.9L544.2 138.9L544.2 145.6L547.4 147.7L546.0 144.2M544.5 105.6L544.6 109.1L544.5 112.2L545.9 114.7M542.1 379.2L544.5 384.9L545.0 387.7L543.3 389.1L542.5 390.8M549.1 128.8L550.5 127.7L552.6 127.9L553.3 129.6L553.5 125.6L552.5 124.2L550.8 124.8L551.8 126.3L552.6 127.9M544.3 137.1L544.4 133.9L547.2 132.8M546.0 124.4L547.7 126.3L549.5 123.6L547.8 123.3L546.8 121.0L549.6 120.7L548.2 119.7M551.4 308.8L548.7 309.2L547.4 312.6L549.4 311.9L551.7 312.4L551.4 308.8L551.7 305.8M547.8 213.8L549.8 212.6L552.7 212.3L552.6 219.0L552.5 225.7L552.5 232.4M549.6 120.7L547.8 123.3L546.0 124.4L546.0 126.3L546.8 129.5L549.1 128.8L547.7 126.3L547.8 123.3M545.7 312.5L545.7 315.5M542.3 359.2L545.0 359.2L543.9 357.4L545.9 357.7L548.3 358.0L546.9 355.9L549.2 354.2M544.5 123.4L546.2 122.6L545.1 120.7L544.5 123.4L546.0 124.4L546.2 122.6M544.4 391.4L545.5 390.0L543.3 389.1L544.4 391.4L545.8 393.3L543.6 393.1L542.7 394.7L541.9 399.2L542.0 392.5L542.0 385.9L542.1 379.2L546.8 378.5L551.0 379.2L551.6 319.1L551.1 372.5L551.0 379.2L550.9 385.9L550.9 392.5L550.8 399.2L551.6 319.1M553.3 129.6L551.5 131.7M551.8 126.3L552.5 124.2L553.3 121.5M547.8 213.8L548.4 215.5L546.3 216.9L543.6 217.1L543.5 219.0L543.5 225.7L546.2 224.0L543.4 232.4M543.7 374.9L546.8 378.5L546.7 383.2L546.3 386.0L548.5 385.1L551.0 379.2L546.7 383.2L548.5 385.1L550.6 388.1L550.9 392.5M549.5 126.3L550.8 124.8M543.6 212.3L543.6 217.1M543.7 364.4L542.2 363.5L542.2 365.8L543.9 366.5L546.2 364.4L548.4 364.2L547.2 365.9L546.2 364.4L545.7 362.7L548.4 364.2L550.3 364.4L551.1 365.8L550.2 362.1L548.8 359.9M542.1 372.5L542.2 365.8L543.7 364.4L546.2 364.4M549.0 389.4L549.8 391.1M544.1 159.0L548.4 157.2M551.9 140.1L549.6 139.8L552.3 142.6L553.4 138.9M552.1 272.4L552.0 279.1L551.9 285.8L551.9 292.4M548.2 392.7L546.1 391.6L547.2 390.1L549.0 389.4M542.3 359.2L542.9 356.0L542.3 352.5L542.4 345.8L546.3 342.3L551.3 345.8M542.6 325.8L542.6 319.1L545.4 320.8L542.6 325.8L542.5 332.5L542.4 339.1L542.4 345.8M549.6 120.7L550.4 117.6L549.9 115.1L552.6 116.2L553.7 112.2L553.6 108.8L553.7 105.6M542.6 319.1L542.7 312.4L543.5 310.3M546.9 374.5L550.7 375.6L546.8 378.5L546.9 374.5L551.1 372.5L549.3 369.3L551.0 368.0L551.1 372.5L550.7 375.6L551.0 379.2M546.9 374.5L547.8 371.6L544.4 371.0L546.9 374.5L543.7 374.9L544.4 371.0M548.4 107.0L550.8 108.5L553.6 108.8L551.0 111.1L553.7 112.2M547.8 213.8L547.0 211.4L545.5 213.2L543.6 212.3L543.5 219.0M551.2 122.6L552.5 124.2M542.4 339.1L546.3 342.3M542.6 319.1L545.6 318.0M543.9 357.4L546.9 355.9L544.0 354.5L542.9 356.0L543.9 357.4M543.0 272.4L543.1 265.7L543.2 259.1L552.1 265.7L552.2 259.1M551.2 359.2L550.2 362.1L548.4 364.2M546.7 383.2L544.5 384.9L546.3 386.0M549.8 321.7L549.6 319.5M546.8 129.5L547.7 126.3L546.0 126.3L544.4 125.6L544.6 130.5M553.0 179.0L543.9 172.3L544.0 165.6L553.1 172.3M543.6 212.3L545.0 209.0L548.3 208.7M542.6 325.8L546.4 324.5L542.5 332.5M544.3 132.3L544.4 133.9L545.9 131.5L544.3 132.3L544.2 138.9L544.3 137.1L547.3 138.2M550.8 108.5L551.0 111.1M542.3 359.2L543.6 360.4L546.6 360.6M551.4 308.8L548.0 306.9L545.2 307.8L546.0 310.5L548.7 309.2L548.0 306.9M548.5 220.8L550.9 220.2L550.2 217.1L548.4 215.5M550.8 222.9L546.2 224.0L548.5 220.8M551.4 339.1L542.4 339.1M551.0 129.3L553.3 129.6L553.5 132.3M549.5 126.3L550.5 127.7L551.0 129.3M550.2 356.4L546.9 355.9M543.6 212.3L547.0 211.4L545.0 209.0L543.6 205.7M549.6 120.7L551.2 122.6M542.7 312.4L543.0 317.0M544.4 125.6L546.0 124.4M551.8 126.3L550.5 127.7M549.3 369.3L547.8 371.6M543.7 364.4L545.7 362.7L542.6 361.9L543.7 364.4M543.9 366.5L547.2 365.9M552.6 219.0L550.9 220.2M543.6 360.4L545.0 359.2M549.5 126.3L547.7 126.3M542.7 312.4L545.7 312.5L546.0 310.5M548.3 314.3L549.4 311.9L550.5 315.0M551.3 352.5L550.2 356.4M546.2 135.8L544.3 137.1L544.3 132.3M552.1 272.4L543.0 272.4M543.6 360.4L545.7 362.7M551.4 308.8L549.4 311.9L548.7 309.2L545.2 307.8M544.0 165.6L544.1 159.0L544.1 152.3M544.4 125.6L544.5 123.4L544.4 118.9L545.1 120.7M551.1 365.8L551.0 368.0L548.9 367.0M544.5 105.6L548.4 107.0M542.1 379.2L546.7 383.2M542.1 379.2L543.7 374.9L542.1 372.5L542.1 379.2M549.2 143.5L552.3 142.6L551.9 140.1M543.6 360.4L542.6 361.9M542.0 385.9L544.5 384.9M549.5 126.3L549.5 123.6L549.6 120.7L551.3 119.6M552.6 116.2L550.4 117.6M544.4 125.6L544.4 118.9L544.5 112.2L544.5 105.6M552.5 225.7L546.2 224.0M543.7 314.0L545.7 312.5M545.8 393.3L546.1 391.6M549.8 212.6L547.0 211.4M552.1 265.7L552.1 272.4M542.0 392.5L542.7 394.7M548.3 314.3L549.2 316.4M542.0 385.9L543.3 389.1M550.5 150.0L547.4 147.7M552.8 199.0L543.8 192.3" fill="none" stroke="#04191a" stroke-width="0.5" shape-rendering="crispEdges"/><path d="M553.6 98.9L556.8 98.9L553.8 399.2L550.6 399.2Z" fill="#cdbf80"/><path d="M553.6 98.9L556.8 98.9L553.8 399.2L550.6 399.2Z" fill="url(#pFine2)" opacity="0.45"/><path d="M556.7 98.9L574.2 98.9L571.8 399.2L553.7 399.2Z" fill="#d477da"/><clipPath id="cVio"><path d="M556.7 98.9L574.2 98.9L571.8 399.2L553.7 399.2Z"/></clipPath><g clip-path="url(#cVio)"><path d="M555.4 347.7L557.8 347.2L559.8 348.2L561.7 346.4L561.0 344.1L559.2 342.8L557.4 340.1L554.9 340.1L554.2 345.3L554.3 350.5L556.8 352.6L557.2 354.7L559.2 356.5L561.7 356.2L563.4 359.1L565.7 359.1L567.5 361.4L569.7 359.4L572.1 360.7L572.0 356.1L572.2 353.0L572.2 345.3L568.8 344.1L570.5 341.0L572.3 337.6L572.4 329.9L569.3 333.6L567.8 330.5L572.4 329.9L572.4 322.2L572.5 314.5L566.8 315.2L572.4 322.2L566.5 321.7L567.3 327.0L572.4 329.9L572.1 334.8L569.3 333.6L564.5 331.8L563.9 335.0L561.1 334.9L558.4 333.1L561.3 331.7L561.1 334.9L560.3 338.1L557.4 340.1L556.0 342.3L554.9 340.1L554.3 337.6L554.4 329.9L554.5 322.2L554.5 314.5L561.2 310.5L554.6 306.8L564.8 302.5L572.6 299.1L572.7 291.4L572.7 283.7L561.9 278.9L564.8 271.3L554.9 276.0L561.9 278.9L554.9 283.7L554.8 291.4L562.7 294.1L572.7 291.4L565.1 285.3L572.7 283.7L572.8 276.0L561.9 278.9L565.1 285.3L554.8 291.4L554.7 299.1L564.8 302.5L572.5 306.8L566.9 309.1L572.5 314.5L572.5 306.8L572.6 299.1L562.7 294.1L554.7 299.1L554.6 306.8L554.5 314.5L559.9 317.8L554.5 322.2L557.7 325.8L554.4 329.9L554.9 332.9L558.4 333.1L558.0 330.1L554.4 329.9M555.2 245.2L566.2 241.4L562.3 250.3L555.2 252.9L555.1 260.6L555.0 268.3L561.5 265.0L564.8 271.3L555.0 268.3L554.9 276.0L554.9 283.7L565.1 285.3L562.7 294.1L564.8 302.5L561.2 310.5L566.8 315.2L566.9 309.1L561.2 310.5L559.9 317.8L566.8 315.2L566.5 321.7L561.8 323.8L554.5 322.2M569.2 366.7L569.8 370.5L568.6 373.1L568.9 375.9L570.6 373.8L568.6 373.1L566.2 374.6L568.9 375.9L572.0 376.1L570.6 373.8L569.8 370.5L572.0 368.4L569.2 366.7L567.7 363.6L565.5 364.6L563.6 363.7L560.9 363.8L558.0 363.9L558.8 360.3L560.9 363.8L562.2 361.4L563.6 363.7L564.5 361.4L565.7 359.1L567.7 358.1L569.7 359.4L571.8 358.2L572.0 356.1L570.3 354.4L566.4 353.4L562.9 352.9L560.9 352.0L556.8 352.6L559.4 350.3L559.8 348.2L558.4 345.0L561.0 344.1L563.2 344.1L561.7 346.4L558.4 345.0L559.2 342.8L556.0 342.3L558.4 345.0L554.2 345.3L555.4 347.7L554.3 350.5L557.1 350.1L556.8 352.6L554.2 353.0L554.3 350.5M574.1 106.6L573.9 110.2L572.9 108.2L574.1 106.6L574.2 98.9L573.7 100.8L570.8 101.3L569.8 98.9L567.6 98.9L565.9 101.7L565.5 98.9L563.3 98.9L561.5 100.8L558.9 98.9L556.7 98.9L556.6 106.6L556.8 100.9L556.7 98.9M568.1 116.0L570.3 115.3L572.2 115.1L574.1 114.3L573.9 110.2L571.6 110.8L568.7 111.3L568.1 113.6L570.7 112.6L568.7 111.3L566.6 109.1L569.8 108.8L568.7 111.3L566.6 111.5L568.1 113.6L568.1 116.0L566.4 117.2L564.3 114.9L562.1 112.4L558.7 114.1L557.1 116.2L558.7 117.4L561.8 117.0L564.3 114.9L564.2 118.8L561.1 118.9L561.8 117.0L564.2 118.8L566.4 119.4L564.7 121.6L564.2 118.8L566.4 117.2L566.4 119.4L568.4 120.5L570.3 119.4L573.0 120.1L574.0 122.0L573.1 125.3L572.6 127.6L571.5 130.2L572.2 132.9L568.9 134.4L566.4 136.9L562.9 137.2L564.3 139.1L564.1 141.3L562.0 142.9L559.2 145.4L562.5 145.2L564.1 147.1L565.1 143.5L564.1 141.3L561.6 139.9L562.0 142.9L562.5 145.2L565.1 143.5L568.2 144.8L569.4 146.8L570.3 148.7L571.5 150.5L573.6 149.2L570.3 148.7L573.0 147.0L569.4 146.8L566.0 147.8L564.1 147.1L564.6 150.3L562.2 151.8L561.1 148.7L559.2 145.4L558.8 147.8L558.1 151.4L559.0 154.1L560.0 156.5L557.0 158.1L559.4 159.3L560.0 156.5L561.4 159.2L559.4 159.3L562.5 161.7L565.4 163.3L567.4 161.5L569.7 163.0L571.0 164.7L573.6 165.9L573.7 160.5L573.5 157.3L571.2 157.9L568.8 156.3L567.0 153.9L563.8 153.5L562.2 151.8L560.2 152.2L558.1 151.4L561.1 148.7L564.1 147.1L566.2 145.6L568.2 144.8L568.9 142.7L565.1 143.5L562.0 142.9L559.3 142.9L559.2 145.4L556.6 147.2L558.8 147.8L561.1 148.7L562.5 145.2M564.2 111.1L566.6 109.1L566.5 105.2L562.9 104.4L560.5 102.6L561.5 100.8L561.1 98.9L563.3 98.9L563.9 102.3L562.9 104.4L562.0 106.3L563.6 108.6L564.4 106.3L562.9 104.4L560.2 104.7L560.5 102.6L557.7 104.5L556.8 100.9L558.9 98.9L561.1 98.9M560.9 167.7L560.0 164.7L558.0 163.6L556.3 164.9L558.4 166.2L558.0 163.6L558.3 161.5L561.8 163.7L563.8 164.8L565.4 163.3L565.0 160.5L567.4 161.5L566.4 158.2L568.8 156.3L568.8 152.7L567.0 153.9L565.2 155.5L568.8 156.3L570.9 155.7L573.5 157.3L573.8 152.8L571.5 150.5L568.7 150.5L569.4 146.8L571.7 144.6L568.2 144.8M561.8 117.0L560.2 115.8L558.7 114.1L559.9 111.7L562.1 112.4L562.3 114.9L558.7 114.1L556.5 114.3L557.1 116.2L560.2 115.8L558.7 117.4L556.7 118.5L557.1 116.2M569.4 336.3L572.1 334.8L572.3 337.6L572.2 345.3L571.6 347.4L568.8 344.1L568.8 347.6L570.4 349.3L572.2 353.0L572.1 360.7L572.0 368.4L572.0 376.1L571.9 383.8L571.9 391.5L571.8 399.2L569.5 399.2L567.3 399.2L565.0 399.2L562.8 399.2L564.9 396.1L561.4 395.7L557.6 394.5L558.2 391.5L556.0 391.4L554.6 389.3L553.8 391.5L555.5 396.5L557.6 394.5L555.4 393.4L555.5 396.5L558.3 397.2L561.4 395.7L562.9 393.2L564.9 396.1L567.5 394.8L569.5 396.3L571.8 399.2L571.2 395.2L569.5 396.3L569.5 399.2L567.4 397.2L564.9 396.1L565.0 399.2L567.4 397.2L569.5 396.3L569.9 393.4L567.5 394.8L564.9 393.4L564.9 396.1M556.2 152.8L558.1 151.4L556.4 149.3L556.6 147.2L556.2 145.1L556.3 137.4L557.8 140.4L556.6 142.7L556.2 145.1L559.2 145.4M573.5 155.1L571.6 153.8L571.5 150.5L568.8 152.7L568.7 150.5L570.3 148.7M572.0 376.1L569.1 379.0L568.9 375.9L566.9 377.2L566.2 379.8L564.3 378.3L562.9 376.5L563.0 374.1L559.4 374.1L557.9 375.5L558.6 377.7L557.0 379.4L554.2 378.8L555.0 381.6L557.0 379.4L557.9 381.5L559.7 382.8L562.8 385.2L563.9 388.0L564.6 390.1L567.9 389.2L567.8 387.1L570.2 389.2L567.9 389.2L565.6 386.7L563.9 388.0L561.9 387.4L562.8 385.2L560.9 385.6L559.7 382.8L557.4 385.7L557.0 389.2L554.6 389.3L554.7 387.0L557.0 389.2L556.0 391.4L555.4 393.4L558.2 391.5L557.0 389.2L559.6 387.6L560.9 385.6L557.4 385.7L559.6 387.6L561.9 387.4L560.9 385.6M561.3 331.7L563.9 335.0L564.7 338.7L564.1 342.1L563.2 344.1L565.9 344.8L568.8 344.1L567.0 342.0L564.1 342.1L565.9 344.8L568.8 347.6L571.6 347.4L572.2 353.0L570.3 354.4L569.1 352.6L566.4 353.4L563.6 355.1L562.9 352.9L562.3 350.5L559.8 348.2L557.1 350.1L555.4 347.7M573.8 145.1L573.9 139.8L570.0 140.6L572.4 141.7L573.8 145.1L573.0 147.0L573.6 149.2L573.8 145.1L573.9 137.4L573.2 134.9L572.2 132.9L573.9 131.8L571.5 130.2L574.0 129.7L573.1 125.3L570.6 124.5L568.6 127.5L569.4 130.8L572.2 132.9L571.0 135.1L568.9 134.4L567.4 133.0L565.0 132.1L565.9 130.0L569.4 130.8L568.9 134.4L565.8 134.2L565.0 132.1L563.5 134.2L562.9 137.2L561.6 139.9L557.8 140.4L560.9 137.6L562.9 137.2L561.0 133.8L563.5 134.2L566.4 136.9L568.3 139.3L570.0 140.6L568.9 142.7L572.4 141.7L573.9 139.8L573.9 137.4L574.0 129.7L572.6 127.6L570.6 124.5L568.3 124.0L566.6 125.1L568.6 127.5L565.9 130.0L567.4 133.0L565.8 134.2L566.4 136.9L564.3 139.1L568.3 139.3L568.9 142.7L571.7 144.6L572.4 141.7M561.8 117.0L562.3 114.9L564.3 114.9L566.2 114.7L568.1 113.6L570.3 115.3L570.7 112.6L572.2 115.1L571.5 117.7L573.0 120.1L574.0 117.1L572.2 115.1L573.1 112.0L573.9 110.2M555.2 252.9L555.2 245.2L562.3 250.3L564.3 257.9L555.1 260.6L561.5 265.0L564.3 257.9L555.2 252.9M565.6 386.7L564.6 390.1L562.9 393.2L564.9 393.4L564.6 390.1L561.9 391.3L563.9 388.0M557.4 340.1L557.0 336.2L554.9 332.9L558.0 330.1L561.3 331.7L563.1 328.7L567.3 327.0L567.8 330.5L563.1 328.7L557.7 325.8L558.0 330.1L563.1 328.7L564.5 331.8L561.3 331.7M561.5 100.8L558.8 101.7L556.8 100.9M566.4 353.4L565.3 351.3L562.9 352.9L560.2 354.3L556.8 352.6M570.6 122.3L570.6 124.5L570.6 127.9L572.6 127.6M569.4 130.8L567.4 133.0M571.9 383.8L571.9 378.8L569.1 379.0L566.2 379.8L563.8 380.7L564.3 378.3L561.6 378.4L562.9 376.5L566.2 374.6L563.0 374.1L564.1 372.3L564.0 369.5L560.3 371.7L563.0 374.1L560.7 376.4L559.4 374.1L556.5 371.8L556.7 369.3L559.0 367.9L559.6 365.9L558.0 363.9L556.2 367.2L556.7 369.3L558.6 370.1L556.5 371.8L557.9 375.5L555.9 377.4L554.2 378.8L553.9 383.8L555.0 381.6L557.9 381.5L556.4 383.5L559.7 382.8L561.3 380.6L563.8 380.7L561.6 378.4L558.6 377.7L555.9 377.4L557.0 379.4L559.3 379.8L559.7 382.8L563.4 382.8L565.8 384.0L562.8 385.2L563.4 382.8L563.8 380.7L565.8 384.0L567.8 387.1L565.6 386.7L562.8 385.2M555.9 183.6L563.1 182.4L563.5 186.3L569.3 189.2L565.8 195.7L563.9 200.5L565.6 206.7L555.6 206.7L563.9 200.5L560.6 192.0L563.5 186.3L555.9 183.6L560.6 192.0L569.3 189.2L573.5 183.6L572.7 179.3L569.2 176.6L566.3 173.6L563.3 172.9L560.4 174.1L562.6 176.5L563.3 172.9L565.9 170.5L569.9 168.9L573.6 168.2L573.7 160.5L571.2 157.9L568.3 159.1L567.4 161.5L570.0 160.3L571.2 157.9L570.9 155.7L568.8 152.7L571.6 153.8L573.8 152.8L573.8 145.1L571.7 144.6L573.0 147.0M563.2 128.9L561.8 125.9L561.0 129.4L559.8 125.8L556.9 126.8L557.2 124.6L558.4 122.4L559.8 125.8L561.8 125.9L562.7 123.8L564.7 121.6L566.7 121.6L566.6 125.1L564.7 124.0L564.7 121.6L562.7 121.4L564.2 118.8M557.7 109.6L560.2 107.0L557.7 104.5L558.8 101.7L558.9 98.9M558.6 370.1L560.9 368.9L564.0 369.5L567.1 369.0L569.2 366.7L571.3 366.3L570.7 362.7L569.7 359.4L570.0 357.1L572.0 356.1M573.3 206.7L573.3 214.4L573.2 222.1L573.2 229.8L573.1 237.5L566.2 241.4L555.3 237.5L555.2 245.2M563.4 166.8L566.9 167.7L569.9 168.9L572.1 170.7L573.6 168.2L573.6 175.9L572.7 179.3L568.0 181.0L563.1 182.4L562.6 176.5L566.3 173.6L565.9 170.5L563.4 166.8L563.8 164.8L566.2 165.4L565.4 163.3L567.8 164.1L569.7 163.0L570.0 160.3L573.7 160.5L573.8 152.8L573.6 149.2M560.5 399.2L561.4 395.7L562.8 399.2L560.5 399.2L558.3 397.2L557.6 394.5L560.2 393.4L561.4 395.7M568.4 120.5L566.7 121.6L566.4 119.4L568.6 118.3L570.3 119.4L571.5 117.7L574.0 117.1L574.1 114.3L574.1 106.6L572.7 105.1L572.9 108.2L571.6 110.8L570.7 112.6L573.1 112.0L574.1 114.3L574.0 122.0L574.0 129.7L573.9 131.8L573.2 134.9L571.0 135.1L573.9 137.4L573.9 131.8M553.7 399.2L553.8 391.5L556.0 391.4M556.2 367.2L555.8 363.2L558.0 363.9L556.2 360.9L555.7 357.8L557.2 354.7L554.9 355.8L555.7 357.8L557.9 358.2L559.2 356.5L560.2 354.3L561.7 356.2L563.6 355.1L563.4 359.1L562.2 361.4L564.5 361.4L567.7 363.6L567.5 361.4L567.7 358.1L570.0 357.1L570.3 354.4L566.4 356.3L565.7 359.1M562.3 350.5L559.4 350.3L560.9 352.0L562.3 350.5L562.5 348.3L559.8 348.2M556.1 160.5L558.3 161.5L559.4 159.3L556.1 160.5L558.0 163.6M572.9 108.2L569.8 108.8L571.6 110.8L573.1 112.0M573.3 206.7L565.6 206.7L573.4 199.0L563.9 200.5L555.7 199.0L555.6 206.7L555.5 214.4L563.2 213.1L565.6 206.7L573.3 214.4L563.2 213.1L555.5 222.1L563.0 225.6L555.4 229.8L555.5 222.1L555.5 214.4M563.3 172.9L562.0 170.2L560.4 174.1L555.9 175.9L555.9 183.6L555.8 191.3L555.7 199.0L560.6 192.0L565.8 195.7L573.5 191.3L573.5 183.6L573.6 175.9L569.2 176.6L568.0 181.0L573.5 183.6L567.9 185.1L563.5 186.3M560.2 354.3L563.6 355.1L566.4 356.3L566.4 353.4L567.8 350.6L570.4 349.3L571.6 347.4M572.7 105.1L569.2 104.0L567.3 103.1L565.9 101.7L568.6 100.8L567.6 98.9L565.5 98.9L563.9 102.3L561.5 100.8M573.1 125.3L570.6 122.3L573.0 120.1M562.5 161.7L563.8 164.8M554.8 374.0L554.5 371.2L556.7 369.3L554.0 368.4L556.2 367.2L554.1 364.5L555.8 363.2L554.1 360.7L555.7 357.8M562.7 121.4L561.1 118.9L558.7 117.4L558.2 119.8L556.7 118.5L556.5 122.0L556.9 126.8L556.4 129.7L556.4 132.2L559.6 132.0L561.0 129.4L563.2 128.9L565.0 132.1L561.6 131.6L561.0 129.4L559.0 129.1L556.9 126.8M555.3 237.5L562.0 234.3L566.2 241.4L573.0 245.2L573.1 237.5L562.0 234.3L555.4 229.8L555.3 237.5M560.9 352.0L560.2 354.3L557.2 354.7L557.9 358.2L558.8 360.3L562.2 361.4L560.7 359.0L559.2 356.5M565.9 347.0L562.5 348.3L561.7 346.4L565.9 347.0L563.2 344.1L562.1 341.1L561.0 344.1M554.1 360.7L554.1 364.5L554.0 368.4L554.5 371.2L556.5 371.8L560.3 371.7L559.4 374.1M556.0 168.2L558.4 166.2L560.9 167.7L563.4 166.8L561.8 163.7L562.5 161.7L565.0 160.5L566.4 158.2L563.5 159.1L565.0 160.5M566.0 147.8L566.7 151.2L567.0 153.9M563.3 366.1L560.9 368.9L560.3 371.7L564.1 372.3L566.2 374.6L564.3 378.3L566.9 377.2L569.1 379.0L567.5 381.3L566.2 379.8M563.4 166.8L566.2 165.4L566.9 167.7L565.9 170.5L562.0 170.2L560.9 167.7L558.5 168.7L556.0 168.2L556.3 164.9L556.1 160.5L557.0 158.1L556.2 152.8L559.0 154.1L560.2 152.2L561.1 148.7L564.6 150.3L566.0 147.8L568.7 150.5L566.7 151.2L564.6 150.3L563.8 153.5L565.2 155.5L566.4 158.2L568.3 159.1L568.8 156.3M561.4 109.7L560.2 107.0L562.0 106.3L560.2 104.7L557.7 104.5L556.6 106.6L560.2 107.0L560.2 104.7M563.4 359.1L560.7 359.0L561.7 356.2M573.0 252.9L572.9 260.6L561.5 265.0L572.8 268.3L564.8 271.3L572.8 276.0L572.8 268.3L572.9 260.6L564.3 257.9L573.0 252.9L573.0 245.2L562.3 250.3L573.0 252.9M562.5 161.7L558.3 161.5L560.0 164.7L561.8 163.7M559.0 129.1L559.8 125.8L557.2 124.6L556.5 122.0L556.4 129.7L559.6 132.0L558.3 133.8L556.4 132.2L556.3 137.4L556.6 142.7L559.3 142.9L557.8 140.4L558.8 137.1L558.3 133.8L556.3 137.4L556.4 129.7L559.0 129.1L559.6 132.0L561.6 131.6L563.5 134.2L565.8 134.2M556.2 145.1L559.3 142.9L561.6 139.9L564.3 139.1L566.3 141.2L564.1 141.3M554.2 353.0L554.2 345.3L556.0 342.3M574.0 122.0L574.0 117.1M561.4 109.7L564.2 111.1L562.1 112.4L561.4 109.7L559.9 111.7L557.7 109.6L561.4 109.7L562.0 106.3L564.4 106.3L566.5 105.2L567.3 103.1L568.6 100.8L569.8 98.9L572.0 98.9L574.2 98.9L573.5 102.8L574.1 106.6M562.3 114.9L560.2 115.8M571.9 383.8L570.8 386.4L567.8 387.1L568.7 384.1L571.9 383.8L570.0 381.9L569.1 379.0M554.2 345.3L554.3 337.6L557.4 340.1L562.1 341.1L559.2 342.8M571.0 164.7L569.4 166.4L569.9 168.9L569.7 172.7L566.3 173.6L565.9 176.9L563.1 182.4L567.9 185.1L569.3 189.2L573.5 191.3L573.4 199.0L565.8 195.7M570.0 357.1L566.4 356.3L563.4 359.1L564.5 361.4L565.5 364.6L563.3 366.1L560.9 363.8L559.6 365.9L563.3 366.1L564.0 369.5L566.2 372.0L568.6 373.1M566.2 374.6L566.9 377.2M557.5 156.0L560.0 156.5L561.8 154.0L559.0 154.1L557.5 156.0L557.0 158.1M562.5 161.7L561.4 159.2L563.5 159.1L562.5 161.7M562.8 156.2L565.2 155.5L563.5 159.1L562.8 156.2L563.8 153.5L561.8 154.0L562.2 151.8M554.1 360.7L554.9 355.8L554.2 353.0L557.2 354.7M564.7 124.0L566.7 121.6L568.3 124.0L568.6 127.5L566.3 127.4L566.6 125.1L564.5 126.4L561.8 125.9L560.9 122.7L559.8 125.8M559.9 111.7L556.6 111.2L558.7 114.1M566.5 321.7L559.9 317.8L561.8 323.8L567.3 327.0L572.2 325.9L572.4 329.9M569.8 108.8L568.7 106.8L569.2 104.0L568.6 100.8L570.8 101.3L572.0 98.9L573.7 100.8L573.5 102.8L572.7 105.1L570.8 106.7L572.9 108.2M563.2 128.9L565.9 130.0L566.3 127.4L563.2 128.9L561.6 131.6L561.0 133.8L558.3 133.8M561.6 139.9L560.9 137.6L561.0 133.8L559.6 132.0M562.0 170.2L558.5 168.7L558.4 166.2L560.0 164.7L563.4 166.8L562.0 170.2L557.0 171.1L560.4 174.1L560.0 179.3L563.1 182.4M560.3 338.1L562.1 341.1L564.1 342.1M565.9 347.0L567.8 350.6L568.8 347.6L565.9 347.0L565.9 344.8L567.0 342.0L570.5 341.0L569.9 338.8L572.3 337.6L569.4 336.3L569.3 333.6L566.6 335.5L563.9 335.0L560.3 338.1L564.7 338.7L567.0 338.4L569.9 338.8L567.0 342.0L567.0 338.4L569.4 336.3L569.9 338.8M566.5 105.2L568.7 106.8L570.8 106.7L569.2 104.0L566.5 105.2L565.9 101.7L563.9 102.3L560.5 102.6L558.8 101.7M568.6 118.3L570.3 115.3L571.5 117.7L568.6 118.3L566.4 117.2L566.2 114.7L568.1 116.0L568.6 118.3L568.4 120.5L568.3 124.0L570.6 122.3L570.3 119.4M555.8 191.3L560.6 192.0M564.5 331.8L566.6 335.5L567.0 338.4M566.6 366.6L563.3 366.1L563.6 363.7M571.0 135.1L569.0 136.5L568.9 134.4M573.5 155.1L573.5 157.3M570.0 381.9L567.5 381.3L563.8 380.7M556.0 399.2L555.5 396.5L553.7 399.2L556.0 399.2L558.3 397.2L558.2 399.2L556.0 399.2M558.4 122.4L560.0 120.7L562.7 121.4L562.7 123.8L560.9 122.7L558.4 122.4L558.2 119.8L556.5 122.0L558.4 122.4M570.8 101.3L569.2 104.0M557.9 381.5L559.3 379.8L558.6 377.7L560.7 376.4L562.9 376.5M566.2 372.0L569.8 370.5L567.1 369.0L566.2 372.0L564.1 372.3M566.5 105.2L563.9 102.3M565.9 176.9L568.0 181.0L567.9 185.1M571.9 391.5L570.2 389.2L569.7 391.2L567.9 389.2L566.6 391.6L567.5 394.8L567.4 397.2L567.3 399.2M570.7 362.7L569.2 366.7L566.6 366.6L564.0 369.5M555.9 175.9L557.0 171.1L556.0 168.2L555.9 175.9L560.0 179.3L562.6 176.5L565.9 176.9L569.2 176.6L569.7 172.7L565.9 170.5M567.8 164.1L567.4 161.5M563.2 128.9L564.5 126.4L562.7 123.8L564.7 124.0L564.5 126.4L566.3 127.4M569.4 146.8L566.2 145.6L565.1 143.5L566.3 141.2L568.3 139.3L569.0 136.5L566.4 136.9M553.8 391.5L555.4 393.4M570.9 138.1L569.0 136.5M572.0 368.4L571.9 371.0L569.8 370.5M563.0 225.6L562.0 234.3L573.2 229.8L563.0 225.6L563.2 213.1L555.6 206.7M557.4 385.7L554.7 387.0L556.4 383.5L555.0 381.6M554.3 337.6L557.0 336.2L558.4 333.1M559.6 365.9L560.9 368.9L559.0 367.9L556.2 367.2L559.6 365.9M568.3 159.1L570.0 160.3L571.9 162.8L569.7 163.0M572.1 360.7L571.3 366.3L572.0 368.4M559.3 379.8L561.3 380.6L561.6 378.4L560.7 376.4L557.9 375.5L554.8 374.0L556.5 371.8M560.2 393.4L560.0 390.4L558.2 391.5L560.2 393.4L562.9 393.2L561.9 391.3L561.9 387.4L560.0 390.4L557.0 389.2M566.6 335.5L569.4 336.3M566.6 335.5L564.7 338.7L562.1 341.1M558.6 370.1L560.3 371.7M571.9 162.8L573.6 165.9L573.6 168.2L569.4 166.4L566.2 165.4L567.8 164.1L571.0 164.7L571.9 162.8L573.7 160.5M557.4 385.7L556.4 383.5L553.9 383.8L554.7 387.0L553.8 391.5L553.9 383.8L553.9 376.1L554.2 378.8M556.0 168.2L556.1 160.5L556.2 152.8L556.4 149.3L556.2 145.1L556.2 152.8L557.5 156.0M559.3 379.8L561.6 378.4M566.6 366.6L567.1 369.0M557.7 325.8L561.8 323.8L563.1 328.7M560.0 120.7L558.2 119.8L561.1 118.9L560.0 120.7L560.9 122.7L562.7 121.4M564.4 106.3L566.6 109.1L563.6 108.6L561.4 109.7M571.9 391.5L570.8 386.4L570.2 389.2M570.7 362.7L567.7 363.6L566.6 366.6L565.5 364.6M570.9 138.1L571.0 135.1M568.7 384.1L570.8 386.4M566.6 391.6L569.7 391.2L571.9 391.5L571.2 395.2L569.9 393.4L571.9 391.5M572.1 360.7L570.7 362.7L567.5 361.4L564.5 361.4M572.1 360.7L571.8 358.2L570.0 357.1M557.9 358.2L556.2 360.9L554.1 360.7L554.0 368.4L553.9 376.1L554.5 371.2M560.9 137.6L558.8 137.1L556.3 137.4M566.6 111.5L566.6 109.1L568.7 106.8M570.8 101.3L573.5 102.8M569.9 393.4L566.6 391.6L564.6 390.1M556.2 360.9L558.8 360.3L560.7 359.0L557.9 358.2M569.4 130.8L570.6 127.9L571.5 130.2L569.4 130.8M556.5 122.0L556.5 114.3L556.7 118.5M568.6 127.5L570.6 127.9M560.3 338.1L557.0 336.2L561.1 334.9M561.9 391.3L560.2 393.4M572.4 322.2L572.2 325.9L566.5 321.7M572.0 376.1L571.9 371.0L570.6 373.8M566.6 111.5L566.2 114.7L564.2 111.1L564.3 114.9M564.5 331.8L567.8 330.5M557.7 109.6L556.6 111.2L556.5 114.3L556.6 106.6L557.7 109.6M569.7 172.7L572.1 170.7L573.6 175.9L569.7 172.7M558.8 137.1L561.0 133.8M562.5 348.3L565.3 351.3L567.8 350.6L569.1 352.6L572.2 353.0M558.6 370.1L559.0 367.9M556.4 149.3L558.8 147.8M570.9 138.1L573.9 139.8M554.1 360.7L554.2 353.0M573.9 137.4L570.9 138.1L570.0 140.6M562.3 350.5L565.3 351.3L565.9 347.0M572.2 345.3L572.2 342.3L570.5 341.0M561.3 380.6L563.4 382.8M559.6 387.6L560.0 390.4L561.9 391.3M558.4 345.0L557.8 347.2L557.1 350.1L559.4 350.3M566.3 141.2L568.9 142.7M554.3 337.6L554.9 332.9M570.9 155.7L571.6 153.8M573.5 155.1L570.9 155.7M562.8 156.2L560.0 156.5M570.0 381.9L571.9 378.8L572.0 376.1M573.4 199.0L573.3 206.7M564.8 302.5L566.9 309.1M568.7 384.1L565.8 384.0L565.6 386.7M556.6 106.6L556.6 111.2M555.9 183.6L560.0 179.3M570.8 106.7L569.8 108.8M566.7 151.2L563.8 153.5M572.3 337.6L572.2 342.3L568.8 344.1M569.4 166.4L573.6 165.9M567.5 381.3L565.8 384.0M566.6 111.5L564.2 111.1L563.6 108.6M562.8 156.2L561.8 154.0L560.2 152.2M566.6 391.6L564.9 393.4M569.4 166.4L567.8 164.1M568.4 120.5L570.6 122.3L574.0 122.0M573.2 222.1L563.0 225.6M569.1 352.6L570.4 349.3M569.4 166.4L566.9 167.7M568.8 152.7L566.7 151.2M553.9 376.1L554.8 374.0L555.9 377.4L553.9 376.1M562.8 156.2L561.4 159.2M557.0 171.1L558.5 168.7M564.7 338.7L567.0 342.0M573.8 152.8L573.5 155.1M568.7 384.1L567.5 381.3M554.2 345.3L557.8 347.2M556.2 360.9L555.8 363.2M566.0 147.8L566.2 145.6M573.2 222.1L563.2 213.1M560.5 399.2L558.2 399.2M569.9 393.4L569.7 391.2M566.2 374.6L566.2 372.0M570.9 138.1L568.3 139.3M572.7 105.1L570.8 101.3M567.7 358.1L566.4 356.3M570.0 381.9L568.7 384.1" fill="none" stroke="#1a0a1c" stroke-width="0.5" shape-rendering="crispEdges"/><mask id="mVio"><rect x="540" y="90" width="50" height="320" fill="#000"/><circle cx="565" cy="112" r="16" fill="url(#spot)"/><circle cx="563" cy="352" r="16" fill="url(#spot)"/><circle cx="566" cy="390" r="12" fill="url(#spot)"/></mask><rect x="540" y="90" width="50" height="320" fill="url(#pVioF)" mask="url(#mVio)"/><mask id="mTeal"><rect x="535" y="90" width="30" height="320" fill="#000"/><circle cx="549" cy="128" r="16" fill="url(#spot)"/><circle cx="548" cy="216" r="6" fill="url(#spot)"/><circle cx="547" cy="315" r="6" fill="url(#spot)"/><circle cx="547" cy="362" r="10" fill="url(#spot)"/></mask></g><clipPath id="cTeal"><path d="M544.6 98.9L553.8 98.9L550.8 399.2L541.9 399.2Z"/></clipPath><rect x="535" y="90" width="30" height="320" fill="url(#pFine2)" mask="url(#mTeal)" clip-path="url(#cTeal)"/><path d="M574.2 100.0L577.0 100.0L582.8 150.0L580.9 350.0L580.2 397.5L571.8 397.5Z" fill="#070707"/><path d="M574.3 103L576.3 103L576 149L574 149Z" fill="#e0542c"/><path d="M572.2 352L574.3 352L574 397L571.9 397Z" fill="#e07a78"/><path d="M575.5 99.2H625.5V101.2H575.5Z" fill="#e0503a"/><path d="M579 101.5H609V104C609 116 601 123.5 592 123.5C586 123.5 581.5 121.5 579.5 119Z" fill="#060606"/><path d="M581 102.5H607C606.5 112 600 120.5 590.5 120.5C586 120.5 583 119 581 117Z" fill="#1fa3a1"/><path d="M581 102.5H607C606.5 112 600 120.5 590.5 120.5C586 120.5 583 119 581 117Z" fill="url(#pFine2)" opacity="0.75"/><path d="M577 119C588 119 592 127 591.5 135C591 143 586 148.5 577 149Z" fill="#060606"/><path d="M577.5 120.5C583.5 124 585.5 129 585 135C584.5 141 581.5 145.5 577.5 147.5" fill="none" stroke="#d316cf" stroke-width="2.1"/><path d="M608.6 102.5H615.2C616 115 618.5 124 622.4 130.5V137C614.5 130.5 609.8 118 608.6 102.5Z" fill="#070706"/><path d="M608.6 103C609.5 117 614 129 622.5 136.5" fill="none" stroke="#efe51a" stroke-width="2"/><path d="M622.4 102H624.6V135H622.4Z" fill="#e0542c"/><path d="M575 397.3H626V399.6H575Z" fill="#e88a84"/><path d="M575.5 350C586 350 590 357 589.5 364C589 371 584 377.5 576 379Z" fill="#060606"/><path d="M576 352C580.5 355 582.2 359.5 582 364.5C581.8 370 579.5 374.5 576 377.5" fill="none" stroke="#9fc4cc" stroke-width="2.2"/><path d="M578.5 397.3V380C590 376.5 601 384 605 397.3Z" fill="#060606"/><path d="M579.3 396.8V383.5C589 382 598 387 601.5 396.8Z" fill="#e0529c"/><path d="M579.3 396.8V383.5C589 382 598 387 601.5 396.8Z" fill="url(#pFine2)" opacity="0.7"/><path d="M579.5 381.8C590 379.5 599.5 385.5 603 396" fill="none" stroke="#15c9d3" stroke-width="2"/><path d="M605.6 397.3C606 379 612.5 366 625 359.5V366.5C617.5 371 612.6 381 612.2 397.3Z" fill="#060606"/><path d="M606 396.5C606.5 379 612.5 366.5 624.5 360" fill="none" stroke="#9ad21c" stroke-width="2.2"/><path d="M619.3 367.5H621.2V397.3H619.3Z" fill="#e88a84"/><path d="M300.4 426V412" stroke="#0000ff" stroke-width="1.3" fill="none"/><path d="M300.4 406.8L302.2 413.8H298.6Z" fill="#0000ff"/><path d="M304 426H313" stroke="#ff0000" stroke-width="1.3"/><path d="M318.8 426L311.8 427.9V424.1Z" fill="#ff0000"/><circle cx="303.6" cy="426" r="1.9" fill="#00ee00"/><g fill="none" stroke="#444" stroke-width="0.8"><path d="M300.6 396.3H306L300.4 404.6H306"/><path d="M307.4 416.3L310 420.5V424.4M312.8 416.3L310 420.5"/><path d="M320.6 416.3L326.6 425M326.2 416.3L320 425"/></g></svg>
<div class="tb" style="left:0px;top:49px;width:242px;height:19px"></div><span class="t" style="left:5.70px;top:55px;font-size:12px;transform:scaleX(0.9613);color:#000;">Model Tree</span><svg style="left:205px;top:54.3px" width="9" height="9" viewBox="0 0 9 9"><path d="M2.5 2.5V0.7H8.3V5.5H6.5" fill="none" stroke="#222" stroke-width="1.3"/><rect x="0.7" y="3.2" width="5.4" height="5" fill="none" stroke="#222" stroke-width="1.3"/></svg><svg style="left:226.5px;top:54.8px" width="8" height="8" viewBox="0 0 8 8"><path d="M0.6 0.6L7.4 7.4M7.4 0.6L0.6 7.4" stroke="#222" stroke-width="1.6" fill="none"/></svg>
<span class="t" style="left:8.70px;top:83px;font-size:11.5px;transform:scaleX(0.9448);color:#000;">Current View</span>
<div class="a" style="left:77.4px;top:79.4px;width:156.2px;height:18.8px;background:#fdfdfd;border:1px solid #e6e6e6;border-radius:2px"></div>
<span class="t" style="left:81.40px;top:83px;font-size:11.5px;transform:scaleX(0.9389);color:#000;">Full Tree</span>
<svg style="left:221px;top:86px" width="8" height="6" viewBox="0 0 8 6"><path d="M0.5 0.8L4 4.6L7.5 0.8" fill="none" stroke="#555" stroke-width="1"/></svg>
<div class="a" style="left:9px;top:104px;width:225px;height:361px;background:#f0f0f0;border:1px solid #d9d9d9;border-top-color:#8a8f98"></div>
<div class="a" style="left:10px;top:105px;width:206px;height:343px;background:#fff"></div>
<div class="a" style="left:157.5px;top:105px;width:1px;height:24px;background:#e5e5e5"></div>
<span class="t" style="left:14.80px;top:112px;font-size:11.5px;transform:scaleX(0.9845);color:#000;">Name</span>
<span class="t" style="left:162.50px;top:112px;font-size:11.5px;transform:scaleX(0.9072);color:#000;">Id</span>
<svg style="left:204.5px;top:105.5px" width="8" height="5" viewBox="0 0 8 5"><path d="M0.6 4.2L4 0.8L7.4 4.2" fill="none" stroke="#666" stroke-width="0.9"/></svg>
<div class="a" style="left:222.8px;top:122.8px;width:2.4px;height:45.5px;background:#6a6a6a;border-radius:1px"></div>
<div class="a" style="left:27px;top:454.3px;width:141px;height:2.2px;background:#7a7a7a;border-radius:1px"></div>
<span class="t" style="left:45.70px;top:134px;font-size:11.5px;transform:scaleX(1.0370);color:#000;">Multi-Volume Bodies</span>
<svg style="left:23.3px;top:131.0px" width="17" height="16" viewBox="-11.5 -11 23 22"><g transform="translate(3.4,-3.4)"><g transform="scale(0.66)"><path d="M-10.9 -5.6L2.5 -3.6L2.5 10.6L-9.2 6.2Z" fill="url(#gBlueFace)"/><path d="M-10.9 -5.6L-0.3 -10.3L10.7 -8.7L2.5 -3.6Z" fill="url(#gBlueTop)"/><path d="M2.5 -3.6L10.7 -8.7L9.2 4.5L2.5 10.6Z" fill="#0e3468"/><path d="M-10.9 -5.6L-0.3 -10.3L10.7 -8.7L9.2 4.5L2.5 10.6L-9.2 6.2ZM2.5 -3.6L-10.9 -5.6M2.5 -3.6L10.7 -8.7M2.5 -3.6L2.5 10.6" fill="none" stroke="#06101e" stroke-width="1.82" stroke-linejoin="round"/></g></g><g transform="translate(-3.6,3.4)"><g transform="scale(0.62)"><path d="M-10.9 -5.6L2.5 -3.6L2.5 10.6L-9.2 6.2Z" fill="url(#gBlueFace)"/><path d="M-10.9 -5.6L-0.3 -10.3L10.7 -8.7L2.5 -3.6Z" fill="url(#gBlueTop)"/><path d="M2.5 -3.6L10.7 -8.7L9.2 4.5L2.5 10.6Z" fill="#0e3468"/><path d="M-10.9 -5.6L-0.3 -10.3L10.7 -8.7L9.2 4.5L2.5 10.6L-9.2 6.2ZM2.5 -3.6L-10.9 -5.6M2.5 -3.6L10.7 -8.7M2.5 -3.6L2.5 10.6" fill="none" stroke="#06101e" stroke-width="1.94" stroke-linejoin="round"/></g></g></svg>
<span class="t" style="left:45.00px;top:154px;font-size:11.5px;transform:scaleX(0.9976);color:#000;">Volumes</span>
<svg style="left:23.2px;top:151.2px" width="16" height="16" viewBox="-11 -11 22 22"><g transform="scale(1.0)"><path d="M-10.9 -5.6L2.5 -3.6L2.5 10.6L-9.2 6.2Z" fill="url(#gBlueFace)"/><path d="M-10.9 -5.6L-0.3 -10.3L10.7 -8.7L2.5 -3.6Z" fill="url(#gBlueTop)"/><path d="M2.5 -3.6L10.7 -8.7L9.2 4.5L2.5 10.6Z" fill="#0e3468"/><path d="M-10.9 -5.6L-0.3 -10.3L10.7 -8.7L9.2 4.5L2.5 10.6L-9.2 6.2ZM2.5 -3.6L-10.9 -5.6M2.5 -3.6L10.7 -8.7M2.5 -3.6L2.5 10.6" fill="none" stroke="#06101e" stroke-width="1.5" stroke-linejoin="round"/></g></svg>
<svg style="left:11.5px;top:156.5px" width="8" height="6" viewBox="0 0 8 6"><path d="M0.6 0.8L4 4.6L7.4 0.8" fill="none" stroke="#111" stroke-width="1.3"/></svg>
<span class="t" style="left:54.80px;top:174px;font-size:11.5px;transform:scaleX(0.9999);color:#000;">Solid13@A</span>
<span class="t" style="left:161.00px;top:174px;font-size:11.5px;transform:scaleX(0.9600);color:#000;">2</span>
<svg style="left:33.2px;top:171.1px" width="16" height="16" viewBox="-11 -11 22 22"><g transform="scale(1.0)"><path d="M-10.9 -5.6L2.5 -3.6L2.5 10.6L-9.2 6.2Z" fill="url(#gBlueFace)"/><path d="M-10.9 -5.6L-0.3 -10.3L10.7 -8.7L2.5 -3.6Z" fill="url(#gBlueTop)"/><path d="M2.5 -3.6L10.7 -8.7L9.2 4.5L2.5 10.6Z" fill="#0e3468"/><path d="M-10.9 -5.6L-0.3 -10.3L10.7 -8.7L9.2 4.5L2.5 10.6L-9.2 6.2ZM2.5 -3.6L-10.9 -5.6M2.5 -3.6L10.7 -8.7M2.5 -3.6L2.5 10.6" fill="none" stroke="#06101e" stroke-width="1.5" stroke-linejoin="round"/></g></svg>
<svg style="left:22.6px;top:175.1px" width="6" height="9" viewBox="0 0 6 9"><path d="M1 0.9L4.6 4.5L1 8.1" fill="none" stroke="#707070" stroke-width="1.35"/></svg>
<span class="t" style="left:54.80px;top:193px;font-size:11.5px;transform:scaleX(0.9826);color:#000;">Solid13@B</span>
<span class="t" style="left:161.00px;top:193px;font-size:11.5px;transform:scaleX(0.9600);color:#000;">3</span>
<svg style="left:33.2px;top:191.0px" width="16" height="16" viewBox="-11 -11 22 22"><g transform="scale(1.0)"><path d="M-10.9 -5.6L2.5 -3.6L2.5 10.6L-9.2 6.2Z" fill="url(#gBlueFace)"/><path d="M-10.9 -5.6L-0.3 -10.3L10.7 -8.7L2.5 -3.6Z" fill="url(#gBlueTop)"/><path d="M2.5 -3.6L10.7 -8.7L9.2 4.5L2.5 10.6Z" fill="#0e3468"/><path d="M-10.9 -5.6L-0.3 -10.3L10.7 -8.7L9.2 4.5L2.5 10.6L-9.2 6.2ZM2.5 -3.6L-10.9 -5.6M2.5 -3.6L10.7 -8.7M2.5 -3.6L2.5 10.6" fill="none" stroke="#06101e" stroke-width="1.5" stroke-linejoin="round"/></g></svg>
<svg style="left:22.6px;top:195.0px" width="6" height="9" viewBox="0 0 6 9"><path d="M1 0.9L4.6 4.5L1 8.1" fill="none" stroke="#707070" stroke-width="1.35"/></svg>
<span class="t" style="left:54.80px;top:213px;font-size:11.5px;transform:scaleX(0.9804);color:#000;">Solid13@C</span>
<span class="t" style="left:161.00px;top:213px;font-size:11.5px;transform:scaleX(0.9600);color:#000;">4</span>
<svg style="left:33.2px;top:210.8px" width="16" height="16" viewBox="-11 -11 22 22"><g transform="scale(1.0)"><path d="M-10.9 -5.6L2.5 -3.6L2.5 10.6L-9.2 6.2Z" fill="url(#gBlueFace)"/><path d="M-10.9 -5.6L-0.3 -10.3L10.7 -8.7L2.5 -3.6Z" fill="url(#gBlueTop)"/><path d="M2.5 -3.6L10.7 -8.7L9.2 4.5L2.5 10.6Z" fill="#0e3468"/><path d="M-10.9 -5.6L-0.3 -10.3L10.7 -8.7L9.2 4.5L2.5 10.6L-9.2 6.2ZM2.5 -3.6L-10.9 -5.6M2.5 -3.6L10.7 -8.7M2.5 -3.6L2.5 10.6" fill="none" stroke="#06101e" stroke-width="1.5" stroke-linejoin="round"/></g></svg>
<svg style="left:22.6px;top:214.8px" width="6" height="9" viewBox="0 0 6 9"><path d="M1 0.9L4.6 4.5L1 8.1" fill="none" stroke="#707070" stroke-width="1.35"/></svg>
<span class="t" style="left:54.80px;top:233px;font-size:11.5px;transform:scaleX(0.9976);color:#000;">Solid13@U</span>
<span class="t" style="left:161.00px;top:233px;font-size:11.5px;transform:scaleX(0.9600);color:#000;">22</span>
<svg style="left:33.2px;top:230.7px" width="16" height="16" viewBox="-11 -11 22 22"><g transform="scale(1.0)"><path d="M-10.9 -5.6L2.5 -3.6L2.5 10.6L-9.2 6.2Z" fill="url(#gBlueFace)"/><path d="M-10.9 -5.6L-0.3 -10.3L10.7 -8.7L2.5 -3.6Z" fill="url(#gBlueTop)"/><path d="M2.5 -3.6L10.7 -8.7L9.2 4.5L2.5 10.6Z" fill="#0e3468"/><path d="M-10.9 -5.6L-0.3 -10.3L10.7 -8.7L9.2 4.5L2.5 10.6L-9.2 6.2ZM2.5 -3.6L-10.9 -5.6M2.5 -3.6L10.7 -8.7M2.5 -3.6L2.5 10.6" fill="none" stroke="#06101e" stroke-width="1.5" stroke-linejoin="round"/></g></svg>
<svg style="left:22.6px;top:234.7px" width="6" height="9" viewBox="0 0 6 9"><path d="M1 0.9L4.6 4.5L1 8.1" fill="none" stroke="#707070" stroke-width="1.35"/></svg>
<span class="t" style="left:54.80px;top:253px;font-size:11.5px;transform:scaleX(0.9826);color:#000;">Solid13@V</span>
<span class="t" style="left:161.00px;top:253px;font-size:11.5px;transform:scaleX(0.9600);color:#000;">23</span>
<svg style="left:33.2px;top:250.5px" width="16" height="16" viewBox="-11 -11 22 22"><g transform="scale(1.0)"><path d="M-10.9 -5.6L2.5 -3.6L2.5 10.6L-9.2 6.2Z" fill="url(#gBlueFace)"/><path d="M-10.9 -5.6L-0.3 -10.3L10.7 -8.7L2.5 -3.6Z" fill="url(#gBlueTop)"/><path d="M2.5 -3.6L10.7 -8.7L9.2 4.5L2.5 10.6Z" fill="#0e3468"/><path d="M-10.9 -5.6L-0.3 -10.3L10.7 -8.7L9.2 4.5L2.5 10.6L-9.2 6.2ZM2.5 -3.6L-10.9 -5.6M2.5 -3.6L10.7 -8.7M2.5 -3.6L2.5 10.6" fill="none" stroke="#06101e" stroke-width="1.5" stroke-linejoin="round"/></g></svg>
<svg style="left:22.6px;top:254.5px" width="6" height="9" viewBox="0 0 6 9"><path d="M1 0.9L4.6 4.5L1 8.1" fill="none" stroke="#707070" stroke-width="1.35"/></svg>
<span class="t" style="left:54.80px;top:273px;font-size:11.5px;transform:scaleX(1.0051);color:#000;">Solid13@W</span>
<span class="t" style="left:161.00px;top:273px;font-size:11.5px;transform:scaleX(0.9600);color:#000;">24</span>
<svg style="left:33.2px;top:270.4px" width="16" height="16" viewBox="-11 -11 22 22"><g transform="scale(1.0)"><path d="M-10.9 -5.6L2.5 -3.6L2.5 10.6L-9.2 6.2Z" fill="url(#gBlueFace)"/><path d="M-10.9 -5.6L-0.3 -10.3L10.7 -8.7L2.5 -3.6Z" fill="url(#gBlueTop)"/><path d="M2.5 -3.6L10.7 -8.7L9.2 4.5L2.5 10.6Z" fill="#0e3468"/><path d="M-10.9 -5.6L-0.3 -10.3L10.7 -8.7L9.2 4.5L2.5 10.6L-9.2 6.2ZM2.5 -3.6L-10.9 -5.6M2.5 -3.6L10.7 -8.7M2.5 -3.6L2.5 10.6" fill="none" stroke="#06101e" stroke-width="1.5" stroke-linejoin="round"/></g></svg>
<svg style="left:22.6px;top:274.4px" width="6" height="9" viewBox="0 0 6 9"><path d="M1 0.9L4.6 4.5L1 8.1" fill="none" stroke="#707070" stroke-width="1.35"/></svg>
<span class="t" style="left:54.80px;top:293px;font-size:11.5px;transform:scaleX(0.9881);color:#000;">Solid5@A</span>
<span class="t" style="left:161.00px;top:293px;font-size:11.5px;transform:scaleX(0.9600);color:#000;">26</span>
<svg style="left:33.2px;top:290.2px" width="16" height="16" viewBox="-11 -11 22 22"><g transform="scale(1.0)"><path d="M-10.9 -5.6L2.5 -3.6L2.5 10.6L-9.2 6.2Z" fill="url(#gBlueFace)"/><path d="M-10.9 -5.6L-0.3 -10.3L10.7 -8.7L2.5 -3.6Z" fill="url(#gBlueTop)"/><path d="M2.5 -3.6L10.7 -8.7L9.2 4.5L2.5 10.6Z" fill="#0e3468"/><path d="M-10.9 -5.6L-0.3 -10.3L10.7 -8.7L9.2 4.5L2.5 10.6L-9.2 6.2ZM2.5 -3.6L-10.9 -5.6M2.5 -3.6L10.7 -8.7M2.5 -3.6L2.5 10.6" fill="none" stroke="#06101e" stroke-width="1.5" stroke-linejoin="round"/></g></svg>
<svg style="left:22.6px;top:294.2px" width="6" height="9" viewBox="0 0 6 9"><path d="M1 0.9L4.6 4.5L1 8.1" fill="none" stroke="#707070" stroke-width="1.35"/></svg>
<span class="t" style="left:54.80px;top:312px;font-size:11.5px;transform:scaleX(0.9756);color:#000;">Solid5@G</span>
<span class="t" style="left:161.00px;top:312px;font-size:11.5px;transform:scaleX(0.9600);color:#000;">32</span>
<svg style="left:33.2px;top:310.1px" width="16" height="16" viewBox="-11 -11 22 22"><g transform="scale(1.0)"><path d="M-10.9 -5.6L2.5 -3.6L2.5 10.6L-9.2 6.2Z" fill="url(#gBlueFace)"/><path d="M-10.9 -5.6L-0.3 -10.3L10.7 -8.7L2.5 -3.6Z" fill="url(#gBlueTop)"/><path d="M2.5 -3.6L10.7 -8.7L9.2 4.5L2.5 10.6Z" fill="#0e3468"/><path d="M-10.9 -5.6L-0.3 -10.3L10.7 -8.7L9.2 4.5L2.5 10.6L-9.2 6.2ZM2.5 -3.6L-10.9 -5.6M2.5 -3.6L10.7 -8.7M2.5 -3.6L2.5 10.6" fill="none" stroke="#06101e" stroke-width="1.5" stroke-linejoin="round"/></g></svg>
<svg style="left:22.6px;top:314.1px" width="6" height="9" viewBox="0 0 6 9"><path d="M1 0.9L4.6 4.5L1 8.1" fill="none" stroke="#707070" stroke-width="1.35"/></svg>
<span class="t" style="left:54.80px;top:332px;font-size:11.5px;transform:scaleX(0.9950);color:#000;">Solid5@I</span>
<span class="t" style="left:161.00px;top:332px;font-size:11.5px;transform:scaleX(0.9600);color:#000;">34</span>
<svg style="left:33.2px;top:329.9px" width="16" height="16" viewBox="-11 -11 22 22"><g transform="scale(1.0)"><path d="M-10.9 -5.6L2.5 -3.6L2.5 10.6L-9.2 6.2Z" fill="url(#gBlueFace)"/><path d="M-10.9 -5.6L-0.3 -10.3L10.7 -8.7L2.5 -3.6Z" fill="url(#gBlueTop)"/><path d="M2.5 -3.6L10.7 -8.7L9.2 4.5L2.5 10.6Z" fill="#0e3468"/><path d="M-10.9 -5.6L-0.3 -10.3L10.7 -8.7L9.2 4.5L2.5 10.6L-9.2 6.2ZM2.5 -3.6L-10.9 -5.6M2.5 -3.6L10.7 -8.7M2.5 -3.6L2.5 10.6" fill="none" stroke="#06101e" stroke-width="1.5" stroke-linejoin="round"/></g></svg>
<svg style="left:22.6px;top:333.9px" width="6" height="9" viewBox="0 0 6 9"><path d="M1 0.9L4.6 4.5L1 8.1" fill="none" stroke="#707070" stroke-width="1.35"/></svg>
<span class="t" style="left:54.80px;top:352px;font-size:11.5px;transform:scaleX(0.9946);color:#000;">Solid5@O</span>
<span class="t" style="left:161.00px;top:352px;font-size:11.5px;transform:scaleX(0.9600);color:#000;">40</span>
<svg style="left:33.2px;top:349.8px" width="16" height="16" viewBox="-11 -11 22 22"><g transform="scale(1.0)"><path d="M-10.9 -5.6L2.5 -3.6L2.5 10.6L-9.2 6.2Z" fill="url(#gBlueFace)"/><path d="M-10.9 -5.6L-0.3 -10.3L10.7 -8.7L2.5 -3.6Z" fill="url(#gBlueTop)"/><path d="M2.5 -3.6L10.7 -8.7L9.2 4.5L2.5 10.6Z" fill="#0e3468"/><path d="M-10.9 -5.6L-0.3 -10.3L10.7 -8.7L9.2 4.5L2.5 10.6L-9.2 6.2ZM2.5 -3.6L-10.9 -5.6M2.5 -3.6L10.7 -8.7M2.5 -3.6L2.5 10.6" fill="none" stroke="#06101e" stroke-width="1.5" stroke-linejoin="round"/></g></svg>
<svg style="left:22.6px;top:353.8px" width="6" height="9" viewBox="0 0 6 9"><path d="M1 0.9L4.6 4.5L1 8.1" fill="none" stroke="#707070" stroke-width="1.35"/></svg>
<span class="t" style="left:54.80px;top:372px;font-size:11.5px;transform:scaleX(0.9881);color:#000;">Solid3@A</span>
<span class="t" style="left:161.00px;top:372px;font-size:11.5px;transform:scaleX(0.9600);color:#000;">42</span>
<svg style="left:33.2px;top:369.6px" width="16" height="16" viewBox="-11 -11 22 22"><g transform="scale(1.0)"><path d="M-10.9 -5.6L2.5 -3.6L2.5 10.6L-9.2 6.2Z" fill="url(#gBlueFace)"/><path d="M-10.9 -5.6L-0.3 -10.3L10.7 -8.7L2.5 -3.6Z" fill="url(#gBlueTop)"/><path d="M2.5 -3.6L10.7 -8.7L9.2 4.5L2.5 10.6Z" fill="#0e3468"/><path d="M-10.9 -5.6L-0.3 -10.3L10.7 -8.7L9.2 4.5L2.5 10.6L-9.2 6.2ZM2.5 -3.6L-10.9 -5.6M2.5 -3.6L10.7 -8.7M2.5 -3.6L2.5 10.6" fill="none" stroke="#06101e" stroke-width="1.5" stroke-linejoin="round"/></g></svg>
<svg style="left:22.6px;top:373.6px" width="6" height="9" viewBox="0 0 6 9"><path d="M1 0.9L4.6 4.5L1 8.1" fill="none" stroke="#707070" stroke-width="1.35"/></svg>
<span class="t" style="left:54.80px;top:392px;font-size:11.5px;transform:scaleX(0.9569);color:#000;">Solid3@E</span>
<span class="t" style="left:161.00px;top:392px;font-size:11.5px;transform:scaleX(0.9600);color:#000;">46</span>
<svg style="left:33.2px;top:389.5px" width="16" height="16" viewBox="-11 -11 22 22"><g transform="scale(1.0)"><path d="M-10.9 -5.6L2.5 -3.6L2.5 10.6L-9.2 6.2Z" fill="url(#gBlueFace)"/><path d="M-10.9 -5.6L-0.3 -10.3L10.7 -8.7L2.5 -3.6Z" fill="url(#gBlueTop)"/><path d="M2.5 -3.6L10.7 -8.7L9.2 4.5L2.5 10.6Z" fill="#0e3468"/><path d="M-10.9 -5.6L-0.3 -10.3L10.7 -8.7L9.2 4.5L2.5 10.6L-9.2 6.2ZM2.5 -3.6L-10.9 -5.6M2.5 -3.6L10.7 -8.7M2.5 -3.6L2.5 10.6" fill="none" stroke="#06101e" stroke-width="1.5" stroke-linejoin="round"/></g></svg>
<svg style="left:22.6px;top:393.5px" width="6" height="9" viewBox="0 0 6 9"><path d="M1 0.9L4.6 4.5L1 8.1" fill="none" stroke="#707070" stroke-width="1.35"/></svg>
<span class="t" style="left:54.80px;top:412px;font-size:11.5px;transform:scaleX(0.9876);color:#000;">Solid3@H</span>
<span class="t" style="left:161.00px;top:412px;font-size:11.5px;transform:scaleX(0.9600);color:#000;">49</span>
<svg style="left:33.2px;top:409.3px" width="16" height="16" viewBox="-11 -11 22 22"><g transform="scale(1.0)"><path d="M-10.9 -5.6L2.5 -3.6L2.5 10.6L-9.2 6.2Z" fill="url(#gBlueFace)"/><path d="M-10.9 -5.6L-0.3 -10.3L10.7 -8.7L2.5 -3.6Z" fill="url(#gBlueTop)"/><path d="M2.5 -3.6L10.7 -8.7L9.2 4.5L2.5 10.6Z" fill="#0e3468"/><path d="M-10.9 -5.6L-0.3 -10.3L10.7 -8.7L9.2 4.5L2.5 10.6L-9.2 6.2ZM2.5 -3.6L-10.9 -5.6M2.5 -3.6L10.7 -8.7M2.5 -3.6L2.5 10.6" fill="none" stroke="#06101e" stroke-width="1.5" stroke-linejoin="round"/></g></svg>
<svg style="left:22.6px;top:413.3px" width="6" height="9" viewBox="0 0 6 9"><path d="M1 0.9L4.6 4.5L1 8.1" fill="none" stroke="#707070" stroke-width="1.35"/></svg>
<span class="t" style="left:54.80px;top:432px;font-size:11.5px;transform:scaleX(0.9876);color:#000;">Solid7@D</span>
<span class="t" style="left:161.00px;top:432px;font-size:11.5px;transform:scaleX(0.9600);color:#000;">54</span>
<svg style="left:33.2px;top:429.2px" width="16" height="16" viewBox="-11 -11 22 22"><g transform="scale(1.0)"><path d="M-10.9 -5.6L2.5 -3.6L2.5 10.6L-9.2 6.2Z" fill="url(#gBlueFace)"/><path d="M-10.9 -5.6L-0.3 -10.3L10.7 -8.7L2.5 -3.6Z" fill="url(#gBlueTop)"/><path d="M2.5 -3.6L10.7 -8.7L9.2 4.5L2.5 10.6Z" fill="#0e3468"/><path d="M-10.9 -5.6L-0.3 -10.3L10.7 -8.7L9.2 4.5L2.5 10.6L-9.2 6.2ZM2.5 -3.6L-10.9 -5.6M2.5 -3.6L10.7 -8.7M2.5 -3.6L2.5 10.6" fill="none" stroke="#06101e" stroke-width="1.5" stroke-linejoin="round"/></g></svg>
<svg style="left:22.6px;top:433.2px" width="6" height="9" viewBox="0 0 6 9"><path d="M1 0.9L4.6 4.5L1 8.1" fill="none" stroke="#707070" stroke-width="1.35"/></svg>
<span class="t" style="left:8.80px;top:476px;font-size:11.5px;transform:scaleX(0.9016);color:#000;">Solid13@W</span>
<div class="wb" style="left:211.7px;top:471.3px;width:20.6px;height:20.8px;background:#fdfdfd"></div>
<svg style="left:214.0px;top:474.0px" width="17" height="16" viewBox="0 0 17 16"><path d="M1.6 3.4V12.4C1.6 14.4 9.6 14.4 9.6 12.4V3.4" fill="#5a9a10" stroke="#1e3a04" stroke-width="0.6"/><ellipse cx="5.6" cy="3.4" rx="4" ry="1.7" fill="#9ad83c" stroke="#1e3a04" stroke-width="0.6"/><path d="M6.6 14.4V8.4L8 6H10.2L10.8 8H11.8L12.4 6H14.6L16 8.4V14.4H12V10.6H10.6V14.4Z" fill="#0a0a0a"/><rect x="7.6" y="10" width="2" height="3" fill="#6a6a6a"/><rect x="13" y="10" width="2" height="3" fill="#6a6a6a"/></svg>
<div class="tb" style="left:0px;top:507px;width:242px;height:18px"></div><span class="t" style="left:5.60px;top:512px;font-size:12px;transform:scaleX(0.9448);color:#000;">Properties Page</span><svg style="left:205px;top:511.8px" width="9" height="9" viewBox="0 0 9 9"><path d="M2.5 2.5V0.7H8.3V5.5H6.5" fill="none" stroke="#222" stroke-width="1.3"/><rect x="0.7" y="3.2" width="5.4" height="5" fill="none" stroke="#222" stroke-width="1.3"/></svg><svg style="left:226.5px;top:512.3px" width="8" height="8" viewBox="0 0 8 8"><path d="M0.6 0.6L7.4 7.4M7.4 0.6L0.6 7.4" stroke="#222" stroke-width="1.6" fill="none"/></svg>
<div class="gb" style="left:5.6px;top:538px;width:232px;height:46px"></div>
<div class="a" style="left:12px;top:532px;width:77px;height:12px;background:#f0f0f0"></div>
<span class="t" style="left:15.00px;top:533px;font-size:11.5px;transform:scaleX(0.9362);color:#000;">Perform Action</span>
<div class="wb" style="left:11.9px;top:551.5px;width:27.0px;height:27px;background:#fbfbfb;border-color:#e4e4e4"></div><div class="wb" style="left:40.8px;top:551.5px;width:26.6px;height:27px;background:#f5f5f5;border-color:#f0f0f0"></div><div class="wb" style="left:69.6px;top:551.5px;width:26.7px;height:27px;background:#f5f5f5;border-color:#f0f0f0"></div><div class="wb" style="left:98.2px;top:551.5px;width:26.6px;height:27px;background:#f5f5f5;border-color:#f0f0f0"></div><div class="wb" style="left:127px;top:551.5px;width:26.7px;height:27px;background:#f5f5f5;border-color:#f0f0f0"></div><div class="wb" style="left:155.9px;top:551.5px;width:26.7px;height:27px;background:#f5f5f5;border-color:#f0f0f0"></div><div class="wb" style="left:203.9px;top:551.5px;width:26.7px;height:27px;background:#f5f5f5;border-color:#f0f0f0"></div><svg style="left:0;top:545px" width="242" height="40" viewBox="0 545 242 40"><g transform="translate(25.4,565.4)"><rect x="-9.6" y="-9.6" width="19.2" height="19.2" fill="#c9a0dc"/><rect x="-9.6" y="-9.6" width="19.2" height="6.4" fill="#ddb8ec"/><path d="M-9.6 -3.2H9.6M-9.6 3.2H9.6M-3.2 -9.6V9.6M3.2 -9.6V9.6" stroke="#8a5ca4" stroke-width="0.8"/><rect x="-9.6" y="-9.6" width="19.2" height="19.2" fill="none" stroke="#8a5ca4" stroke-width="0.8"/><path d="M-7.6 6.2V1.4L-6.2 -1.4H-3.6L-2.8 0.8H-0.2L0.6 -1.4H3.2L4.6 1.4V6.2H1V2.8H-3.6V6.2Z" fill="#0a0a0a"/></g><g transform="translate(54,565.4)"><path d="M-9.6 -9.6H-3.2V-3.2H3.2V3.2H9.6V9.6H-9.6Z" fill="#9c9c9c"/><path d="M-9.6 -9.6H9.6V9.6H-9.6ZM-3.2 -9.6V9.6M3.2 -9.6V9.6M-9.6 -3.2H9.6M-9.6 3.2H9.6" fill="none" stroke="#c4c4c4" stroke-width="0.8"/><path d="M-9.6 -9.6H-3.2V-3.2H3.2V3.2H9.6V9.6H-9.6Z" fill="none" stroke="#7e7e7e" stroke-width="0.7"/></g><g transform="translate(83,565.4)"><path d="M-10 6.4C-8 -2 -1 -6.4 8.4 -7.2C10.4 -2.8 10.6 2 9.6 5.4Z" fill="#a8a8a8" stroke="#8a8a8a" stroke-width="0.8"/><path d="M-10 6.4L9.6 5.4L9.4 8.2L-9.6 9Z" fill="#8c8c8c"/><path d="M-3.4 0.6C-0.6 -2.4 3 -3.6 6.4 -3.8C7 -1.4 6.8 0.6 6.2 2.2Z" fill="#c8c8c8" stroke="#8e8e8e" stroke-width="0.6"/></g><g transform="translate(111.6,565.4)"><path d="M-3.6 1.6L-5.2 10L-1.6 7.4L0 10.4L1.6 7.4L5.2 10L3.6 1.6Z" fill="#b0b0b0" stroke="#989898" stroke-width="0.5"/><circle cx="0" cy="-3.4" r="6.2" fill="#c2c2c2" stroke="#9a9a9a" stroke-width="0.9"/><circle cx="0" cy="-3.4" r="3.6" fill="#a8a8a8"/><path d="M-0.6 -5.2L0.4 -5.6V-1.4" stroke="#d8d8d8" stroke-width="0.9" fill="none"/></g><g transform="translate(140.4,565.4)"><rect x="-9.6" y="-9.6" width="19.2" height="19.2" fill="#a0a0a0"/><path d="M-9.6 -3.2H9.6M-9.6 3.2H9.6M-3.2 -9.6V9.6M3.2 -9.6V9.6" stroke="#c6c6c6" stroke-width="0.8"/><rect x="-2.8" y="-9.2" width="12" height="12" fill="#b4b4b4"/><path d="M-2.8 -9.2L9.2 2.8M9.2 -9.2L-2.8 2.8" stroke="#808080" stroke-width="1.3"/><rect x="-9.6" y="-9.6" width="19.2" height="19.2" fill="none" stroke="#8c8c8c" stroke-width="0.8"/></g><g transform="translate(169.2,565.4) scale(0.98)" ><path d="M-10.2 1.4C-9.6 -5.4 -2.8 -7.8 2.4 -5.8L2.8 -9.8L10.4 -4.4L2.2 0.4L2.2 -2.6C-2.4 -3.6 -6.8 -2 -10.2 1.4Z" fill="#b2b2b2" stroke="#7e7e7e" stroke-width="0.7"/><path d="M10.2 -1.4C9.6 5.4 2.8 7.8 -2.4 5.8L-2.8 9.8L-10.4 4.4L-2.2 -0.4L-2.2 2.6C2.4 3.6 6.8 2 10.2 -1.4Z" fill="#b2b2b2" stroke="#7e7e7e" stroke-width="0.7"/></g><g transform="translate(217.2,565.4)"><path d="M-8.6 -5.4L-4.6 -9L0.2 -3.6L6.4 -8.6L9.4 -5.6L3.6 0L9 6L5.2 9.4L0 3.6L-5.8 9.2L-9.2 6L-3.4 0Z" fill="#a6a6a6" stroke="#8a8a8a" stroke-width="0.7" stroke-linejoin="round"/></g></svg>
<div class="a" style="left:4.7px;top:590.5px;width:233px;height:73px;background:#fff;border:1px solid #aaa;border-bottom:none"></div>
<div class="tb" style="left:246px;top:455px;width:908px;height:18px"></div>
<div class="tb" style="left:246px;top:455px;width:908px;height:18px"></div><span class="t" style="left:251.80px;top:460px;font-size:12px;transform:scaleX(0.9623);color:#000;">Command Line</span><svg style="left:1118px;top:459.8px" width="9" height="9" viewBox="0 0 9 9"><path d="M2.5 2.5V0.7H8.3V5.5H6.5" fill="none" stroke="#222" stroke-width="1.3"/><rect x="0.7" y="3.2" width="5.4" height="5" fill="none" stroke="#222" stroke-width="1.3"/></svg><svg style="left:1139.3px;top:460.3px" width="8" height="8" viewBox="0 0 8 8"><path d="M0.6 0.6L7.4 7.4M7.4 0.6L0.6 7.4" stroke="#222" stroke-width="1.6" fill="none"/></svg>
<div class="a" style="left:249px;top:478px;width:903px;height:185px;background:#fff;border:2px solid #f6f6f6;border-bottom:none"></div>
<span class="t" style="left:254.80px;top:486px;font-size:11.5px;transform:scaleX(0.9475);color:#000;">Cubit&gt;</span>
<div class="a" style="left:287.8px;top:485.2px;width:1px;height:12.4px;background:#000"></div>
<div class="tb" style="left:1159px;top:49px;width:271px;height:19px"></div><span class="t" style="left:1163.90px;top:55px;font-size:12px;transform:scaleX(0.9578);color:#000;">Command Panel</span><svg style="left:1393px;top:54.3px" width="9" height="9" viewBox="0 0 9 9"><path d="M2.5 2.5V0.7H8.3V5.5H6.5" fill="none" stroke="#222" stroke-width="1.3"/><rect x="0.7" y="3.2" width="5.4" height="5" fill="none" stroke="#222" stroke-width="1.3"/></svg><svg style="left:1414px;top:54.8px" width="8" height="8" viewBox="0 0 8 8"><path d="M0.6 0.6L7.4 7.4M7.4 0.6L0.6 7.4" stroke="#222" stroke-width="1.6" fill="none"/></svg>
<div class="gb" style="left:1170.6px;top:81.5px;width:247.6px;height:58.2px"></div><div class="a" style="left:1176.9px;top:76.5px;width:88.9px;height:11px;background:#f0f0f0"></div><span class="t" style="left:1179.90px;top:76px;font-size:11.5px;transform:scaleX(0.9266);color:#000;">Mode - Geometry</span><div class="a" style="left:1176.5px;top:94.8px;width:34.3px;height:39.2px;background:#cce4f7;border:1px solid #8cc0ea;border-top-color:#2a78c4;border-left-color:#3a84cc;border-radius:3px 0 0 3px"></div><div class="a" style="left:1210.4px;top:95.4px;width:34.5px;height:38.2px;background:#fdfdfd;border:1px solid #ededed;border-bottom-color:#d9d9d9;border-top-color:#f0f0f0"></div><div class="a" style="left:1244.2px;top:95.4px;width:34.5px;height:38.2px;background:#fdfdfd;border:1px solid #ededed;border-bottom-color:#d9d9d9;border-top-color:#f0f0f0"></div><div class="a" style="left:1278.1px;top:95.4px;width:34.5px;height:38.2px;background:#fdfdfd;border:1px solid #ededed;border-bottom-color:#d9d9d9;border-top-color:#f0f0f0"></div><div class="a" style="left:1311.9px;top:95.4px;width:34.5px;height:38.2px;background:#fdfdfd;border:1px solid #ededed;border-bottom-color:#d9d9d9;border-top-color:#f0f0f0"></div><div class="a" style="left:1345.8px;top:95.4px;width:38.5px;height:38.2px;background:#fdfdfd;border:1px solid #ededed;border-bottom-color:#d9d9d9;border-top-color:#f0f0f0"></div><svg style="left:1174.0px;top:94.6px" width="40" height="40" viewBox="-20.0 -20.0 40 40"><g transform="scale(1.15)"><path d="M-5.6 -9V2H4.6V-9" fill="#1c5596" stroke="#082448" stroke-width="0.7"/><ellipse cx="-0.5" cy="-9" rx="5.1" ry="2" fill="#3c78b8" stroke="#082448" stroke-width="0.7"/><path d="M7.6 -2L13.4 9.4H1.6Z" fill="#0e3c78" stroke="#082448" stroke-width="0.7" stroke-linejoin="round"/><circle cx="-4.2" cy="6" r="5.8" fill="url(#gBall)" stroke="#082448" stroke-width="0.6"/></g></svg><svg style="left:1210.3px;top:94.6px" width="40" height="40" viewBox="-20.0 -20.0 40 40"><g transform="scale(1.35)"><path d="M-10.9 -5.6L2.5 -3.6L2.5 10.6L-9.2 6.2Z" fill="#a88cc8"/><path d="M-10.9 -5.6L-0.3 -10.3L10.7 -8.7L2.5 -3.6Z" fill="#8a6cae"/><path d="M2.5 -3.6L10.7 -8.7L9.2 4.5L2.5 10.6Z" fill="#3c2c54"/><path d="M-10.9 -5.6L-0.3 -10.3L10.7 -8.7L9.2 4.5L2.5 10.6L-9.2 6.2ZM2.5 -3.6L-10.9 -5.6M2.5 -3.6L10.7 -8.7M2.5 -3.6L2.5 10.6" fill="none" stroke="#0a0a0a" stroke-width="1.1" stroke-linejoin="round"/><path d="M-7.2 -4.9L-5.6 7.6M-3.6 -4.5L-2 9M-10.4 -1.8L2.5 1M-9.8 2.2L2.5 5.6M-7.2 -7.2L5.4 -5.4M-3.8 -8.8L8 -7.1M-6.6 -7.5L-3.4 -9M-2 -6.6L1.4 -8.4M5 -5.2V9M7.4 -6.8V6.6M2.5 1L9.6 -4M2.5 5.6L9.4 0.4" stroke="#1c1028" stroke-width="0.9" fill="none"/></g></svg><svg style="left:1244.2px;top:94.6px" width="40" height="40" viewBox="-20.0 -20.0 40 40"><g transform="scale(1.35)"><path d="M-10.9 -5.6L2.5 -3.6L2.5 10.6L-9.2 6.2Z" fill="#f2b024"/><path d="M-10.9 -5.6L-0.3 -10.3L10.7 -8.7L2.5 -3.6Z" fill="#d89410"/><path d="M2.5 -3.6L10.7 -8.7L9.2 4.5L2.5 10.6Z" fill="#6a4404"/><path d="M-10.9 -5.6L-0.3 -10.3L10.7 -8.7L9.2 4.5L2.5 10.6L-9.2 6.2ZM2.5 -3.6L-10.9 -5.6M2.5 -3.6L10.7 -8.7M2.5 -3.6L2.5 10.6" fill="none" stroke="#0a0a0a" stroke-width="1.1" stroke-linejoin="round"/><path d="M-7.2 -4.9L-5.6 7.6M-3.6 -4.5L-2 9M-10.4 -1.8L2.5 1M-9.8 2.2L2.5 5.6M-7.2 -7.2L5.4 -5.4M-3.8 -8.8L8 -7.1M-6.6 -7.5L-3.4 -9M-2 -6.6L1.4 -8.4M5 -5.2V9M7.4 -6.8V6.6M2.5 1L9.6 -4M2.5 5.6L9.4 0.4" stroke="#3a2402" stroke-width="0.9" fill="none"/></g></svg><svg style="left:1278.4px;top:94.6px" width="40" height="40" viewBox="-20.0 -20.0 40 40"><g transform="scale(1.0)"><path d="M-9.8 -5.2H9.8V0.6L-9.8 -2.6Z" fill="#e6cdb0" stroke="#b89a78" stroke-width="0.6"/><path d="M-9.6 -2.8C-3 -2.4 3 -0.8 9.2 2L8.4 6.4C3 3.4 -3 2 -9.4 1.8Z" fill="#e89440" stroke="#8a4c10" stroke-width="0.8"/><path d="M-9.6 -2.8C-3 -2.4 3 -0.8 9.2 2L9 3.2C3 0.6 -3 -1 -9.6 -1.4Z" fill="#f8c890"/></g></svg><svg style="left:1311.9px;top:95.2px" width="40" height="40" viewBox="-20.0 -20.0 40 40"><g transform="scale(1.0)"><rect x="-9.6" y="-7" width="19.2" height="14.4" fill="#f0a850" stroke="#b06a1c" stroke-width="0.8"/><path d="M-9.6 -2.2H9.6M-9.6 2.6H9.6M-2 -7V-2.2M4 -2.2V2.6M-5 -2.2V2.6M-1 2.6V7.4M5.4 2.6V7.4" stroke="#a45c14" stroke-width="0.9"/><path d="M-9.6 -6.4H9.6" stroke="#fbd29c" stroke-width="0.8"/></g></svg><svg style="left:1350px;top:98px" width="32" height="32" viewBox="1350 98 32 32"><defs><radialGradient id="gRb" cx="0" cy="1" r="1.3" gradientUnits="objectBoundingBox"><stop offset="0" stop-color="#e01c10"/><stop offset="0.1" stop-color="#f07a10"/><stop offset="0.2" stop-color="#dce418"/><stop offset="0.33" stop-color="#40e020"/><stop offset="0.56" stop-color="#18e060"/><stop offset="0.72" stop-color="#14d0c0"/><stop offset="0.86" stop-color="#1488f0"/><stop offset="1" stop-color="#1420e0"/></radialGradient></defs><rect x="1354" y="102.2" width="26.2" height="26" rx="1" fill="#050505"/><rect x="1351.8" y="100" width="25.8" height="25.8" fill="url(#gRb)" stroke="#0a0a0a" stroke-width="0.7"/></svg><div class="gb" style="left:1170.6px;top:146.2px;width:247.6px;height:97.4px"></div><div class="a" style="left:1176.9px;top:141.2px;width:145.3px;height:11px;background:#f0f0f0"></div><span class="t" style="left:1179.90px;top:141px;font-size:11.5px;transform:scaleX(0.9355);color:#000;">Operation - Create Geometry</span><div class="a" style="left:1176.5px;top:158.9px;width:34.9px;height:39.2px;background:#cce4f7;border:1px solid #8cc0ea;border-top-color:#2a78c4;border-left-color:#3a84cc;border-radius:3px 0 0 3px"></div><div class="a" style="left:1211.0px;top:159.5px;width:35.1px;height:38.2px;background:#fdfdfd;border:1px solid #ededed;border-bottom-color:#d9d9d9;border-top-color:#f0f0f0"></div><div class="a" style="left:1245.5px;top:159.5px;width:35.1px;height:38.2px;background:#fdfdfd;border:1px solid #ededed;border-bottom-color:#d9d9d9;border-top-color:#f0f0f0"></div><div class="a" style="left:1280.0px;top:159.5px;width:35.1px;height:38.2px;background:#fdfdfd;border:1px solid #ededed;border-bottom-color:#d9d9d9;border-top-color:#f0f0f0"></div><div class="a" style="left:1314.5px;top:159.5px;width:35.1px;height:38.2px;background:#fdfdfd;border:1px solid #ededed;border-bottom-color:#d9d9d9;border-top-color:#f0f0f0"></div><div class="a" style="left:1349.0px;top:159.5px;width:35.1px;height:38.2px;background:#fdfdfd;border:1px solid #ededed;border-bottom-color:#d9d9d9;border-top-color:#f0f0f0"></div><div class="a" style="left:1383.5px;top:159.5px;width:35.1px;height:38.2px;background:#fdfdfd;border:1px solid #ededed;border-bottom-color:#d9d9d9;border-top-color:#f0f0f0"></div><div class="a" style="left:1176.5px;top:199.3px;width:36.2px;height:37.6px;background:#fdfdfd;border:1px solid #ededed;border-bottom-color:#d9d9d9;border-top-color:#f0f0f0"></div><div class="a" style="left:1212.1px;top:199.3px;width:36.2px;height:37.6px;background:#fdfdfd;border:1px solid #ededed;border-bottom-color:#d9d9d9;border-top-color:#f0f0f0"></div><div class="a" style="left:1247.7px;top:199.3px;width:36.2px;height:37.6px;background:#fdfdfd;border:1px solid #ededed;border-bottom-color:#d9d9d9;border-top-color:#f0f0f0"></div><svg style="left:1177.0px;top:160.4px" width="40" height="40" viewBox="-20.0 -20.0 40 40"><g transform="scale(1.1)"><rect x="-6" y="-5.4" width="13.4" height="13.4" fill="url(#gPurp)" stroke="#1a2050" stroke-width="0.9"/><path d="M-8.2 -10V-4M-11.2 -7H-5.2M-10.3 -9.1L-6.1 -4.9M-6.1 -9.1L-10.3 -4.9" stroke="#555" stroke-width="0.7"/><circle cx="-8.2" cy="-7" r="1" fill="#fff"/></g></svg><svg style="left:1208.8px;top:159.8px" width="40" height="40" viewBox="-20.0 -20.0 40 40"><g transform="scale(1.1)"><rect x="-6" y="-7.6" width="14" height="14" fill="url(#gPurp)" stroke="#3a4070" stroke-width="0.8"/><path d="M-7.6 7.6L2.8 -2.4" stroke="#0a0a0a" stroke-width="2.6" stroke-linecap="round"/><path d="M-2.6 -6.6C0 -7.8 2.4 -7.4 4 -6L7.4 -2.2L5.2 0L4 -1.2L2.4 0.4L-0.2 -2.4L1.2 -4C0.2 -5.2 -1 -6 -2.6 -6.6Z" fill="#3a3a3a" stroke="#111" stroke-width="0.5"/></g></svg><svg style="left:1242.8px;top:158.8px" width="40" height="40" viewBox="-20.0 -20.0 40 40"><g transform="scale(1.1)"><g transform="translate(-2.6,-2.6)"><rect x="-5.4" y="-7.2" width="11.4" height="11.4" fill="url(#gPurp)" stroke="#3a4070" stroke-width="0.8"/><g transform="scale(0.85)"><path d="M-7.6 7.6L2.8 -2.4" stroke="#0a0a0a" stroke-width="2.6" stroke-linecap="round"/><path d="M-2.6 -6.6C0 -7.8 2.4 -7.4 4 -6L7.4 -2.2L5.2 0L4 -1.2L2.4 0.4L-0.2 -2.4L1.2 -4C0.2 -5.2 -1 -6 -2.6 -6.6Z" fill="#3a3a3a" stroke="#111" stroke-width="0.5"/></g></g><text x="2.4" y="11" font-family="Liberation Sans" font-size="7.6" fill="#111">(v)</text></g></svg><svg style="left:1277.2px;top:158.8px" width="40" height="40" viewBox="-20.0 -20.0 40 40"><g transform="scale(1.1)"><rect x="-9" y="-8.6" width="12.4" height="5.4" rx="1" fill="url(#gPurp)" stroke="#2a3070" stroke-width="0.8"/><rect x="4.6" y="-2.6" width="5" height="11.8" rx="1" fill="url(#gPurp)" stroke="#2a3070" stroke-width="0.8"/><path d="M-6.6 -0.6C-6.6 3.4 -4.4 5 -0.6 5" fill="none" stroke="#111" stroke-width="1.7"/><path d="M2.6 5L-1.4 2V8Z" fill="#111"/></g></svg><svg style="left:1311.2px;top:158.8px" width="40" height="40" viewBox="-20.0 -20.0 40 40"><g transform="scale(1.1)"><circle cx="3" cy="-2.6" r="6.6" fill="#6a78c4" stroke="#3a4488" stroke-width="0.7"/><circle cx="-3" cy="2.6" r="6.6" fill="#7c8cd4" fill-opacity="0.9" stroke="#3a4488" stroke-width="0.7"/><path d="M-2.6 -3.6C1 -4.4 3.6 -2 3.4 2.2C0 3 -3 0.6 -2.6 -3.6Z" fill="#a4b0e8"/></g></svg><svg style="left:1345.7px;top:158.8px" width="40" height="40" viewBox="-20.0 -20.0 40 40"><g transform="scale(1.1)"><path d="M-7.6 -7L-3.6 -8.6L0 -7.4V-2L-4 -0.2L-7.6 -1.8Z" fill="#6a94c8" stroke="#2a4470" stroke-width="0.7"/><path d="M-7.6 -7L-4 -5.6L0 -7.4M-4 -5.6V-0.2" fill="none" stroke="#2a4470" stroke-width="0.6"/><path d="M9.6 -9L-1 4" stroke="#1a1a1a" stroke-width="1.5"/><path d="M-1.6 2L1.4 4.6L-2.4 10L-6.4 9.6L-5.6 5.6Z" fill="#8a8a8a" stroke="#5a5a5a" stroke-width="0.5"/></g></svg><svg style="left:1380.2px;top:158.8px" width="40" height="40" viewBox="-20.0 -20.0 40 40"><g transform="scale(1.15)"><rect x="-8" y="-8.6" width="11.6" height="11.6" fill="url(#gPurp)" stroke="#0a0a2a" stroke-width="1"/><rect x="-3.4" y="-2.2" width="11.4" height="9.2" fill="#eef2ff" stroke="#8a8a8a" stroke-width="2.2"/><rect x="-3.4" y="-2.2" width="11.4" height="9.2" fill="#e4eafc" stroke="#fff" stroke-width="0.9"/><rect x="-2.2" y="-1" width="5.6" height="4" fill="#3c48a8"/></g></svg><svg style="left:1175.3px;top:198.0px" width="40" height="40" viewBox="-20.0 -20.0 40 40"><g transform="scale(1.1)"><path d="M-4.6 -2.4L8.4 5.6L9.6 7.6L6.8 7.6L-3 1.2Z" fill="#cfcfcf" stroke="#444" stroke-width="0.8" stroke-linejoin="round"/><path d="M-4.4 2.6L7.2 -7L9.4 -7.4L8.6 -5L-2.2 4.4Z" fill="#e2e2e2" stroke="#444" stroke-width="0.8" stroke-linejoin="round"/><path d="M-1.6 -0.2L-5.6 -4.4" stroke="#0a0a0a" stroke-width="2.4"/><ellipse cx="-6.6" cy="-5.4" rx="2.6" ry="2" transform="rotate(40 -6.6 -5.4)" fill="none" stroke="#0a0a0a" stroke-width="1.7"/><path d="M-1.6 1.6L-5.4 4.8" stroke="#0a0a0a" stroke-width="2.4"/><ellipse cx="-6.8" cy="6" rx="2.7" ry="2" transform="rotate(-35 -6.8 6)" fill="none" stroke="#0a0a0a" stroke-width="1.7"/></g></svg><svg style="left:1210.5px;top:198.0px" width="40" height="40" viewBox="-20.0 -20.0 40 40"><g transform="scale(1.05)"><path d="M-3 -7H9M-3 0H9M-3 7H9" stroke="#0a0a0a" stroke-width="1.7"/><rect x="-9" y="-9" width="3.8" height="3.8" fill="#5a62b8" stroke="#1a1a3a" stroke-width="0.7"/><rect x="-9" y="-2" width="3.8" height="3.8" fill="#5a62b8" stroke="#1a1a3a" stroke-width="0.7"/><rect x="-9" y="5" width="3.8" height="3.8" fill="#5a62b8" stroke="#1a1a3a" stroke-width="0.7"/></g></svg><svg style="left:1245.5px;top:198.0px" width="40" height="40" viewBox="-20.0 -20.0 40 40"><g transform="scale(1.0)"><path d="M-8.6 -5.4L-4.6 -9L0.2 -3.6L6.4 -8.6L9.4 -5.6L3.6 0L9 6L5.2 9.4L0 3.6L-5.8 9.2L-9.2 6L-3.4 0Z" fill="#6a86cc" stroke="#2c4684" stroke-width="1" stroke-linejoin="round" transform="rotate(-12) skewX(-8)"/></g></svg><div class="gb" style="left:1170.6px;top:250.2px;width:247.6px;height:57.4px"></div><div class="a" style="left:1176.9px;top:245.2px;width:84.3px;height:11px;background:#f0f0f0"></div><span class="t" style="left:1179.90px;top:245px;font-size:11.5px;transform:scaleX(0.9424);color:#000;">Entity - Volumes</span><div class="a" style="left:1176.5px;top:262.8px;width:34.3px;height:39.2px;background:#cce4f7;border:1px solid #8cc0ea;border-top-color:#2a78c4;border-left-color:#3a84cc;border-radius:3px 0 0 3px"></div><div class="a" style="left:1210.4px;top:263.4px;width:34.5px;height:38.2px;background:#fdfdfd;border:1px solid #ededed;border-bottom-color:#d9d9d9;border-top-color:#f0f0f0"></div><div class="a" style="left:1244.2px;top:263.4px;width:34.5px;height:38.2px;background:#fdfdfd;border:1px solid #ededed;border-bottom-color:#d9d9d9;border-top-color:#f0f0f0"></div><div class="a" style="left:1278.1px;top:263.4px;width:34.5px;height:38.2px;background:#fdfdfd;border:1px solid #ededed;border-bottom-color:#d9d9d9;border-top-color:#f0f0f0"></div><div class="a" style="left:1311.9px;top:263.4px;width:38.3px;height:38.2px;background:#fdfdfd;border:1px solid #ededed;border-bottom-color:#d9d9d9;border-top-color:#f0f0f0"></div><svg style="left:1176.9px;top:263.6px" width="40" height="40" viewBox="-20.0 -20.0 40 40"><g transform="scale(1.0)"><g transform="scale(0.98)"><path d="M-10.9 -5.6L2.5 -3.6L2.5 10.6L-9.2 6.2Z" fill="url(#gBlueFace)"/><path d="M-10.9 -5.6L-0.3 -10.3L10.7 -8.7L2.5 -3.6Z" fill="url(#gBlueTop)"/><path d="M2.5 -3.6L10.7 -8.7L9.2 4.5L2.5 10.6Z" fill="#0e3468"/><path d="M-10.9 -5.6L-0.3 -10.3L10.7 -8.7L9.2 4.5L2.5 10.6L-9.2 6.2ZM2.5 -3.6L-10.9 -5.6M2.5 -3.6L10.7 -8.7M2.5 -3.6L2.5 10.6" fill="none" stroke="#06101e" stroke-width="1.22" stroke-linejoin="round"/></g></g></svg><svg style="left:1210.2px;top:262.6px" width="40" height="40" viewBox="-20.0 -20.0 40 40"><g transform="scale(1.0)"><g transform="scale(0.98)"><path d="M-8.4 -9.6L9.6 -6.2L9.2 11.2L-5.6 6.4Z" fill="url(#gSurf)" stroke="#081a34" stroke-width="1.2" stroke-linejoin="round"/></g></g></svg><svg style="left:1244.2px;top:263.0px" width="40" height="40" viewBox="-20.0 -20.0 40 40"><g transform="scale(1.0)"><g transform="scale(0.9)"><path d="M-8.4 8.4C-7 -0.6 -1.4 -6.2 7.2 -7.2" fill="none" stroke="#1c2a54" stroke-width="2.2" stroke-linecap="round"/><path d="M-8.4 8.4C-7 -0.6 -1.4 -6.2 7.2 -7.2" fill="none" stroke="#8a9ac8" stroke-width="0.7" stroke-dasharray="1 1.2"/></g></g></svg><svg style="left:1278.2px;top:262.8px" width="40" height="40" viewBox="-20.0 -20.0 40 40"><g transform="scale(1.0)"><g transform="scale(1.03)"><circle cx="0" cy="0.4" r="6.2" fill="url(#gBall)"/></g></g></svg><svg style="left:1311.8px;top:263.4px" width="40" height="40" viewBox="-20.0 -20.0 40 40"><g transform="scale(1.0)"><g transform="scale(0.98)"><g transform="scale(1.08)"><g transform="translate(0,-5.4) scale(0.92)"><path d="M-5 6.6C-5 2 -3 0.2 0 0.2C3 0.2 5 2 5 6.6Z" fill="#0e3a78"/><circle cx="0" cy="-1.9" r="2.9" fill="url(#gBall)"/></g><g transform="translate(-5.6,-2.2) scale(0.96)"><path d="M-5 6.6C-5 2 -3 0.2 0 0.2C3 0.2 5 2 5 6.6Z" fill="#0e3a78"/><circle cx="0" cy="-1.9" r="2.9" fill="url(#gBall)"/></g><g transform="translate(5.6,-2.2) scale(0.96)"><path d="M-5 6.6C-5 2 -3 0.2 0 0.2C3 0.2 5 2 5 6.6Z" fill="#0e3a78"/><circle cx="0" cy="-1.9" r="2.9" fill="url(#gBall)"/></g><g transform="translate(0,1.6) scale(1.08)"><path d="M-5 6.6C-5 2 -3 0.2 0 0.2C3 0.2 5 2 5 6.6Z" fill="#0e3a78"/><circle cx="0" cy="-1.9" r="2.9" fill="url(#gBall)"/></g></g></g></g></svg><div class="a" style="left:1172.6px;top:317.4px;width:242.8px;height:21.2px;background:#fcfcfc;border:1px solid #eaeaea;border-radius:2px"></div><svg style="left:1178.6px;top:320px" width="14" height="16" viewBox="0 0 14 16"><defs><linearGradient id="gCyl" x1="0" y1="0" x2="1" y2="0"><stop offset="0" stop-color="#3a74b4"/><stop offset="0.45" stop-color="#8ab4e0"/><stop offset="1" stop-color="#0c3468"/></linearGradient></defs><path d="M0.8 2.6V13C0.8 15 13.2 15 13.2 13V2.6Z" fill="url(#gCyl)" stroke="#0a2244" stroke-width="0.9"/><ellipse cx="7" cy="2.6" rx="6.2" ry="1.9" fill="#2a5c98" stroke="#0a2244" stroke-width="0.9"/></svg><span class="t" style="left:1196.40px;top:322px;font-size:11.5px;transform:scaleX(0.9151);color:#000;">Cylinder</span><svg style="left:1403.6px;top:325.6px" width="8" height="6" viewBox="0 0 8 6"><path d="M0.5 0.8L4 4.4L7.5 0.8" fill="none" stroke="#555" stroke-width="1"/></svg><span class="t" style="left:1169.20px;top:356px;font-size:11.5px;transform:scaleX(0.9386);color:#000;">Height</span><div class="a" style="left:1205.7px;top:352.6px;width:217px;height:18px;background:#fdfdfd;border:1px solid #f0f0f0;border-bottom:1px solid #6c6c6c;border-radius:2px"></div><div class="gb" style="left:1169.2px;top:375.5px;width:253.5px;height:29px;border-color:#e6e6e6"></div><svg style="left:1174px;top:382.5px" width="16" height="16" viewBox="-8 -8 16 16"><circle r="6.6" fill="#0a64bc"/><circle r="2.9" fill="#fff"/></svg><span class="t" style="left:1193.80px;top:385px;font-size:11.5px;transform:scaleX(0.9037);color:#000;">Circular</span><svg style="left:1297.3px;top:382.5px" width="16" height="16" viewBox="-8 -8 16 16"><circle r="6.1" fill="#f6f6f6" stroke="#5c5c5c" stroke-width="1"/></svg><span class="t" style="left:1318.20px;top:385px;font-size:11.5px;transform:scaleX(0.9056);color:#000;">Elliptical</span><span class="t" style="left:1175.20px;top:420px;font-size:11.5px;transform:scaleX(0.8716);color:#000;">Radius</span><div class="a" style="left:1213px;top:417px;width:203.4px;height:17.4px;background:#fdfdfd;border-radius:2px"></div><div class="wb" style="left:1169.4px;top:446.6px;width:28.6px;height:28.8px;background:#fdfdfd;border-color:#e4e4e4;border-radius:4px"></div><svg style="left:1172.8px;top:449.8px" width="22" height="22" viewBox="-11 -11 22 22"><circle r="9.4" fill="none" stroke="#111" stroke-width="1.35"/><path d="M-2 -1.7H0.9V5H2.3V6H-2.2V5H-0.8V-0.7H-2Z" fill="#111"/><circle cx="-0.1" cy="-4.6" r="1.15" fill="#111"/></svg><svg style="left:1207.7px;top:448.9px" width="24" height="24" viewBox="-12 -12 24 24"><defs><linearGradient id="gRst" x1="0" y1="0" x2="1" y2="0.8"><stop offset="0" stop-color="#5a8ee0"/><stop offset="0.5" stop-color="#1a48b8"/><stop offset="1" stop-color="#0a2a9c"/></linearGradient></defs><path d="M-7.3 0.2A7.3 7.3 0 1 1 0.2 7.3" fill="none" stroke="url(#gRst)" stroke-width="3"/><path d="M-11.3 -0.6H-2.9L-7.1 3.6Z" fill="#1c4cc0"/></svg><div class="a" style="left:1349px;top:449.2px;width:73.8px;height:22.6px;background:#fdfdfd;border:1px solid #78b4ea;border-top-color:#a4ccf0;border-radius:3.5px"></div><span class="t" style="left:1373.00px;top:455px;font-size:11.5px;transform:scaleX(0.8969);color:#000;">Apply</span><div class="a" style="left:1164px;top:656.6px;width:261px;height:1px;background:#e0e0e0"></div><div class="a" style="left:1171.8px;top:660.4px;width:17.6px;height:2.6px;border-radius:9px 9px 0 0;background:#2a9a9a;border:1px solid #fff;border-bottom:none"></div>
</body></html>
